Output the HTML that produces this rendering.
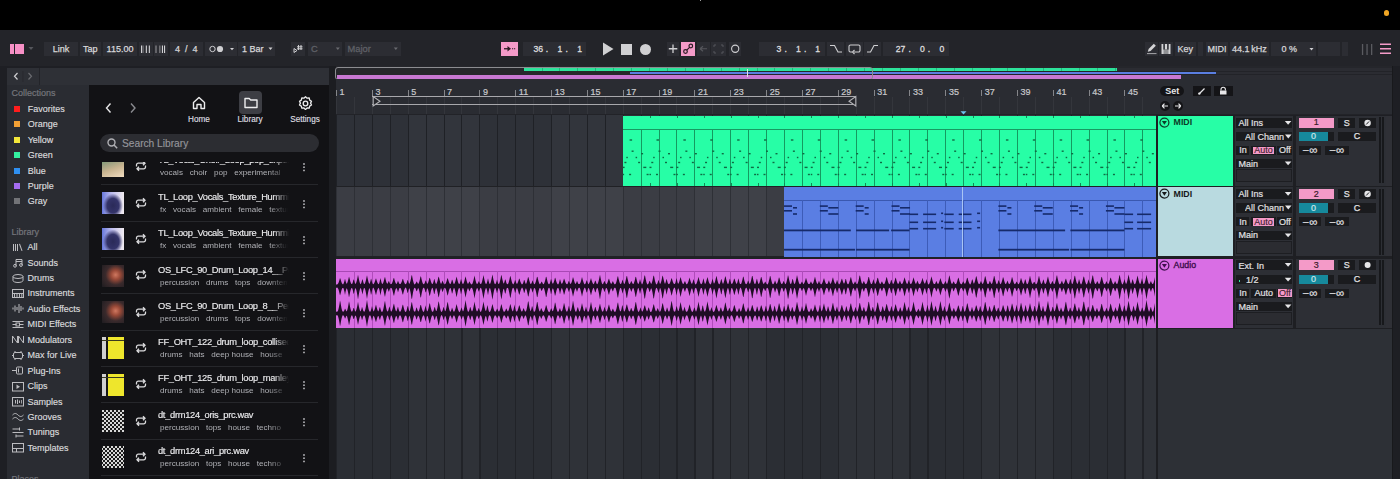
<!DOCTYPE html><html><head><meta charset="utf-8"><style>
*{margin:0;padding:0;box-sizing:border-box}
html,body{width:1400px;height:479px;overflow:hidden;background:#1e1f24;font-family:"Liberation Sans",sans-serif}
body>div,body>span,body>svg{position:absolute}
span{white-space:nowrap;line-height:1}
svg{overflow:visible}
</style></head><body>
<div style="left:0.00px;top:0.00px;width:1400.00px;height:30.00px;background:#000;"></div>
<div style="left:1384.20px;top:10.30px;width:5.30px;height:5.30px;background:#f0a624;border-radius:50%"></div>
<div style="left:700.00px;top:0.00px;width:1.00px;height:1.30px;background:#a0a0a0;"></div>
<div style="left:0.00px;top:30.00px;width:1400.00px;height:36.00px;background:#232429;"></div>
<div style="left:9.90px;top:43.70px;width:3.90px;height:10.40px;background:#f790c6;"></div>
<div style="left:15.40px;top:43.70px;width:8.50px;height:10.40px;background:#f790c6;"></div>
<svg style="left:27.00px;top:44.00px;" width="8" height="8" viewBox="0 0 8 8"><path d="M1.5 3h5L4 6z" fill="#55565c"/></svg>
<div style="left:44.00px;top:42.00px;width:34.00px;height:13.50px;background:#2c2d33;"></div>
<span style="left:44.00px;width:34.00px;top:45.25px;font-size:9px;color:#d8d8da;text-align:center;-webkit-text-stroke:0.25px #d8d8da">Link</span>
<div style="left:80.00px;top:42.00px;width:20.75px;height:13.50px;background:#2c2d33;"></div>
<span style="left:80.00px;width:20.75px;top:45.25px;font-size:9px;color:#d8d8da;text-align:center;-webkit-text-stroke:0.25px #d8d8da">Tap</span>
<div style="left:103.00px;top:42.00px;width:34.00px;height:13.50px;background:#2c2d33;"></div>
<span style="left:103.00px;width:34.00px;top:45.25px;font-size:9px;color:#d8d8da;text-align:center;-webkit-text-stroke:0.25px #d8d8da">115.00</span>
<div style="left:139.00px;top:42.00px;width:13.50px;height:13.50px;background:#2c2d33;"></div>
<svg style="left:139.00px;top:42.00px;" width="14" height="14" viewBox="0 0 14 14"><g fill="#cfcfd2"><rect x="2" y="3.5" width="1.1" height="7.5"/><rect x="3.6" y="3.5" width="0.9" height="7.5" fill="#8a8a8e"/><rect x="6.8" y="3.5" width="1.1" height="7.5"/><rect x="9.8" y="3.5" width="1.1" height="7.5"/></g></svg>
<div style="left:154.00px;top:42.00px;width:14.00px;height:13.50px;background:#2c2d33;"></div>
<svg style="left:154.00px;top:42.00px;" width="14" height="14" viewBox="0 0 14 14"><g fill="#cfcfd2"><rect x="1.5" y="3.5" width="1" height="7.5" fill="#9a9a9e"/><rect x="5.3" y="3.5" width="1.1" height="7.5" fill="#8a8a8e"/><rect x="7.9" y="3.5" width="1.1" height="7.5"/><rect x="10" y="3.5" width="1.1" height="7.5"/></g></svg>
<div style="left:169.60px;top:42.00px;width:33.40px;height:13.50px;background:#2c2d33;"></div>
<span style="left:169.60px;width:33.40px;top:45.25px;font-size:9px;color:#d8d8da;text-align:center;-webkit-text-stroke:0.25px #d8d8da">4&nbsp;&nbsp;/&nbsp;&nbsp;4</span>
<div style="left:205.00px;top:42.00px;width:31.60px;height:13.50px;background:#2c2d33;"></div>
<svg style="left:205.00px;top:42.00px;" width="32" height="14" viewBox="0 0 32 14"><circle cx="7.5" cy="7" r="2.7" fill="none" stroke="#cfcfd2" stroke-width="1"/><circle cx="15" cy="7" r="3.1" fill="#cfcfd2"/><path d="M25 6h4l-2 2.3z" fill="#cfcfd2"/></svg>
<div style="left:238.00px;top:42.00px;width:36.70px;height:13.50px;background:#2c2d33;"></div>
<span style="left:242.00px;top:44.60px;font-size:9px;color:#d8d8da;-webkit-text-stroke:0.25px #d8d8da">1 Bar</span>
<svg style="left:264.50px;top:42.00px;" width="12" height="14" viewBox="0 0 12 14"><path d="M3.5 5.5h4l-2 2.5z" fill="#cfcfd2"/></svg>
<div style="left:291.00px;top:42.00px;width:13.50px;height:13.50px;background:#2c2d33;"></div>
<svg style="left:291.00px;top:42.00px;" width="14" height="14" viewBox="0 0 14 14"><path d="M3 10.5 L3 6.5 L6 8.5 Z" fill="none" stroke="#cfcfd2" stroke-width="1"/><g fill="#cfcfd2"><rect x="7" y="3" width="1" height="5"/><rect x="9.5" y="3" width="1" height="5"/><rect x="6" y="4.3" width="5.5" height="1"/><rect x="6" y="6.3" width="5.5" height="1"/></g></svg>
<div style="left:307.60px;top:42.00px;width:34.40px;height:13.50px;background:#2c2d33;"></div>
<span style="left:311.00px;top:44.60px;font-size:9.3px;color:#5f6066;-webkit-text-stroke:0.3px #5f6066">C</span>
<svg style="left:335.00px;top:42.00px;" width="12" height="14" viewBox="0 0 12 14"><path d="M0.8 5.5h4l-2 2.5z" fill="#6a6b70"/></svg>
<div style="left:344.50px;top:42.00px;width:56.10px;height:13.50px;background:#2c2d33;"></div>
<span style="left:347.50px;top:44.60px;font-size:9.3px;color:#5f6066;-webkit-text-stroke:0.3px #5f6066">Major</span>
<svg style="left:393.00px;top:42.00px;" width="12" height="14" viewBox="0 0 12 14"><path d="M0.8 5.5h4l-2 2.5z" fill="#6a6b70"/></svg>
<div style="left:501.40px;top:42.00px;width:17.10px;height:13.50px;background:#f49ac8;"></div>
<svg style="left:501.40px;top:42.00px;" width="17" height="14" viewBox="0 0 17 14"><path d="M3 6.75h4" stroke="#2a1a22" stroke-width="1.3"/><path d="M6.5 4v5.5l3.5-2.75z" fill="#2a1a22"/><path d="M11 6.75h1.2M13 6.75h1.2" stroke="#2a1a22" stroke-width="1"/></svg>
<div style="left:523.00px;top:42.00px;width:63.00px;height:13.50px;background:#2c2d33;"></div>
<span style="left:533.60px;top:45.20px;font-size:8.6px;color:#dcdcde;-webkit-text-stroke:0.3px #dcdcde">36</span>
<span style="left:545.80px;top:45.20px;font-size:8.6px;color:#dcdcde;-webkit-text-stroke:0.3px #dcdcde">.</span>
<span style="left:557.60px;top:45.20px;font-size:8.6px;color:#dcdcde;-webkit-text-stroke:0.3px #dcdcde">1</span>
<span style="left:565.50px;top:45.20px;font-size:8.6px;color:#dcdcde;-webkit-text-stroke:0.3px #dcdcde">.</span>
<span style="left:577.20px;top:45.20px;font-size:8.6px;color:#dcdcde;-webkit-text-stroke:0.3px #dcdcde">1</span>
<svg style="left:600.00px;top:40.00px;" width="16" height="18" viewBox="0 0 16 18"><path d="M3 2.5 L13.5 9 L3 15.5 Z" fill="#d0d0d2"/></svg>
<div style="left:621.00px;top:43.50px;width:11.00px;height:11.00px;background:#d0d0d2;"></div>
<div style="left:640.00px;top:43.50px;width:11.00px;height:11.00px;background:#d0d0d2;border-radius:50%"></div>
<div style="left:667.00px;top:42.00px;width:11.50px;height:13.50px;background:#2c2d33;"></div>
<svg style="left:667.00px;top:42.00px;" width="12" height="14" viewBox="0 0 12 14"><path d="M6 2.5v8.5M1.8 6.75h8.5" stroke="#cfcfd2" stroke-width="1.3"/></svg>
<div style="left:681.00px;top:42.00px;width:14.00px;height:13.50px;background:#f49ac8;"></div>
<svg style="left:681.00px;top:42.00px;" width="14" height="14" viewBox="0 0 14 14"><circle cx="4.5" cy="9.5" r="1.8" fill="none" stroke="#2a1a22" stroke-width="1.2"/><circle cx="9.8" cy="4" r="1.8" fill="none" stroke="#2a1a22" stroke-width="1.2"/><path d="M5.7 8.2L8.6 5.3" stroke="#2a1a22" stroke-width="1.2"/></svg>
<div style="left:697.00px;top:42.00px;width:13.00px;height:13.50px;background:#2c2d33;"></div>
<svg style="left:697.00px;top:42.00px;" width="13" height="14" viewBox="0 0 13 14"><path d="M3 6.75h7M3 6.75l3-2.5M3 6.75l3 2.5" stroke="#55565c" stroke-width="1.2" fill="none"/></svg>
<div style="left:711.40px;top:42.00px;width:14.30px;height:13.50px;background:#2c2d33;"></div>
<svg style="left:711.40px;top:42.00px;" width="15" height="14" viewBox="0 0 15 14"><path d="M3 5V3h2M10 3h2v2M12 9v2h-2M5 11H3V9" stroke="#55565c" stroke-width="1" fill="none"/></svg>
<div style="left:728.60px;top:42.00px;width:12.40px;height:13.50px;background:#2c2d33;"></div>
<svg style="left:728.60px;top:42.00px;" width="13" height="14" viewBox="0 0 13 14"><circle cx="6.2" cy="6.75" r="3.6" fill="none" stroke="#cfcfd2" stroke-width="1.1"/></svg>
<div style="left:758.60px;top:42.00px;width:66.40px;height:13.50px;background:#2c2d33;"></div>
<span style="left:776.60px;top:45.20px;font-size:8.6px;color:#dcdcde;-webkit-text-stroke:0.3px #dcdcde">3</span>
<span style="left:784.60px;top:45.20px;font-size:8.6px;color:#dcdcde;-webkit-text-stroke:0.3px #dcdcde">.</span>
<span style="left:796.00px;top:45.20px;font-size:8.6px;color:#dcdcde;-webkit-text-stroke:0.3px #dcdcde">1</span>
<span style="left:804.00px;top:45.20px;font-size:8.6px;color:#dcdcde;-webkit-text-stroke:0.3px #dcdcde">.</span>
<span style="left:815.20px;top:45.20px;font-size:8.6px;color:#dcdcde;-webkit-text-stroke:0.3px #dcdcde">1</span>
<div style="left:826.60px;top:42.00px;width:17.40px;height:13.50px;background:#2c2d33;"></div>
<svg style="left:826.60px;top:42.00px;" width="18" height="14" viewBox="0 0 18 14"><path d="M3 3.5h4.5l3.5 6.5h4" stroke="#cfcfd2" stroke-width="1.1" fill="none"/></svg>
<div style="left:845.70px;top:42.00px;width:17.30px;height:13.50px;background:#2c2d33;"></div>
<svg style="left:845.70px;top:42.00px;" width="18" height="14" viewBox="0 0 18 14"><path d="M6 10H4.5a1.5 1.5 0 0 1-1.5-1.5V4.5A1.5 1.5 0 0 1 4.5 3h8A1.5 1.5 0 0 1 14 4.5v4a1.5 1.5 0 0 1-1.5 1.5H8" stroke="#cfcfd2" stroke-width="1.1" fill="none"/><path d="M8.5 8l-2 2 2 2" stroke="#cfcfd2" stroke-width="1.1" fill="none"/></svg>
<div style="left:864.00px;top:42.00px;width:17.00px;height:13.50px;background:#2c2d33;"></div>
<svg style="left:864.00px;top:42.00px;" width="17" height="14" viewBox="0 0 17 14"><path d="M3 10h3.5l3.5-6.5h4" stroke="#cfcfd2" stroke-width="1.1" fill="none"/></svg>
<div style="left:883.00px;top:42.00px;width:65.60px;height:13.50px;background:#2c2d33;"></div>
<span style="left:895.80px;top:45.20px;font-size:8.6px;color:#dcdcde;-webkit-text-stroke:0.3px #dcdcde">27</span>
<span style="left:908.40px;top:45.20px;font-size:8.6px;color:#dcdcde;-webkit-text-stroke:0.3px #dcdcde">.</span>
<span style="left:920.00px;top:45.20px;font-size:8.6px;color:#dcdcde;-webkit-text-stroke:0.3px #dcdcde">0</span>
<span style="left:927.80px;top:45.20px;font-size:8.6px;color:#dcdcde;-webkit-text-stroke:0.3px #dcdcde">.</span>
<span style="left:939.40px;top:45.20px;font-size:8.6px;color:#dcdcde;-webkit-text-stroke:0.3px #dcdcde">0</span>
<div style="left:1144.50px;top:42.00px;width:13.00px;height:13.50px;background:#2c2d33;"></div>
<svg style="left:1144.50px;top:42.00px;" width="13" height="14" viewBox="0 0 13 14"><path d="M2.8 9.8l0.8-2.8 5.2-5.2 2 2-5.2 5.2z" fill="#d4d4d6"/><rect x="2" y="11" width="9.5" height="1.1" fill="#9a9a9e"/></svg>
<div style="left:1159.00px;top:42.00px;width:13.50px;height:13.50px;background:#2c2d33;"></div>
<svg style="left:1159.00px;top:42.00px;" width="14" height="14" viewBox="0 0 14 14"><rect x="2.5" y="2" width="9" height="10" fill="#d4d4d6"/><g fill="#2c2d33"><rect x="4.3" y="2" width="1.6" height="5.5"/><rect x="8.1" y="2" width="1.6" height="5.5"/><rect x="6.6" y="7" width="0.8" height="5"/><rect x="4.8" y="7" width="0.6" height="5"/><rect x="8.6" y="7" width="0.6" height="5"/></g></svg>
<div style="left:1175.00px;top:42.00px;width:20.50px;height:13.50px;background:#2c2d33;"></div>
<span style="left:1175.00px;width:20.50px;top:45.25px;font-size:9px;color:#d8d8da;text-align:center;-webkit-text-stroke:0.25px #d8d8da">Key</span>
<div style="left:1197.50px;top:42.00px;width:5.50px;height:13.50px;background:#2c2d33;"></div>
<div style="left:1206.00px;top:42.00px;width:22.00px;height:13.50px;background:#2c2d33;"></div>
<span style="left:1206.00px;width:22.00px;top:45.25px;font-size:9px;color:#d8d8da;text-align:center;-webkit-text-stroke:0.25px #d8d8da">MIDI</span>
<div style="left:1230.00px;top:42.00px;width:38.75px;height:13.50px;background:#2c2d33;"></div>
<span style="left:1230.00px;width:38.75px;top:45.25px;font-size:9px;color:#d8d8da;text-align:center;-webkit-text-stroke:0.25px #d8d8da">44.1&thinsp;kHz</span>
<div style="left:1271.00px;top:42.00px;width:44.50px;height:13.50px;background:#2c2d33;"></div>
<span style="left:1281.50px;top:44.60px;font-size:9px;color:#d8d8da;-webkit-text-stroke:0.25px #d8d8da">0 %</span>
<svg style="left:1306.00px;top:42.00px;" width="12" height="14" viewBox="0 0 12 14"><path d="M3.5 6h4l-2 2.5z" fill="#cfcfd2"/></svg>
<div style="left:1317.50px;top:42.00px;width:22.50px;height:13.50px;background:#2c2d33;"></div>
<div style="left:1342.00px;top:42.00px;width:6.00px;height:13.50px;background:#2c2d33;"></div>
<svg style="left:1360.00px;top:42.00px;" width="14" height="14" viewBox="0 0 14 14"><g fill="#5a5b60"><rect x="1.9" y="2" width="1.3" height="11"/><rect x="6.4" y="2" width="1.3" height="11"/><rect x="11" y="2" width="1.3" height="11"/></g></svg>
<svg style="left:1379.00px;top:42.00px;" width="13" height="14" viewBox="0 0 13 14"><g fill="#f49ac8"><rect x="1" y="1.5" width="11" height="1.5"/><rect x="1" y="6" width="11" height="1.5"/><rect x="1" y="10.5" width="11" height="1.5"/></g></svg>
<div style="left:0.00px;top:66.00px;width:336.00px;height:413.00px;background:#1e1f24;"></div>
<div style="left:7.00px;top:68.00px;width:322.00px;height:16.50px;background:#2e3036;"></div>
<div style="left:38.50px;top:68.00px;width:1.20px;height:16.50px;background:#232429;"></div>
<svg style="left:7.00px;top:68.00px;" width="32" height="17" viewBox="0 0 32 17"><path d="M10.5 5L7.5 8.25l3 3.25" stroke="#cfcfd2" stroke-width="1.2" fill="none"/><path d="M21.5 5l3 3.25-3 3.25" stroke="#6a6b70" stroke-width="1.2" fill="none"/><rect x="15.5" y="3" width="0.8" height="11" fill="#26272c"/></svg>
<div style="left:7.00px;top:85.00px;width:81.50px;height:394.00px;background:#2a2c32;"></div>
<div style="left:88.50px;top:85.00px;width:240.50px;height:394.00px;background:#121215;"></div>
<span style="left:11.50px;top:89.30px;font-size:9px;color:#75767c;-webkit-text-stroke:0.2px #75767c">Collections</span>
<div style="left:14.00px;top:105.90px;width:6.00px;height:6.00px;background:#ff1d1d;"></div>
<span style="left:27.70px;top:104.80px;font-size:9px;color:#dcdcde;-webkit-text-stroke:0.15px #dcdcde">Favorites</span>
<div style="left:14.00px;top:121.33px;width:6.00px;height:6.00px;background:#f3a035;"></div>
<span style="left:27.70px;top:120.23px;font-size:9px;color:#dcdcde;-webkit-text-stroke:0.15px #dcdcde">Orange</span>
<div style="left:14.00px;top:136.76px;width:6.00px;height:6.00px;background:#f3e73a;"></div>
<span style="left:27.70px;top:135.66px;font-size:9px;color:#dcdcde;-webkit-text-stroke:0.15px #dcdcde">Yellow</span>
<div style="left:14.00px;top:152.19px;width:6.00px;height:6.00px;background:#34f0a0;"></div>
<span style="left:27.70px;top:151.09px;font-size:9px;color:#dcdcde;-webkit-text-stroke:0.15px #dcdcde">Green</span>
<div style="left:14.00px;top:167.62px;width:6.00px;height:6.00px;background:#2f8ff0;"></div>
<span style="left:27.70px;top:166.52px;font-size:9px;color:#dcdcde;-webkit-text-stroke:0.15px #dcdcde">Blue</span>
<div style="left:14.00px;top:183.05px;width:6.00px;height:6.00px;background:#a46cf0;"></div>
<span style="left:27.70px;top:181.95px;font-size:9px;color:#dcdcde;-webkit-text-stroke:0.15px #dcdcde">Purple</span>
<div style="left:14.00px;top:198.48px;width:6.00px;height:6.00px;background:#727377;"></div>
<span style="left:27.70px;top:197.38px;font-size:9px;color:#dcdcde;-webkit-text-stroke:0.15px #dcdcde">Gray</span>
<span style="left:11.50px;top:227.80px;font-size:9px;color:#75767c;-webkit-text-stroke:0.2px #75767c">Library</span>
<svg style="left:12.00px;top:240.70px;" width="13" height="13" viewBox="0 0 13 13"><g fill="#bcbcc0"><rect x="1" y="3" width="1" height="7"/><rect x="3" y="3" width="1" height="7"/><rect x="5" y="3" width="1" height="7"/><path d="M7 3l1-0.3 2.5 7-1 0.3z"/></g></svg>
<span style="left:27.50px;top:243.20px;font-size:9px;color:#dcdcde;-webkit-text-stroke:0.15px #dcdcde">All</span>
<svg style="left:12.00px;top:256.13px;" width="13" height="13" viewBox="0 0 13 13"><path d="M4 10V3.5h6v5.5" stroke="#bcbcc0" stroke-width="1" fill="none"/><circle cx="3" cy="9.8" r="1.4" fill="none" stroke="#bcbcc0" stroke-width="1"/><circle cx="9" cy="9" r="1.4" fill="none" stroke="#bcbcc0" stroke-width="1"/><path d="M4 5.5h6" stroke="#bcbcc0" stroke-width="1"/></svg>
<span style="left:27.50px;top:258.63px;font-size:9px;color:#dcdcde;-webkit-text-stroke:0.15px #dcdcde">Sounds</span>
<svg style="left:12.00px;top:271.56px;" width="13" height="13" viewBox="0 0 13 13"><ellipse cx="6" cy="4.5" rx="5" ry="2" fill="none" stroke="#bcbcc0" stroke-width="1"/><path d="M1 4.5v4c0 1.1 2.2 2 5 2s5-.9 5-2v-4" fill="none" stroke="#bcbcc0" stroke-width="1"/></svg>
<span style="left:27.50px;top:274.06px;font-size:9px;color:#dcdcde;-webkit-text-stroke:0.15px #dcdcde">Drums</span>
<svg style="left:12.00px;top:286.99px;" width="13" height="13" viewBox="0 0 13 13"><rect x="0.5" y="2.5" width="11" height="8" fill="none" stroke="#bcbcc0" stroke-width="1"/><path d="M0.5 6.5h11" stroke="#bcbcc0" stroke-width="1"/><g fill="#bcbcc0"><rect x="2" y="7" width="1" height="3"/><rect x="4.5" y="7" width="1" height="3"/><rect x="7" y="7" width="1" height="3"/><rect x="9.3" y="7" width="1" height="3"/></g></svg>
<span style="left:27.50px;top:289.49px;font-size:9px;color:#dcdcde;-webkit-text-stroke:0.15px #dcdcde">Instruments</span>
<svg style="left:12.00px;top:302.42px;" width="13" height="13" viewBox="0 0 13 13"><g fill="#bcbcc0"><rect x="0.5" y="5.5" width="1" height="2"/><rect x="2.5" y="3.5" width="1" height="6"/><rect x="4.5" y="5" width="1" height="3"/><rect x="6.5" y="2" width="1" height="9"/><rect x="8.5" y="4" width="1" height="5"/><rect x="10.5" y="5.5" width="1" height="2"/></g></svg>
<span style="left:27.50px;top:304.92px;font-size:9px;color:#dcdcde;-webkit-text-stroke:0.15px #dcdcde">Audio Effects</span>
<svg style="left:12.00px;top:317.85px;" width="13" height="13" viewBox="0 0 13 13"><path d="M0.5 3.5h11M0.5 6.5h4M7.5 6.5h4M0.5 9.5h11" stroke="#bcbcc0" stroke-width="1"/><rect x="4" y="5" width="3.5" height="3" fill="none" stroke="#bcbcc0" stroke-width="1"/></svg>
<span style="left:27.50px;top:320.35px;font-size:9px;color:#dcdcde;-webkit-text-stroke:0.15px #dcdcde">MIDI Effects</span>
<svg style="left:12.00px;top:333.28px;" width="13" height="13" viewBox="0 0 13 13"><path d="M0.5 10V3l5 7V3M6.5 10V3l5 7V3" stroke="#bcbcc0" stroke-width="1" fill="none"/></svg>
<span style="left:27.50px;top:335.78px;font-size:9px;color:#dcdcde;-webkit-text-stroke:0.15px #dcdcde">Modulators</span>
<svg style="left:12.00px;top:348.71px;" width="13" height="13" viewBox="0 0 13 13"><rect x="1.5" y="3.5" width="9" height="6" rx="1.5" fill="none" stroke="#bcbcc0" stroke-width="1"/><path d="M0 6.5h1.5M10.5 6.5H12M3 2v1.5M9 2v1.5M3 9.5v1.5M9 9.5v1.5" stroke="#bcbcc0" stroke-width="1"/></svg>
<span style="left:27.50px;top:351.21px;font-size:9px;color:#dcdcde;-webkit-text-stroke:0.15px #dcdcde">Max for Live</span>
<svg style="left:12.00px;top:364.14px;" width="13" height="13" viewBox="0 0 13 13"><rect x="4.5" y="3" width="6" height="7" rx="1" fill="none" stroke="#bcbcc0" stroke-width="1"/><path d="M0 6.5h4.5M6.5 4.5v4" stroke="#bcbcc0" stroke-width="1"/></svg>
<span style="left:27.50px;top:366.64px;font-size:9px;color:#dcdcde;-webkit-text-stroke:0.15px #dcdcde">Plug-Ins</span>
<svg style="left:12.00px;top:379.57px;" width="13" height="13" viewBox="0 0 13 13"><rect x="0.5" y="2.5" width="11" height="8.5" fill="none" stroke="#bcbcc0" stroke-width="1"/><path d="M4.5 4.5v4.5l3.5-2.25z" fill="#bcbcc0"/></svg>
<span style="left:27.50px;top:382.07px;font-size:9px;color:#dcdcde;-webkit-text-stroke:0.15px #dcdcde">Clips</span>
<svg style="left:12.00px;top:395.00px;" width="13" height="13" viewBox="0 0 13 13"><rect x="0.5" y="2.5" width="11" height="8.5" fill="none" stroke="#bcbcc0" stroke-width="1"/><g fill="#bcbcc0"><rect x="3" y="5" width="1" height="3.5"/><rect x="5" y="4.5" width="1" height="4.5"/><rect x="7" y="5.5" width="1" height="2.5"/><rect x="9" y="5" width="0.8" height="3.5"/></g></svg>
<span style="left:27.50px;top:397.50px;font-size:9px;color:#dcdcde;-webkit-text-stroke:0.15px #dcdcde">Samples</span>
<svg style="left:12.00px;top:410.43px;" width="13" height="13" viewBox="0 0 13 13"><path d="M0.5 5c2-2 3.5-2 5.5 0s3.5 2 5.5 0M0.5 9c2-2 3.5-2 5.5 0s3.5 2 5.5 0" stroke="#bcbcc0" stroke-width="1" fill="none"/></svg>
<span style="left:27.50px;top:412.93px;font-size:9px;color:#dcdcde;-webkit-text-stroke:0.15px #dcdcde">Grooves</span>
<svg style="left:12.00px;top:425.86px;" width="13" height="13" viewBox="0 0 13 13"><path d="M0.5 3h7M0.5 6.5h11M4 10h7.5M7.5 1.5v3M4 8.5v3" stroke="#bcbcc0" stroke-width="1" fill="none"/></svg>
<span style="left:27.50px;top:428.36px;font-size:9px;color:#dcdcde;-webkit-text-stroke:0.15px #dcdcde">Tunings</span>
<svg style="left:12.00px;top:441.29px;" width="13" height="13" viewBox="0 0 13 13"><rect x="0.5" y="2.5" width="11" height="8.5" fill="none" stroke="#bcbcc0" stroke-width="1"/><path d="M0.5 7.5h11M4.5 7.5v3.5" stroke="#bcbcc0" stroke-width="1"/></svg>
<span style="left:27.50px;top:443.79px;font-size:9px;color:#dcdcde;-webkit-text-stroke:0.15px #dcdcde">Templates</span>
<span style="left:11.50px;top:474.80px;font-size:9px;color:#75767c;-webkit-text-stroke:0.2px #75767c">Places</span>
<svg style="left:100.00px;top:100.00px;" width="40" height="16" viewBox="0 0 40 16"><path d="M10.5 3.5L6.5 8l4 4.5" stroke="#e6e6e8" stroke-width="1.4" fill="none"/><path d="M31 3.5l4 4.5-4 4.5" stroke="#8a8b90" stroke-width="1.4" fill="none"/></svg>
<svg style="left:191.00px;top:95.00px;" width="16" height="16" viewBox="0 0 16 16"><path d="M2.5 7.5L8 2.5l5.5 5V13.5H10V9.5H6v4H2.5z" fill="none" stroke="#ededee" stroke-width="1.4" stroke-linejoin="round"/></svg>
<span style="left:179.00px;width:40.00px;top:116.10px;font-size:8.2px;color:#dedee0;text-align:center;-webkit-text-stroke:0.15px #dedee0">Home</span>
<div style="left:239.00px;top:91.00px;width:23.00px;height:23.00px;background:#3d3e44;border-radius:4px"></div>
<svg style="left:242.50px;top:95.00px;" width="16" height="16" viewBox="0 0 16 16"><path d="M2 3.5h4.2l1.5 1.5H14v7.5H2z" fill="none" stroke="#ededee" stroke-width="1.4" stroke-linejoin="round"/></svg>
<span style="left:230.00px;width:40.00px;top:116.10px;font-size:8.2px;color:#dedee0;text-align:center;-webkit-text-stroke:0.15px #dedee0">Library</span>
<svg style="left:296.50px;top:94.50px;" width="17" height="17" viewBox="0 0 17 17"><path d="M8.5 1.8l1.6 1.4 2.1-.2.5 2.1 1.8 1.1-.9 1.9.9 1.9-1.8 1.1-.5 2.1-2.1-.2-1.6 1.4-1.6-1.4-2.1.2-.5-2.1-1.8-1.1.9-1.9-.9-1.9 1.8-1.1.5-2.1 2.1.2z" fill="none" stroke="#ededee" stroke-width="1.3" stroke-linejoin="round"/><circle cx="8.5" cy="8.5" r="2.3" fill="none" stroke="#ededee" stroke-width="1.3"/></svg>
<span style="left:280.00px;width:50.00px;top:116.10px;font-size:8.2px;color:#dedee0;text-align:center;-webkit-text-stroke:0.15px #dedee0">Settings</span>
<div style="left:100.00px;top:134.00px;width:219.00px;height:18.00px;background:#2c2d32;border-radius:9px"></div>
<svg style="left:106.00px;top:137.00px;" width="13" height="13" viewBox="0 0 13 13"><circle cx="5.5" cy="5.5" r="3.5" fill="none" stroke="#b0b0b4" stroke-width="1.4"/><path d="M8 8l3.2 3.2" stroke="#b0b0b4" stroke-width="1.5"/></svg>
<span style="left:122.00px;top:139.00px;font-size:10.2px;color:#95969b;-webkit-text-stroke:0.15px #95969b">Search Library</span>
<div style="left:88.5px;top:156px;width:240.5px;height:323px;overflow:hidden">
<div style="position:absolute;left:0;top:0;width:240.5px;height:5.7px;background:#121215;z-index:5"></div>
<div style="position:absolute;left:13.50px;top:-1.00px;width:22px;height:22px;background:linear-gradient(160deg,#4f9a6a 0%,#9aa080 35%,#c8b490 60%,#f0dcc0 100%)"></div>
<svg style="position:absolute;left:45.50px;top:3.70px" width="14" height="12" viewBox="0 0 14 12"><path d="M2.5 6.5V5a1.8 1.8 0 0 1 1.8-1.8H11M9 1.2l2 2-2 2M11.5 5.5V7a1.8 1.8 0 0 1-1.8 1.8H3M5 10.8l-2-2 2-2" stroke="#dcdcde" stroke-width="1.3" fill="none"/></svg>
<span style="position:absolute;left:69.50px;top:-2.10px;font-size:9.3px;color:#ececee;line-height:1.3;letter-spacing:-0.3px;-webkit-text-stroke:0.15px #ececee;width:131px;overflow:hidden;-webkit-mask-image:linear-gradient(90deg,#000 88%,transparent 100%)">TL_Vocal_Choir_Loop_pop_experim</span>
<span style="position:absolute;left:71.50px;top:12.90px;font-size:8.1px;color:#b0b1b6;width:128px;overflow:hidden;-webkit-mask-image:linear-gradient(90deg,#000 85%,transparent 100%)">vocals&nbsp;&nbsp; choir&nbsp;&nbsp; pop&nbsp;&nbsp; experimental</span>
<svg style="position:absolute;left:212.50px;top:4.70px" width="6" height="12" viewBox="0 0 6 12"><g fill="#b8b8bc"><circle cx="3" cy="3" r="0.9"/><circle cx="3" cy="6.2" r="0.9"/><circle cx="3" cy="9.4" r="0.9"/></g></svg>
<div style="position:absolute;left:12.50px;top:27.70px;width:216.50px;height:1.00px;background:#26272b;"></div>
<div style="position:absolute;left:13.50px;top:35.80px;width:22px;height:22px;background:radial-gradient(ellipse 45% 55% at 50% 62%,#2a2a58 0%,#34346a 60%,transparent 100%),linear-gradient(90deg,#6878dc 0%,#b8b8ec 40%,#f2ecf0 100%)"></div>
<svg style="position:absolute;left:45.50px;top:40.50px" width="14" height="12" viewBox="0 0 14 12"><path d="M2.5 6.5V5a1.8 1.8 0 0 1 1.8-1.8H11M9 1.2l2 2-2 2M11.5 5.5V7a1.8 1.8 0 0 1-1.8 1.8H3M5 10.8l-2-2 2-2" stroke="#dcdcde" stroke-width="1.3" fill="none"/></svg>
<span style="position:absolute;left:69.50px;top:34.70px;font-size:9.3px;color:#ececee;line-height:1.3;letter-spacing:-0.3px;-webkit-text-stroke:0.15px #ececee;width:131px;overflow:hidden;-webkit-mask-image:linear-gradient(90deg,#000 88%,transparent 100%)">TL_Loop_Vocals_Texture_Humming</span>
<span style="position:absolute;left:71.50px;top:49.70px;font-size:8.1px;color:#b0b1b6;width:128px;overflow:hidden;-webkit-mask-image:linear-gradient(90deg,#000 85%,transparent 100%)">fx&nbsp;&nbsp; vocals&nbsp;&nbsp; ambient&nbsp;&nbsp; female&nbsp;&nbsp; texture</span>
<svg style="position:absolute;left:212.50px;top:41.50px" width="6" height="12" viewBox="0 0 6 12"><g fill="#b8b8bc"><circle cx="3" cy="3" r="0.9"/><circle cx="3" cy="6.2" r="0.9"/><circle cx="3" cy="9.4" r="0.9"/></g></svg>
<div style="position:absolute;left:12.50px;top:64.50px;width:216.50px;height:1.00px;background:#26272b;"></div>
<div style="position:absolute;left:13.50px;top:72.30px;width:22px;height:22px;background:radial-gradient(ellipse 45% 55% at 50% 62%,#2a2a58 0%,#34346a 60%,transparent 100%),linear-gradient(90deg,#6878dc 0%,#b8b8ec 40%,#f2ecf0 100%)"></div>
<svg style="position:absolute;left:45.50px;top:77.00px" width="14" height="12" viewBox="0 0 14 12"><path d="M2.5 6.5V5a1.8 1.8 0 0 1 1.8-1.8H11M9 1.2l2 2-2 2M11.5 5.5V7a1.8 1.8 0 0 1-1.8 1.8H3M5 10.8l-2-2 2-2" stroke="#dcdcde" stroke-width="1.3" fill="none"/></svg>
<span style="position:absolute;left:69.50px;top:71.20px;font-size:9.3px;color:#ececee;line-height:1.3;letter-spacing:-0.3px;-webkit-text-stroke:0.15px #ececee;width:131px;overflow:hidden;-webkit-mask-image:linear-gradient(90deg,#000 88%,transparent 100%)">TL_Loop_Vocals_Texture_Humming</span>
<span style="position:absolute;left:71.50px;top:86.20px;font-size:8.1px;color:#b0b1b6;width:128px;overflow:hidden;-webkit-mask-image:linear-gradient(90deg,#000 85%,transparent 100%)">fx&nbsp;&nbsp; vocals&nbsp;&nbsp; ambient&nbsp;&nbsp; female&nbsp;&nbsp; texture</span>
<svg style="position:absolute;left:212.50px;top:78.00px" width="6" height="12" viewBox="0 0 6 12"><g fill="#b8b8bc"><circle cx="3" cy="3" r="0.9"/><circle cx="3" cy="6.2" r="0.9"/><circle cx="3" cy="9.4" r="0.9"/></g></svg>
<div style="position:absolute;left:12.50px;top:101.00px;width:216.50px;height:1.00px;background:#26272b;"></div>
<div style="position:absolute;left:13.50px;top:108.60px;width:22px;height:22px;background:radial-gradient(circle at 62% 45%,#d07860 0%,#9a4a38 25%,#3a2a2c 55%,#1e1c20 100%)"></div>
<svg style="position:absolute;left:45.50px;top:113.30px" width="14" height="12" viewBox="0 0 14 12"><path d="M2.5 6.5V5a1.8 1.8 0 0 1 1.8-1.8H11M9 1.2l2 2-2 2M11.5 5.5V7a1.8 1.8 0 0 1-1.8 1.8H3M5 10.8l-2-2 2-2" stroke="#dcdcde" stroke-width="1.3" fill="none"/></svg>
<span style="position:absolute;left:69.50px;top:107.50px;font-size:9.3px;color:#ececee;line-height:1.3;letter-spacing:-0.3px;-webkit-text-stroke:0.15px #ececee;width:131px;overflow:hidden;-webkit-mask-image:linear-gradient(90deg,#000 88%,transparent 100%)">OS_LFC_90_Drum_Loop_14__Perc</span>
<span style="position:absolute;left:71.50px;top:122.50px;font-size:8.1px;color:#b0b1b6;width:128px;overflow:hidden;-webkit-mask-image:linear-gradient(90deg,#000 85%,transparent 100%)">percussion&nbsp;&nbsp; drums&nbsp;&nbsp; tops&nbsp;&nbsp; downtempo</span>
<svg style="position:absolute;left:212.50px;top:114.30px" width="6" height="12" viewBox="0 0 6 12"><g fill="#b8b8bc"><circle cx="3" cy="3" r="0.9"/><circle cx="3" cy="6.2" r="0.9"/><circle cx="3" cy="9.4" r="0.9"/></g></svg>
<div style="position:absolute;left:12.50px;top:137.30px;width:216.50px;height:1.00px;background:#26272b;"></div>
<div style="position:absolute;left:13.50px;top:144.90px;width:22px;height:22px;background:radial-gradient(circle at 62% 45%,#d07860 0%,#9a4a38 25%,#3a2a2c 55%,#1e1c20 100%)"></div>
<svg style="position:absolute;left:45.50px;top:149.60px" width="14" height="12" viewBox="0 0 14 12"><path d="M2.5 6.5V5a1.8 1.8 0 0 1 1.8-1.8H11M9 1.2l2 2-2 2M11.5 5.5V7a1.8 1.8 0 0 1-1.8 1.8H3M5 10.8l-2-2 2-2" stroke="#dcdcde" stroke-width="1.3" fill="none"/></svg>
<span style="position:absolute;left:69.50px;top:143.80px;font-size:9.3px;color:#ececee;line-height:1.3;letter-spacing:-0.3px;-webkit-text-stroke:0.15px #ececee;width:131px;overflow:hidden;-webkit-mask-image:linear-gradient(90deg,#000 88%,transparent 100%)">OS_LFC_90_Drum_Loop_8__Perc_</span>
<span style="position:absolute;left:71.50px;top:158.80px;font-size:8.1px;color:#b0b1b6;width:128px;overflow:hidden;-webkit-mask-image:linear-gradient(90deg,#000 85%,transparent 100%)">percussion&nbsp;&nbsp; drums&nbsp;&nbsp; tops&nbsp;&nbsp; downtempo</span>
<svg style="position:absolute;left:212.50px;top:150.60px" width="6" height="12" viewBox="0 0 6 12"><g fill="#b8b8bc"><circle cx="3" cy="3" r="0.9"/><circle cx="3" cy="6.2" r="0.9"/><circle cx="3" cy="9.4" r="0.9"/></g></svg>
<div style="position:absolute;left:12.50px;top:173.60px;width:216.50px;height:1.00px;background:#26272b;"></div>
<div style="position:absolute;left:13.50px;top:181.20px;width:22px;height:22px;background:linear-gradient(180deg,transparent 0 12%,#3a3a20 12% 17%,transparent 17%),linear-gradient(90deg,#cfcfd0 0 16%,#151515 16% 27%,#eee62c 27%)"></div>
<svg style="position:absolute;left:45.50px;top:185.90px" width="14" height="12" viewBox="0 0 14 12"><path d="M2.5 6.5V5a1.8 1.8 0 0 1 1.8-1.8H11M9 1.2l2 2-2 2M11.5 5.5V7a1.8 1.8 0 0 1-1.8 1.8H3M5 10.8l-2-2 2-2" stroke="#dcdcde" stroke-width="1.3" fill="none"/></svg>
<span style="position:absolute;left:69.50px;top:180.10px;font-size:9.3px;color:#ececee;line-height:1.3;letter-spacing:-0.3px;-webkit-text-stroke:0.15px #ececee;width:131px;overflow:hidden;-webkit-mask-image:linear-gradient(90deg,#000 88%,transparent 100%)">FF_OHT_122_drum_loop_collised_</span>
<span style="position:absolute;left:71.50px;top:195.10px;font-size:8.1px;color:#b0b1b6;width:128px;overflow:hidden;-webkit-mask-image:linear-gradient(90deg,#000 85%,transparent 100%)">drums&nbsp;&nbsp; hats&nbsp;&nbsp; deep house&nbsp;&nbsp; house</span>
<svg style="position:absolute;left:212.50px;top:186.90px" width="6" height="12" viewBox="0 0 6 12"><g fill="#b8b8bc"><circle cx="3" cy="3" r="0.9"/><circle cx="3" cy="6.2" r="0.9"/><circle cx="3" cy="9.4" r="0.9"/></g></svg>
<div style="position:absolute;left:12.50px;top:209.90px;width:216.50px;height:1.00px;background:#26272b;"></div>
<div style="position:absolute;left:13.50px;top:217.50px;width:22px;height:22px;background:linear-gradient(180deg,transparent 0 12%,#3a3a20 12% 17%,transparent 17%),linear-gradient(90deg,#cfcfd0 0 16%,#151515 16% 27%,#eee62c 27%)"></div>
<svg style="position:absolute;left:45.50px;top:222.20px" width="14" height="12" viewBox="0 0 14 12"><path d="M2.5 6.5V5a1.8 1.8 0 0 1 1.8-1.8H11M9 1.2l2 2-2 2M11.5 5.5V7a1.8 1.8 0 0 1-1.8 1.8H3M5 10.8l-2-2 2-2" stroke="#dcdcde" stroke-width="1.3" fill="none"/></svg>
<span style="position:absolute;left:69.50px;top:216.40px;font-size:9.3px;color:#ececee;line-height:1.3;letter-spacing:-0.3px;-webkit-text-stroke:0.15px #ececee;width:131px;overflow:hidden;-webkit-mask-image:linear-gradient(90deg,#000 88%,transparent 100%)">FF_OHT_125_drum_loop_manley_</span>
<span style="position:absolute;left:71.50px;top:231.40px;font-size:8.1px;color:#b0b1b6;width:128px;overflow:hidden;-webkit-mask-image:linear-gradient(90deg,#000 85%,transparent 100%)">drums&nbsp;&nbsp; hats&nbsp;&nbsp; deep house&nbsp;&nbsp; house</span>
<svg style="position:absolute;left:212.50px;top:223.20px" width="6" height="12" viewBox="0 0 6 12"><g fill="#b8b8bc"><circle cx="3" cy="3" r="0.9"/><circle cx="3" cy="6.2" r="0.9"/><circle cx="3" cy="9.4" r="0.9"/></g></svg>
<div style="position:absolute;left:12.50px;top:246.20px;width:216.50px;height:1.00px;background:#26272b;"></div>
<div style="position:absolute;left:13.50px;top:253.80px;width:22px;height:22px;background:repeating-conic-gradient(#1c1c1c 0 25%,#d8d8d8 0 50%) 0 0/4px 4px"></div>
<svg style="position:absolute;left:45.50px;top:258.50px" width="14" height="12" viewBox="0 0 14 12"><path d="M2.5 6.5V5a1.8 1.8 0 0 1 1.8-1.8H11M9 1.2l2 2-2 2M11.5 5.5V7a1.8 1.8 0 0 1-1.8 1.8H3M5 10.8l-2-2 2-2" stroke="#dcdcde" stroke-width="1.3" fill="none"/></svg>
<span style="position:absolute;left:69.50px;top:252.70px;font-size:9.3px;color:#ececee;line-height:1.3;letter-spacing:-0.3px;-webkit-text-stroke:0.15px #ececee;width:131px;overflow:hidden;-webkit-mask-image:linear-gradient(90deg,#000 88%,transparent 100%)">dt_drm124_oris_prc.wav</span>
<span style="position:absolute;left:71.50px;top:267.70px;font-size:8.1px;color:#b0b1b6;width:128px;overflow:hidden;-webkit-mask-image:linear-gradient(90deg,#000 85%,transparent 100%)">percussion&nbsp;&nbsp; tops&nbsp;&nbsp; house&nbsp;&nbsp; techno</span>
<svg style="position:absolute;left:212.50px;top:259.50px" width="6" height="12" viewBox="0 0 6 12"><g fill="#b8b8bc"><circle cx="3" cy="3" r="0.9"/><circle cx="3" cy="6.2" r="0.9"/><circle cx="3" cy="9.4" r="0.9"/></g></svg>
<div style="position:absolute;left:12.50px;top:282.50px;width:216.50px;height:1.00px;background:#26272b;"></div>
<div style="position:absolute;left:13.50px;top:290.10px;width:22px;height:22px;background:repeating-conic-gradient(#1c1c1c 0 25%,#d8d8d8 0 50%) 1px 0/4px 4px"></div>
<svg style="position:absolute;left:45.50px;top:294.80px" width="14" height="12" viewBox="0 0 14 12"><path d="M2.5 6.5V5a1.8 1.8 0 0 1 1.8-1.8H11M9 1.2l2 2-2 2M11.5 5.5V7a1.8 1.8 0 0 1-1.8 1.8H3M5 10.8l-2-2 2-2" stroke="#dcdcde" stroke-width="1.3" fill="none"/></svg>
<span style="position:absolute;left:69.50px;top:289.00px;font-size:9.3px;color:#ececee;line-height:1.3;letter-spacing:-0.3px;-webkit-text-stroke:0.15px #ececee;width:131px;overflow:hidden;-webkit-mask-image:linear-gradient(90deg,#000 88%,transparent 100%)">dt_drm124_ari_prc.wav</span>
<span style="position:absolute;left:71.50px;top:304.00px;font-size:8.1px;color:#b0b1b6;width:128px;overflow:hidden;-webkit-mask-image:linear-gradient(90deg,#000 85%,transparent 100%)">percussion&nbsp;&nbsp; tops&nbsp;&nbsp; house&nbsp;&nbsp; techno</span>
<svg style="position:absolute;left:212.50px;top:295.80px" width="6" height="12" viewBox="0 0 6 12"><g fill="#b8b8bc"><circle cx="3" cy="3" r="0.9"/><circle cx="3" cy="6.2" r="0.9"/><circle cx="3" cy="9.4" r="0.9"/></g></svg>
<div style="position:absolute;left:12.50px;top:318.80px;width:216.50px;height:1.00px;background:#26272b;"></div>
</div>
<div style="left:329.00px;top:66.00px;width:7.00px;height:413.00px;background:#1c1d21;"></div>
<div style="left:336.00px;top:66.00px;width:1064.00px;height:13.00px;background:#25262b;"></div>
<div style="left:336.00px;top:67.60px;width:1056.00px;height:11.80px;background:#2b2c32;"></div>
<div style="left:336.00px;top:70.90px;width:1056.00px;height:1.10px;background:#222328;"></div>
<div style="left:336.00px;top:74.10px;width:1056.00px;height:0.90px;background:#222328;"></div>
<div style="left:336.00px;top:66.80px;width:537.00px;height:12.60px;background:#26272b;"></div>
<div style="left:523.60px;top:68.00px;width:593.40px;height:2.90px;background:#2de39b;"></div>
<div style="left:541.52px;top:68.00px;width:0.80px;height:2.90px;background:#22b57a;"></div>
<div style="left:559.44px;top:68.00px;width:0.80px;height:2.90px;background:#22b57a;"></div>
<div style="left:577.36px;top:68.00px;width:0.80px;height:2.90px;background:#22b57a;"></div>
<div style="left:595.28px;top:68.00px;width:0.80px;height:2.90px;background:#22b57a;"></div>
<div style="left:613.20px;top:68.00px;width:0.80px;height:2.90px;background:#22b57a;"></div>
<div style="left:631.12px;top:68.00px;width:0.80px;height:2.90px;background:#22b57a;"></div>
<div style="left:649.04px;top:68.00px;width:0.80px;height:2.90px;background:#22b57a;"></div>
<div style="left:666.96px;top:68.00px;width:0.80px;height:2.90px;background:#22b57a;"></div>
<div style="left:684.88px;top:68.00px;width:0.80px;height:2.90px;background:#22b57a;"></div>
<div style="left:702.80px;top:68.00px;width:0.80px;height:2.90px;background:#22b57a;"></div>
<div style="left:720.72px;top:68.00px;width:0.80px;height:2.90px;background:#22b57a;"></div>
<div style="left:738.64px;top:68.00px;width:0.80px;height:2.90px;background:#22b57a;"></div>
<div style="left:756.56px;top:68.00px;width:0.80px;height:2.90px;background:#22b57a;"></div>
<div style="left:774.48px;top:68.00px;width:0.80px;height:2.90px;background:#22b57a;"></div>
<div style="left:792.40px;top:68.00px;width:0.80px;height:2.90px;background:#22b57a;"></div>
<div style="left:810.32px;top:68.00px;width:0.80px;height:2.90px;background:#22b57a;"></div>
<div style="left:828.24px;top:68.00px;width:0.80px;height:2.90px;background:#22b57a;"></div>
<div style="left:846.16px;top:68.00px;width:0.80px;height:2.90px;background:#22b57a;"></div>
<div style="left:864.08px;top:68.00px;width:0.80px;height:2.90px;background:#22b57a;"></div>
<div style="left:882.00px;top:68.00px;width:0.80px;height:2.90px;background:#22b57a;"></div>
<div style="left:899.92px;top:68.00px;width:0.80px;height:2.90px;background:#22b57a;"></div>
<div style="left:917.84px;top:68.00px;width:0.80px;height:2.90px;background:#22b57a;"></div>
<div style="left:935.76px;top:68.00px;width:0.80px;height:2.90px;background:#22b57a;"></div>
<div style="left:953.68px;top:68.00px;width:0.80px;height:2.90px;background:#22b57a;"></div>
<div style="left:971.60px;top:68.00px;width:0.80px;height:2.90px;background:#22b57a;"></div>
<div style="left:989.52px;top:68.00px;width:0.80px;height:2.90px;background:#22b57a;"></div>
<div style="left:1007.44px;top:68.00px;width:0.80px;height:2.90px;background:#22b57a;"></div>
<div style="left:1025.36px;top:68.00px;width:0.80px;height:2.90px;background:#22b57a;"></div>
<div style="left:1043.28px;top:68.00px;width:0.80px;height:2.90px;background:#22b57a;"></div>
<div style="left:1061.20px;top:68.00px;width:0.80px;height:2.90px;background:#22b57a;"></div>
<div style="left:1079.12px;top:68.00px;width:0.80px;height:2.90px;background:#22b57a;"></div>
<div style="left:1097.04px;top:68.00px;width:0.80px;height:2.90px;background:#22b57a;"></div>
<div style="left:1114.96px;top:68.00px;width:0.80px;height:2.90px;background:#22b57a;"></div>
<div style="left:630.00px;top:72.00px;width:586.00px;height:2.10px;background:#5a7ee0;"></div>
<div style="left:336.80px;top:75.00px;width:844.20px;height:3.90px;background:#c878d2;"></div>
<div style="left:335.30px;top:66.80px;width:538.00px;height:13.00px;background:transparent;border:1.3px solid #8c8c90;border-radius:3px"></div>
<div style="left:746.50px;top:69.00px;width:1.00px;height:8.00px;background:#e0e0e0;"></div>
<div style="left:336.00px;top:79.00px;width:1056.00px;height:36.00px;background:#2a2c32;"></div>
<div style="left:336.00px;top:113.80px;width:1056.00px;height:1.40px;background:#222328;"></div>
<div style="left:336.00px;top:97.00px;width:0.80px;height:17.00px;background:#34363c;"></div>
<div style="left:353.92px;top:97.00px;width:0.80px;height:17.00px;background:#34363c;"></div>
<div style="left:371.84px;top:97.00px;width:0.80px;height:17.00px;background:#34363c;"></div>
<div style="left:389.76px;top:97.00px;width:0.80px;height:17.00px;background:#34363c;"></div>
<div style="left:407.68px;top:97.00px;width:0.80px;height:17.00px;background:#34363c;"></div>
<div style="left:425.60px;top:97.00px;width:0.80px;height:17.00px;background:#34363c;"></div>
<div style="left:443.52px;top:97.00px;width:0.80px;height:17.00px;background:#34363c;"></div>
<div style="left:461.44px;top:97.00px;width:0.80px;height:17.00px;background:#34363c;"></div>
<div style="left:479.36px;top:97.00px;width:0.80px;height:17.00px;background:#34363c;"></div>
<div style="left:497.28px;top:97.00px;width:0.80px;height:17.00px;background:#34363c;"></div>
<div style="left:515.20px;top:97.00px;width:0.80px;height:17.00px;background:#34363c;"></div>
<div style="left:533.12px;top:97.00px;width:0.80px;height:17.00px;background:#34363c;"></div>
<div style="left:551.04px;top:97.00px;width:0.80px;height:17.00px;background:#34363c;"></div>
<div style="left:568.96px;top:97.00px;width:0.80px;height:17.00px;background:#34363c;"></div>
<div style="left:586.88px;top:97.00px;width:0.80px;height:17.00px;background:#34363c;"></div>
<div style="left:604.80px;top:97.00px;width:0.80px;height:17.00px;background:#34363c;"></div>
<div style="left:622.72px;top:97.00px;width:0.80px;height:17.00px;background:#34363c;"></div>
<div style="left:640.64px;top:97.00px;width:0.80px;height:17.00px;background:#34363c;"></div>
<div style="left:658.56px;top:97.00px;width:0.80px;height:17.00px;background:#34363c;"></div>
<div style="left:676.48px;top:97.00px;width:0.80px;height:17.00px;background:#34363c;"></div>
<div style="left:694.40px;top:97.00px;width:0.80px;height:17.00px;background:#34363c;"></div>
<div style="left:712.32px;top:97.00px;width:0.80px;height:17.00px;background:#34363c;"></div>
<div style="left:730.24px;top:97.00px;width:0.80px;height:17.00px;background:#34363c;"></div>
<div style="left:748.16px;top:97.00px;width:0.80px;height:17.00px;background:#34363c;"></div>
<div style="left:766.08px;top:97.00px;width:0.80px;height:17.00px;background:#34363c;"></div>
<div style="left:784.00px;top:97.00px;width:0.80px;height:17.00px;background:#34363c;"></div>
<div style="left:801.92px;top:97.00px;width:0.80px;height:17.00px;background:#34363c;"></div>
<div style="left:819.84px;top:97.00px;width:0.80px;height:17.00px;background:#34363c;"></div>
<div style="left:837.76px;top:97.00px;width:0.80px;height:17.00px;background:#34363c;"></div>
<div style="left:855.68px;top:97.00px;width:0.80px;height:17.00px;background:#34363c;"></div>
<div style="left:873.60px;top:97.00px;width:0.80px;height:17.00px;background:#34363c;"></div>
<div style="left:891.52px;top:97.00px;width:0.80px;height:17.00px;background:#34363c;"></div>
<div style="left:909.44px;top:97.00px;width:0.80px;height:17.00px;background:#34363c;"></div>
<div style="left:927.36px;top:97.00px;width:0.80px;height:17.00px;background:#34363c;"></div>
<div style="left:945.28px;top:97.00px;width:0.80px;height:17.00px;background:#34363c;"></div>
<div style="left:963.20px;top:97.00px;width:0.80px;height:17.00px;background:#34363c;"></div>
<div style="left:981.12px;top:97.00px;width:0.80px;height:17.00px;background:#34363c;"></div>
<div style="left:999.04px;top:97.00px;width:0.80px;height:17.00px;background:#34363c;"></div>
<div style="left:1016.96px;top:97.00px;width:0.80px;height:17.00px;background:#34363c;"></div>
<div style="left:1034.88px;top:97.00px;width:0.80px;height:17.00px;background:#34363c;"></div>
<div style="left:1052.80px;top:97.00px;width:0.80px;height:17.00px;background:#34363c;"></div>
<div style="left:1070.72px;top:97.00px;width:0.80px;height:17.00px;background:#34363c;"></div>
<div style="left:1088.64px;top:97.00px;width:0.80px;height:17.00px;background:#34363c;"></div>
<div style="left:1106.56px;top:97.00px;width:0.80px;height:17.00px;background:#34363c;"></div>
<div style="left:1124.48px;top:97.00px;width:0.80px;height:17.00px;background:#34363c;"></div>
<div style="left:1142.40px;top:97.00px;width:0.80px;height:17.00px;background:#34363c;"></div>
<div style="left:336.00px;top:90.00px;width:0.90px;height:6.00px;background:#85868a;"></div>
<span style="left:339.60px;top:88.00px;font-size:9px;color:#c9c9cc;-webkit-text-stroke:0.2px #c9c9cc">1</span>
<div style="left:371.84px;top:90.00px;width:0.90px;height:6.00px;background:#85868a;"></div>
<span style="left:375.44px;top:88.00px;font-size:9px;color:#c9c9cc;-webkit-text-stroke:0.2px #c9c9cc">3</span>
<div style="left:407.68px;top:90.00px;width:0.90px;height:6.00px;background:#85868a;"></div>
<span style="left:411.28px;top:88.00px;font-size:9px;color:#c9c9cc;-webkit-text-stroke:0.2px #c9c9cc">5</span>
<div style="left:443.52px;top:90.00px;width:0.90px;height:6.00px;background:#85868a;"></div>
<span style="left:447.12px;top:88.00px;font-size:9px;color:#c9c9cc;-webkit-text-stroke:0.2px #c9c9cc">7</span>
<div style="left:479.36px;top:90.00px;width:0.90px;height:6.00px;background:#85868a;"></div>
<span style="left:482.96px;top:88.00px;font-size:9px;color:#c9c9cc;-webkit-text-stroke:0.2px #c9c9cc">9</span>
<div style="left:515.20px;top:90.00px;width:0.90px;height:6.00px;background:#85868a;"></div>
<span style="left:518.80px;top:88.00px;font-size:9px;color:#c9c9cc;-webkit-text-stroke:0.2px #c9c9cc">11</span>
<div style="left:551.04px;top:90.00px;width:0.90px;height:6.00px;background:#85868a;"></div>
<span style="left:554.64px;top:88.00px;font-size:9px;color:#c9c9cc;-webkit-text-stroke:0.2px #c9c9cc">13</span>
<div style="left:586.88px;top:90.00px;width:0.90px;height:6.00px;background:#85868a;"></div>
<span style="left:590.48px;top:88.00px;font-size:9px;color:#c9c9cc;-webkit-text-stroke:0.2px #c9c9cc">15</span>
<div style="left:622.72px;top:90.00px;width:0.90px;height:6.00px;background:#85868a;"></div>
<span style="left:626.32px;top:88.00px;font-size:9px;color:#c9c9cc;-webkit-text-stroke:0.2px #c9c9cc">17</span>
<div style="left:658.56px;top:90.00px;width:0.90px;height:6.00px;background:#85868a;"></div>
<span style="left:662.16px;top:88.00px;font-size:9px;color:#c9c9cc;-webkit-text-stroke:0.2px #c9c9cc">19</span>
<div style="left:694.40px;top:90.00px;width:0.90px;height:6.00px;background:#85868a;"></div>
<span style="left:698.00px;top:88.00px;font-size:9px;color:#c9c9cc;-webkit-text-stroke:0.2px #c9c9cc">21</span>
<div style="left:730.24px;top:90.00px;width:0.90px;height:6.00px;background:#85868a;"></div>
<span style="left:733.84px;top:88.00px;font-size:9px;color:#c9c9cc;-webkit-text-stroke:0.2px #c9c9cc">23</span>
<div style="left:766.08px;top:90.00px;width:0.90px;height:6.00px;background:#85868a;"></div>
<span style="left:769.68px;top:88.00px;font-size:9px;color:#c9c9cc;-webkit-text-stroke:0.2px #c9c9cc">25</span>
<div style="left:801.92px;top:90.00px;width:0.90px;height:6.00px;background:#85868a;"></div>
<span style="left:805.52px;top:88.00px;font-size:9px;color:#c9c9cc;-webkit-text-stroke:0.2px #c9c9cc">27</span>
<div style="left:837.76px;top:90.00px;width:0.90px;height:6.00px;background:#85868a;"></div>
<span style="left:841.36px;top:88.00px;font-size:9px;color:#c9c9cc;-webkit-text-stroke:0.2px #c9c9cc">29</span>
<div style="left:873.60px;top:90.00px;width:0.90px;height:6.00px;background:#85868a;"></div>
<span style="left:877.20px;top:88.00px;font-size:9px;color:#c9c9cc;-webkit-text-stroke:0.2px #c9c9cc">31</span>
<div style="left:909.44px;top:90.00px;width:0.90px;height:6.00px;background:#85868a;"></div>
<span style="left:913.04px;top:88.00px;font-size:9px;color:#c9c9cc;-webkit-text-stroke:0.2px #c9c9cc">33</span>
<div style="left:945.28px;top:90.00px;width:0.90px;height:6.00px;background:#85868a;"></div>
<span style="left:948.88px;top:88.00px;font-size:9px;color:#c9c9cc;-webkit-text-stroke:0.2px #c9c9cc">35</span>
<div style="left:981.12px;top:90.00px;width:0.90px;height:6.00px;background:#85868a;"></div>
<span style="left:984.72px;top:88.00px;font-size:9px;color:#c9c9cc;-webkit-text-stroke:0.2px #c9c9cc">37</span>
<div style="left:1016.96px;top:90.00px;width:0.90px;height:6.00px;background:#85868a;"></div>
<span style="left:1020.56px;top:88.00px;font-size:9px;color:#c9c9cc;-webkit-text-stroke:0.2px #c9c9cc">39</span>
<div style="left:1052.80px;top:90.00px;width:0.90px;height:6.00px;background:#85868a;"></div>
<span style="left:1056.40px;top:88.00px;font-size:9px;color:#c9c9cc;-webkit-text-stroke:0.2px #c9c9cc">41</span>
<div style="left:1088.64px;top:90.00px;width:0.90px;height:6.00px;background:#85868a;"></div>
<span style="left:1092.24px;top:88.00px;font-size:9px;color:#c9c9cc;-webkit-text-stroke:0.2px #c9c9cc">43</span>
<div style="left:1124.48px;top:90.00px;width:0.90px;height:6.00px;background:#85868a;"></div>
<span style="left:1128.08px;top:88.00px;font-size:9px;color:#c9c9cc;-webkit-text-stroke:0.2px #c9c9cc">45</span>
<div style="left:372.30px;top:96.00px;width:483.50px;height:8.60px;background:transparent;border-top:1.2px solid #a8a8ac;border-bottom:1.2px solid #a8a8ac"></div>
<svg style="left:370.00px;top:94.00px;" width="14" height="13" viewBox="0 0 14 13"><path d="M3.2 2.5v9.5L10 7.25z" fill="#26272c" stroke="#b4b4b8" stroke-width="1.1"/></svg>
<svg style="left:845.00px;top:94.00px;" width="14" height="13" viewBox="0 0 14 13"><path d="M10.8 2.5v9.5L4 7.25z" fill="#26272c" stroke="#b4b4b8" stroke-width="1.1"/></svg>
<svg style="left:959.50px;top:110.60px;" width="7" height="4" viewBox="0 0 7 4"><path d="M0.5 0.3h6L3.5 3.6z" fill="#6cc4ee"/></svg>
<div style="left:336.00px;top:115.00px;width:820.00px;height:71.00px;background:#2e3138;"></div>
<div style="left:336.00px;top:185.80px;width:820.00px;height:1.60px;background:#202125;"></div>
<div style="left:336.00px;top:187.40px;width:820.00px;height:69.00px;background:#3b3d44;"></div>
<div style="left:336.00px;top:256.40px;width:820.00px;height:2.40px;background:#202125;"></div>
<div style="left:336.00px;top:328.00px;width:820.00px;height:151.00px;background:#2b2e34;"></div>
<div style="left:407.68px;top:115.00px;width:71.68px;height:70.80px;background:rgba(255,255,255,0.022);"></div>
<div style="left:407.68px;top:187.40px;width:71.68px;height:69.00px;background:rgba(255,255,255,0.022);"></div>
<div style="left:407.68px;top:328.00px;width:71.68px;height:151.00px;background:rgba(255,255,255,0.022);"></div>
<div style="left:551.04px;top:115.00px;width:71.68px;height:70.80px;background:rgba(255,255,255,0.022);"></div>
<div style="left:551.04px;top:187.40px;width:71.68px;height:69.00px;background:rgba(255,255,255,0.022);"></div>
<div style="left:551.04px;top:328.00px;width:71.68px;height:151.00px;background:rgba(255,255,255,0.022);"></div>
<div style="left:694.40px;top:115.00px;width:71.68px;height:70.80px;background:rgba(255,255,255,0.022);"></div>
<div style="left:694.40px;top:187.40px;width:71.68px;height:69.00px;background:rgba(255,255,255,0.022);"></div>
<div style="left:694.40px;top:328.00px;width:71.68px;height:151.00px;background:rgba(255,255,255,0.022);"></div>
<div style="left:837.76px;top:115.00px;width:71.68px;height:70.80px;background:rgba(255,255,255,0.022);"></div>
<div style="left:837.76px;top:187.40px;width:71.68px;height:69.00px;background:rgba(255,255,255,0.022);"></div>
<div style="left:837.76px;top:328.00px;width:71.68px;height:151.00px;background:rgba(255,255,255,0.022);"></div>
<div style="left:981.12px;top:115.00px;width:71.68px;height:70.80px;background:rgba(255,255,255,0.022);"></div>
<div style="left:981.12px;top:187.40px;width:71.68px;height:69.00px;background:rgba(255,255,255,0.022);"></div>
<div style="left:981.12px;top:328.00px;width:71.68px;height:151.00px;background:rgba(255,255,255,0.022);"></div>
<div style="left:1124.48px;top:115.00px;width:31.52px;height:70.80px;background:rgba(255,255,255,0.022);"></div>
<div style="left:1124.48px;top:187.40px;width:31.52px;height:69.00px;background:rgba(255,255,255,0.022);"></div>
<div style="left:1124.48px;top:328.00px;width:31.52px;height:151.00px;background:rgba(255,255,255,0.022);"></div>
<div style="left:336.00px;top:115.00px;width:0.90px;height:71.00px;background:#1f2126;"></div>
<div style="left:336.00px;top:187.40px;width:0.90px;height:69.00px;background:#2e3036;"></div>
<div style="left:336.00px;top:328.00px;width:1.20px;height:151.00px;background:#212328;"></div>
<div style="left:353.92px;top:115.00px;width:0.90px;height:71.00px;background:#1f2126;"></div>
<div style="left:353.92px;top:187.40px;width:0.90px;height:69.00px;background:#2e3036;"></div>
<div style="left:353.92px;top:328.00px;width:1.20px;height:151.00px;background:#212328;"></div>
<div style="left:371.84px;top:115.00px;width:0.90px;height:71.00px;background:#1f2126;"></div>
<div style="left:371.84px;top:187.40px;width:0.90px;height:69.00px;background:#2e3036;"></div>
<div style="left:371.84px;top:328.00px;width:1.20px;height:151.00px;background:#212328;"></div>
<div style="left:389.76px;top:115.00px;width:0.90px;height:71.00px;background:#1f2126;"></div>
<div style="left:389.76px;top:187.40px;width:0.90px;height:69.00px;background:#2e3036;"></div>
<div style="left:389.76px;top:328.00px;width:1.20px;height:151.00px;background:#212328;"></div>
<div style="left:407.68px;top:115.00px;width:0.90px;height:71.00px;background:#1f2126;"></div>
<div style="left:407.68px;top:187.40px;width:0.90px;height:69.00px;background:#2e3036;"></div>
<div style="left:407.68px;top:328.00px;width:1.20px;height:151.00px;background:#212328;"></div>
<div style="left:425.60px;top:115.00px;width:0.90px;height:71.00px;background:#1f2126;"></div>
<div style="left:425.60px;top:187.40px;width:0.90px;height:69.00px;background:#2e3036;"></div>
<div style="left:425.60px;top:328.00px;width:1.20px;height:151.00px;background:#212328;"></div>
<div style="left:443.52px;top:115.00px;width:0.90px;height:71.00px;background:#1f2126;"></div>
<div style="left:443.52px;top:187.40px;width:0.90px;height:69.00px;background:#2e3036;"></div>
<div style="left:443.52px;top:328.00px;width:1.20px;height:151.00px;background:#212328;"></div>
<div style="left:461.44px;top:115.00px;width:0.90px;height:71.00px;background:#1f2126;"></div>
<div style="left:461.44px;top:187.40px;width:0.90px;height:69.00px;background:#2e3036;"></div>
<div style="left:461.44px;top:328.00px;width:1.20px;height:151.00px;background:#212328;"></div>
<div style="left:479.36px;top:115.00px;width:0.90px;height:71.00px;background:#1f2126;"></div>
<div style="left:479.36px;top:187.40px;width:0.90px;height:69.00px;background:#2e3036;"></div>
<div style="left:479.36px;top:328.00px;width:1.20px;height:151.00px;background:#212328;"></div>
<div style="left:497.28px;top:115.00px;width:0.90px;height:71.00px;background:#1f2126;"></div>
<div style="left:497.28px;top:187.40px;width:0.90px;height:69.00px;background:#2e3036;"></div>
<div style="left:497.28px;top:328.00px;width:1.20px;height:151.00px;background:#212328;"></div>
<div style="left:515.20px;top:115.00px;width:0.90px;height:71.00px;background:#1f2126;"></div>
<div style="left:515.20px;top:187.40px;width:0.90px;height:69.00px;background:#2e3036;"></div>
<div style="left:515.20px;top:328.00px;width:1.20px;height:151.00px;background:#212328;"></div>
<div style="left:533.12px;top:115.00px;width:0.90px;height:71.00px;background:#1f2126;"></div>
<div style="left:533.12px;top:187.40px;width:0.90px;height:69.00px;background:#2e3036;"></div>
<div style="left:533.12px;top:328.00px;width:1.20px;height:151.00px;background:#212328;"></div>
<div style="left:551.04px;top:115.00px;width:0.90px;height:71.00px;background:#1f2126;"></div>
<div style="left:551.04px;top:187.40px;width:0.90px;height:69.00px;background:#2e3036;"></div>
<div style="left:551.04px;top:328.00px;width:1.20px;height:151.00px;background:#212328;"></div>
<div style="left:568.96px;top:115.00px;width:0.90px;height:71.00px;background:#1f2126;"></div>
<div style="left:568.96px;top:187.40px;width:0.90px;height:69.00px;background:#2e3036;"></div>
<div style="left:568.96px;top:328.00px;width:1.20px;height:151.00px;background:#212328;"></div>
<div style="left:586.88px;top:115.00px;width:0.90px;height:71.00px;background:#1f2126;"></div>
<div style="left:586.88px;top:187.40px;width:0.90px;height:69.00px;background:#2e3036;"></div>
<div style="left:586.88px;top:328.00px;width:1.20px;height:151.00px;background:#212328;"></div>
<div style="left:604.80px;top:115.00px;width:0.90px;height:71.00px;background:#1f2126;"></div>
<div style="left:604.80px;top:187.40px;width:0.90px;height:69.00px;background:#2e3036;"></div>
<div style="left:604.80px;top:328.00px;width:1.20px;height:151.00px;background:#212328;"></div>
<div style="left:622.72px;top:115.00px;width:0.90px;height:71.00px;background:#1f2126;"></div>
<div style="left:622.72px;top:187.40px;width:0.90px;height:69.00px;background:#2e3036;"></div>
<div style="left:622.72px;top:328.00px;width:1.20px;height:151.00px;background:#212328;"></div>
<div style="left:640.64px;top:115.00px;width:0.90px;height:71.00px;background:#1f2126;"></div>
<div style="left:640.64px;top:187.40px;width:0.90px;height:69.00px;background:#2e3036;"></div>
<div style="left:640.64px;top:328.00px;width:1.20px;height:151.00px;background:#212328;"></div>
<div style="left:658.56px;top:115.00px;width:0.90px;height:71.00px;background:#1f2126;"></div>
<div style="left:658.56px;top:187.40px;width:0.90px;height:69.00px;background:#2e3036;"></div>
<div style="left:658.56px;top:328.00px;width:1.20px;height:151.00px;background:#212328;"></div>
<div style="left:676.48px;top:115.00px;width:0.90px;height:71.00px;background:#1f2126;"></div>
<div style="left:676.48px;top:187.40px;width:0.90px;height:69.00px;background:#2e3036;"></div>
<div style="left:676.48px;top:328.00px;width:1.20px;height:151.00px;background:#212328;"></div>
<div style="left:694.40px;top:115.00px;width:0.90px;height:71.00px;background:#1f2126;"></div>
<div style="left:694.40px;top:187.40px;width:0.90px;height:69.00px;background:#2e3036;"></div>
<div style="left:694.40px;top:328.00px;width:1.20px;height:151.00px;background:#212328;"></div>
<div style="left:712.32px;top:115.00px;width:0.90px;height:71.00px;background:#1f2126;"></div>
<div style="left:712.32px;top:187.40px;width:0.90px;height:69.00px;background:#2e3036;"></div>
<div style="left:712.32px;top:328.00px;width:1.20px;height:151.00px;background:#212328;"></div>
<div style="left:730.24px;top:115.00px;width:0.90px;height:71.00px;background:#1f2126;"></div>
<div style="left:730.24px;top:187.40px;width:0.90px;height:69.00px;background:#2e3036;"></div>
<div style="left:730.24px;top:328.00px;width:1.20px;height:151.00px;background:#212328;"></div>
<div style="left:748.16px;top:115.00px;width:0.90px;height:71.00px;background:#1f2126;"></div>
<div style="left:748.16px;top:187.40px;width:0.90px;height:69.00px;background:#2e3036;"></div>
<div style="left:748.16px;top:328.00px;width:1.20px;height:151.00px;background:#212328;"></div>
<div style="left:766.08px;top:115.00px;width:0.90px;height:71.00px;background:#1f2126;"></div>
<div style="left:766.08px;top:187.40px;width:0.90px;height:69.00px;background:#2e3036;"></div>
<div style="left:766.08px;top:328.00px;width:1.20px;height:151.00px;background:#212328;"></div>
<div style="left:784.00px;top:115.00px;width:0.90px;height:71.00px;background:#1f2126;"></div>
<div style="left:784.00px;top:187.40px;width:0.90px;height:69.00px;background:#2e3036;"></div>
<div style="left:784.00px;top:328.00px;width:1.20px;height:151.00px;background:#212328;"></div>
<div style="left:801.92px;top:115.00px;width:0.90px;height:71.00px;background:#1f2126;"></div>
<div style="left:801.92px;top:187.40px;width:0.90px;height:69.00px;background:#2e3036;"></div>
<div style="left:801.92px;top:328.00px;width:1.20px;height:151.00px;background:#212328;"></div>
<div style="left:819.84px;top:115.00px;width:0.90px;height:71.00px;background:#1f2126;"></div>
<div style="left:819.84px;top:187.40px;width:0.90px;height:69.00px;background:#2e3036;"></div>
<div style="left:819.84px;top:328.00px;width:1.20px;height:151.00px;background:#212328;"></div>
<div style="left:837.76px;top:115.00px;width:0.90px;height:71.00px;background:#1f2126;"></div>
<div style="left:837.76px;top:187.40px;width:0.90px;height:69.00px;background:#2e3036;"></div>
<div style="left:837.76px;top:328.00px;width:1.20px;height:151.00px;background:#212328;"></div>
<div style="left:855.68px;top:115.00px;width:0.90px;height:71.00px;background:#1f2126;"></div>
<div style="left:855.68px;top:187.40px;width:0.90px;height:69.00px;background:#2e3036;"></div>
<div style="left:855.68px;top:328.00px;width:1.20px;height:151.00px;background:#212328;"></div>
<div style="left:873.60px;top:115.00px;width:0.90px;height:71.00px;background:#1f2126;"></div>
<div style="left:873.60px;top:187.40px;width:0.90px;height:69.00px;background:#2e3036;"></div>
<div style="left:873.60px;top:328.00px;width:1.20px;height:151.00px;background:#212328;"></div>
<div style="left:891.52px;top:115.00px;width:0.90px;height:71.00px;background:#1f2126;"></div>
<div style="left:891.52px;top:187.40px;width:0.90px;height:69.00px;background:#2e3036;"></div>
<div style="left:891.52px;top:328.00px;width:1.20px;height:151.00px;background:#212328;"></div>
<div style="left:909.44px;top:115.00px;width:0.90px;height:71.00px;background:#1f2126;"></div>
<div style="left:909.44px;top:187.40px;width:0.90px;height:69.00px;background:#2e3036;"></div>
<div style="left:909.44px;top:328.00px;width:1.20px;height:151.00px;background:#212328;"></div>
<div style="left:927.36px;top:115.00px;width:0.90px;height:71.00px;background:#1f2126;"></div>
<div style="left:927.36px;top:187.40px;width:0.90px;height:69.00px;background:#2e3036;"></div>
<div style="left:927.36px;top:328.00px;width:1.20px;height:151.00px;background:#212328;"></div>
<div style="left:945.28px;top:115.00px;width:0.90px;height:71.00px;background:#1f2126;"></div>
<div style="left:945.28px;top:187.40px;width:0.90px;height:69.00px;background:#2e3036;"></div>
<div style="left:945.28px;top:328.00px;width:1.20px;height:151.00px;background:#212328;"></div>
<div style="left:963.20px;top:115.00px;width:0.90px;height:71.00px;background:#1f2126;"></div>
<div style="left:963.20px;top:187.40px;width:0.90px;height:69.00px;background:#2e3036;"></div>
<div style="left:963.20px;top:328.00px;width:1.20px;height:151.00px;background:#212328;"></div>
<div style="left:981.12px;top:115.00px;width:0.90px;height:71.00px;background:#1f2126;"></div>
<div style="left:981.12px;top:187.40px;width:0.90px;height:69.00px;background:#2e3036;"></div>
<div style="left:981.12px;top:328.00px;width:1.20px;height:151.00px;background:#212328;"></div>
<div style="left:999.04px;top:115.00px;width:0.90px;height:71.00px;background:#1f2126;"></div>
<div style="left:999.04px;top:187.40px;width:0.90px;height:69.00px;background:#2e3036;"></div>
<div style="left:999.04px;top:328.00px;width:1.20px;height:151.00px;background:#212328;"></div>
<div style="left:1016.96px;top:115.00px;width:0.90px;height:71.00px;background:#1f2126;"></div>
<div style="left:1016.96px;top:187.40px;width:0.90px;height:69.00px;background:#2e3036;"></div>
<div style="left:1016.96px;top:328.00px;width:1.20px;height:151.00px;background:#212328;"></div>
<div style="left:1034.88px;top:115.00px;width:0.90px;height:71.00px;background:#1f2126;"></div>
<div style="left:1034.88px;top:187.40px;width:0.90px;height:69.00px;background:#2e3036;"></div>
<div style="left:1034.88px;top:328.00px;width:1.20px;height:151.00px;background:#212328;"></div>
<div style="left:1052.80px;top:115.00px;width:0.90px;height:71.00px;background:#1f2126;"></div>
<div style="left:1052.80px;top:187.40px;width:0.90px;height:69.00px;background:#2e3036;"></div>
<div style="left:1052.80px;top:328.00px;width:1.20px;height:151.00px;background:#212328;"></div>
<div style="left:1070.72px;top:115.00px;width:0.90px;height:71.00px;background:#1f2126;"></div>
<div style="left:1070.72px;top:187.40px;width:0.90px;height:69.00px;background:#2e3036;"></div>
<div style="left:1070.72px;top:328.00px;width:1.20px;height:151.00px;background:#212328;"></div>
<div style="left:1088.64px;top:115.00px;width:0.90px;height:71.00px;background:#1f2126;"></div>
<div style="left:1088.64px;top:187.40px;width:0.90px;height:69.00px;background:#2e3036;"></div>
<div style="left:1088.64px;top:328.00px;width:1.20px;height:151.00px;background:#212328;"></div>
<div style="left:1106.56px;top:115.00px;width:0.90px;height:71.00px;background:#1f2126;"></div>
<div style="left:1106.56px;top:187.40px;width:0.90px;height:69.00px;background:#2e3036;"></div>
<div style="left:1106.56px;top:328.00px;width:1.20px;height:151.00px;background:#212328;"></div>
<div style="left:1124.48px;top:115.00px;width:0.90px;height:71.00px;background:#1f2126;"></div>
<div style="left:1124.48px;top:187.40px;width:0.90px;height:69.00px;background:#2e3036;"></div>
<div style="left:1124.48px;top:328.00px;width:1.20px;height:151.00px;background:#212328;"></div>
<div style="left:1142.40px;top:115.00px;width:0.90px;height:71.00px;background:#1f2126;"></div>
<div style="left:1142.40px;top:187.40px;width:0.90px;height:69.00px;background:#2e3036;"></div>
<div style="left:1142.40px;top:328.00px;width:1.20px;height:151.00px;background:#212328;"></div>
<div style="left:622.70px;top:115.80px;width:533.00px;height:70.00px;background:#27fea6;"></div>
<div style="left:622.70px;top:129.00px;width:533.00px;height:0.90px;background:#179a62;"></div>
<div style="left:640.64px;top:129.50px;width:0.90px;height:56.30px;background:#159a60;"></div>
<div style="left:658.56px;top:129.50px;width:0.90px;height:56.30px;background:#159a60;"></div>
<div style="left:676.48px;top:129.50px;width:0.90px;height:56.30px;background:#159a60;"></div>
<div style="left:694.40px;top:129.50px;width:0.90px;height:56.30px;background:#159a60;"></div>
<div style="left:712.32px;top:129.50px;width:0.90px;height:56.30px;background:#159a60;"></div>
<div style="left:730.24px;top:129.50px;width:0.90px;height:56.30px;background:#159a60;"></div>
<div style="left:748.16px;top:129.50px;width:0.90px;height:56.30px;background:#159a60;"></div>
<div style="left:766.08px;top:129.50px;width:0.90px;height:56.30px;background:#159a60;"></div>
<div style="left:784.00px;top:129.50px;width:0.90px;height:56.30px;background:#159a60;"></div>
<div style="left:801.92px;top:129.50px;width:0.90px;height:56.30px;background:#159a60;"></div>
<div style="left:819.84px;top:129.50px;width:0.90px;height:56.30px;background:#159a60;"></div>
<div style="left:837.76px;top:129.50px;width:0.90px;height:56.30px;background:#159a60;"></div>
<div style="left:855.68px;top:129.50px;width:0.90px;height:56.30px;background:#159a60;"></div>
<div style="left:873.60px;top:129.50px;width:0.90px;height:56.30px;background:#159a60;"></div>
<div style="left:891.52px;top:129.50px;width:0.90px;height:56.30px;background:#159a60;"></div>
<div style="left:909.44px;top:129.50px;width:0.90px;height:56.30px;background:#159a60;"></div>
<div style="left:927.36px;top:129.50px;width:0.90px;height:56.30px;background:#159a60;"></div>
<div style="left:945.28px;top:129.50px;width:0.90px;height:56.30px;background:#159a60;"></div>
<div style="left:963.20px;top:129.50px;width:0.90px;height:56.30px;background:#159a60;"></div>
<div style="left:981.12px;top:129.50px;width:0.90px;height:56.30px;background:#159a60;"></div>
<div style="left:999.04px;top:129.50px;width:0.90px;height:56.30px;background:#159a60;"></div>
<div style="left:1016.96px;top:129.50px;width:0.90px;height:56.30px;background:#159a60;"></div>
<div style="left:1034.88px;top:129.50px;width:0.90px;height:56.30px;background:#159a60;"></div>
<div style="left:1052.80px;top:129.50px;width:0.90px;height:56.30px;background:#159a60;"></div>
<div style="left:1070.72px;top:129.50px;width:0.90px;height:56.30px;background:#159a60;"></div>
<div style="left:1088.64px;top:129.50px;width:0.90px;height:56.30px;background:#159a60;"></div>
<div style="left:1106.56px;top:129.50px;width:0.90px;height:56.30px;background:#159a60;"></div>
<div style="left:1124.48px;top:129.50px;width:0.90px;height:56.30px;background:#159a60;"></div>
<div style="left:1142.40px;top:129.50px;width:0.90px;height:56.30px;background:#159a60;"></div>
<div style="left:650.00px;top:115.80px;width:0.90px;height:2.20px;background:#128a55;"></div>
<div style="left:650.00px;top:183.40px;width:0.90px;height:2.40px;background:#128a55;"></div>
<div style="left:676.88px;top:115.80px;width:0.90px;height:2.20px;background:#128a55;"></div>
<div style="left:676.88px;top:183.40px;width:0.90px;height:2.40px;background:#128a55;"></div>
<div style="left:703.76px;top:115.80px;width:0.90px;height:2.20px;background:#128a55;"></div>
<div style="left:703.76px;top:183.40px;width:0.90px;height:2.40px;background:#128a55;"></div>
<div style="left:730.64px;top:115.80px;width:0.90px;height:2.20px;background:#128a55;"></div>
<div style="left:730.64px;top:183.40px;width:0.90px;height:2.40px;background:#128a55;"></div>
<div style="left:757.52px;top:115.80px;width:0.90px;height:2.20px;background:#128a55;"></div>
<div style="left:757.52px;top:183.40px;width:0.90px;height:2.40px;background:#128a55;"></div>
<div style="left:784.40px;top:115.80px;width:0.90px;height:2.20px;background:#128a55;"></div>
<div style="left:784.40px;top:183.40px;width:0.90px;height:2.40px;background:#128a55;"></div>
<div style="left:811.28px;top:115.80px;width:0.90px;height:2.20px;background:#128a55;"></div>
<div style="left:811.28px;top:183.40px;width:0.90px;height:2.40px;background:#128a55;"></div>
<div style="left:838.16px;top:115.80px;width:0.90px;height:2.20px;background:#128a55;"></div>
<div style="left:838.16px;top:183.40px;width:0.90px;height:2.40px;background:#128a55;"></div>
<div style="left:865.04px;top:115.80px;width:0.90px;height:2.20px;background:#128a55;"></div>
<div style="left:865.04px;top:183.40px;width:0.90px;height:2.40px;background:#128a55;"></div>
<div style="left:891.92px;top:115.80px;width:0.90px;height:2.20px;background:#128a55;"></div>
<div style="left:891.92px;top:183.40px;width:0.90px;height:2.40px;background:#128a55;"></div>
<div style="left:918.80px;top:115.80px;width:0.90px;height:2.20px;background:#128a55;"></div>
<div style="left:918.80px;top:183.40px;width:0.90px;height:2.40px;background:#128a55;"></div>
<div style="left:945.68px;top:115.80px;width:0.90px;height:2.20px;background:#128a55;"></div>
<div style="left:945.68px;top:183.40px;width:0.90px;height:2.40px;background:#128a55;"></div>
<div style="left:972.56px;top:115.80px;width:0.90px;height:2.20px;background:#128a55;"></div>
<div style="left:972.56px;top:183.40px;width:0.90px;height:2.40px;background:#128a55;"></div>
<div style="left:999.44px;top:115.80px;width:0.90px;height:2.20px;background:#128a55;"></div>
<div style="left:999.44px;top:183.40px;width:0.90px;height:2.40px;background:#128a55;"></div>
<div style="left:1026.32px;top:115.80px;width:0.90px;height:2.20px;background:#128a55;"></div>
<div style="left:1026.32px;top:183.40px;width:0.90px;height:2.40px;background:#128a55;"></div>
<div style="left:1053.20px;top:115.80px;width:0.90px;height:2.20px;background:#128a55;"></div>
<div style="left:1053.20px;top:183.40px;width:0.90px;height:2.40px;background:#128a55;"></div>
<div style="left:1080.08px;top:115.80px;width:0.90px;height:2.20px;background:#128a55;"></div>
<div style="left:1080.08px;top:183.40px;width:0.90px;height:2.40px;background:#128a55;"></div>
<div style="left:1106.96px;top:115.80px;width:0.90px;height:2.20px;background:#128a55;"></div>
<div style="left:1106.96px;top:183.40px;width:0.90px;height:2.40px;background:#128a55;"></div>
<div style="left:1133.84px;top:115.80px;width:0.90px;height:2.20px;background:#128a55;"></div>
<div style="left:1133.84px;top:183.40px;width:0.90px;height:2.40px;background:#128a55;"></div>
<svg style="left:622.70px;top:115.80px;" width="534" height="71" viewBox="0 0 534 71"><g fill="#0f6b43"><rect x="6.60" y="23.30" width="2.5" height="1.4"/><rect x="8.60" y="34.50" width="2" height="1.4"/><rect x="18.10" y="37.00" width="2" height="1.4"/><rect x="3.30" y="40.80" width="1.5" height="1.4"/><rect x="12.60" y="40.80" width="1.5" height="1.4"/><rect x="1.40" y="45.80" width="2" height="1.4"/><rect x="15.10" y="45.80" width="2" height="1.4"/><rect x="-0.40" y="50.70" width="2" height="1.4"/><rect x="20.30" y="50.70" width="3" height="1.4"/><rect x="-0.40" y="57.80" width="1.5" height="1.4"/><rect x="6.10" y="57.80" width="2" height="1.4"/><rect x="23.60" y="57.80" width="2" height="1.4"/><rect x="33.48" y="23.30" width="2.5" height="1.4"/><rect x="35.48" y="34.50" width="2" height="1.4"/><rect x="44.98" y="37.00" width="2" height="1.4"/><rect x="30.18" y="40.80" width="1.5" height="1.4"/><rect x="39.48" y="40.80" width="1.5" height="1.4"/><rect x="28.28" y="45.80" width="2" height="1.4"/><rect x="41.98" y="45.80" width="2" height="1.4"/><rect x="26.48" y="50.70" width="2" height="1.4"/><rect x="47.18" y="50.70" width="3" height="1.4"/><rect x="26.48" y="57.80" width="1.5" height="1.4"/><rect x="32.98" y="57.80" width="2" height="1.4"/><rect x="50.48" y="57.80" width="2" height="1.4"/><rect x="60.36" y="23.30" width="2.5" height="1.4"/><rect x="62.36" y="34.50" width="2" height="1.4"/><rect x="71.86" y="37.00" width="2" height="1.4"/><rect x="57.06" y="40.80" width="1.5" height="1.4"/><rect x="66.36" y="40.80" width="1.5" height="1.4"/><rect x="55.16" y="45.80" width="2" height="1.4"/><rect x="68.86" y="45.80" width="2" height="1.4"/><rect x="53.36" y="50.70" width="2" height="1.4"/><rect x="74.06" y="50.70" width="3" height="1.4"/><rect x="53.36" y="57.80" width="1.5" height="1.4"/><rect x="59.86" y="57.80" width="2" height="1.4"/><rect x="77.36" y="57.80" width="2" height="1.4"/><rect x="87.24" y="23.30" width="2.5" height="1.4"/><rect x="89.24" y="34.50" width="2" height="1.4"/><rect x="98.74" y="37.00" width="2" height="1.4"/><rect x="83.94" y="40.80" width="1.5" height="1.4"/><rect x="93.24" y="40.80" width="1.5" height="1.4"/><rect x="82.04" y="45.80" width="2" height="1.4"/><rect x="95.74" y="45.80" width="2" height="1.4"/><rect x="80.24" y="50.70" width="2" height="1.4"/><rect x="100.94" y="50.70" width="3" height="1.4"/><rect x="80.24" y="57.80" width="1.5" height="1.4"/><rect x="86.74" y="57.80" width="2" height="1.4"/><rect x="104.24" y="57.80" width="2" height="1.4"/><rect x="114.12" y="23.30" width="2.5" height="1.4"/><rect x="116.12" y="34.50" width="2" height="1.4"/><rect x="125.62" y="37.00" width="2" height="1.4"/><rect x="110.82" y="40.80" width="1.5" height="1.4"/><rect x="120.12" y="40.80" width="1.5" height="1.4"/><rect x="108.92" y="45.80" width="2" height="1.4"/><rect x="122.62" y="45.80" width="2" height="1.4"/><rect x="107.12" y="50.70" width="2" height="1.4"/><rect x="127.82" y="50.70" width="3" height="1.4"/><rect x="107.12" y="57.80" width="1.5" height="1.4"/><rect x="113.62" y="57.80" width="2" height="1.4"/><rect x="131.12" y="57.80" width="2" height="1.4"/><rect x="141.00" y="23.30" width="2.5" height="1.4"/><rect x="143.00" y="34.50" width="2" height="1.4"/><rect x="152.50" y="37.00" width="2" height="1.4"/><rect x="137.70" y="40.80" width="1.5" height="1.4"/><rect x="147.00" y="40.80" width="1.5" height="1.4"/><rect x="135.80" y="45.80" width="2" height="1.4"/><rect x="149.50" y="45.80" width="2" height="1.4"/><rect x="134.00" y="50.70" width="2" height="1.4"/><rect x="154.70" y="50.70" width="3" height="1.4"/><rect x="134.00" y="57.80" width="1.5" height="1.4"/><rect x="140.50" y="57.80" width="2" height="1.4"/><rect x="158.00" y="57.80" width="2" height="1.4"/><rect x="167.88" y="23.30" width="2.5" height="1.4"/><rect x="169.88" y="34.50" width="2" height="1.4"/><rect x="179.38" y="37.00" width="2" height="1.4"/><rect x="164.58" y="40.80" width="1.5" height="1.4"/><rect x="173.88" y="40.80" width="1.5" height="1.4"/><rect x="162.68" y="45.80" width="2" height="1.4"/><rect x="176.38" y="45.80" width="2" height="1.4"/><rect x="160.88" y="50.70" width="2" height="1.4"/><rect x="181.58" y="50.70" width="3" height="1.4"/><rect x="160.88" y="57.80" width="1.5" height="1.4"/><rect x="167.38" y="57.80" width="2" height="1.4"/><rect x="184.88" y="57.80" width="2" height="1.4"/><rect x="194.76" y="23.30" width="2.5" height="1.4"/><rect x="196.76" y="34.50" width="2" height="1.4"/><rect x="206.26" y="37.00" width="2" height="1.4"/><rect x="191.46" y="40.80" width="1.5" height="1.4"/><rect x="200.76" y="40.80" width="1.5" height="1.4"/><rect x="189.56" y="45.80" width="2" height="1.4"/><rect x="203.26" y="45.80" width="2" height="1.4"/><rect x="187.76" y="50.70" width="2" height="1.4"/><rect x="208.46" y="50.70" width="3" height="1.4"/><rect x="187.76" y="57.80" width="1.5" height="1.4"/><rect x="194.26" y="57.80" width="2" height="1.4"/><rect x="211.76" y="57.80" width="2" height="1.4"/><rect x="221.64" y="23.30" width="2.5" height="1.4"/><rect x="223.64" y="34.50" width="2" height="1.4"/><rect x="233.14" y="37.00" width="2" height="1.4"/><rect x="218.34" y="40.80" width="1.5" height="1.4"/><rect x="227.64" y="40.80" width="1.5" height="1.4"/><rect x="216.44" y="45.80" width="2" height="1.4"/><rect x="230.14" y="45.80" width="2" height="1.4"/><rect x="214.64" y="50.70" width="2" height="1.4"/><rect x="235.34" y="50.70" width="3" height="1.4"/><rect x="214.64" y="57.80" width="1.5" height="1.4"/><rect x="221.14" y="57.80" width="2" height="1.4"/><rect x="238.64" y="57.80" width="2" height="1.4"/><rect x="248.52" y="23.30" width="2.5" height="1.4"/><rect x="250.52" y="34.50" width="2" height="1.4"/><rect x="260.02" y="37.00" width="2" height="1.4"/><rect x="245.22" y="40.80" width="1.5" height="1.4"/><rect x="254.52" y="40.80" width="1.5" height="1.4"/><rect x="243.32" y="45.80" width="2" height="1.4"/><rect x="257.02" y="45.80" width="2" height="1.4"/><rect x="241.52" y="50.70" width="2" height="1.4"/><rect x="262.22" y="50.70" width="3" height="1.4"/><rect x="241.52" y="57.80" width="1.5" height="1.4"/><rect x="248.02" y="57.80" width="2" height="1.4"/><rect x="265.52" y="57.80" width="2" height="1.4"/><rect x="275.40" y="23.30" width="2.5" height="1.4"/><rect x="277.40" y="34.50" width="2" height="1.4"/><rect x="286.90" y="37.00" width="2" height="1.4"/><rect x="272.10" y="40.80" width="1.5" height="1.4"/><rect x="281.40" y="40.80" width="1.5" height="1.4"/><rect x="270.20" y="45.80" width="2" height="1.4"/><rect x="283.90" y="45.80" width="2" height="1.4"/><rect x="268.40" y="50.70" width="2" height="1.4"/><rect x="289.10" y="50.70" width="3" height="1.4"/><rect x="268.40" y="57.80" width="1.5" height="1.4"/><rect x="274.90" y="57.80" width="2" height="1.4"/><rect x="292.40" y="57.80" width="2" height="1.4"/><rect x="302.28" y="23.30" width="2.5" height="1.4"/><rect x="304.28" y="34.50" width="2" height="1.4"/><rect x="313.78" y="37.00" width="2" height="1.4"/><rect x="298.98" y="40.80" width="1.5" height="1.4"/><rect x="308.28" y="40.80" width="1.5" height="1.4"/><rect x="297.08" y="45.80" width="2" height="1.4"/><rect x="310.78" y="45.80" width="2" height="1.4"/><rect x="295.28" y="50.70" width="2" height="1.4"/><rect x="315.98" y="50.70" width="3" height="1.4"/><rect x="295.28" y="57.80" width="1.5" height="1.4"/><rect x="301.78" y="57.80" width="2" height="1.4"/><rect x="319.28" y="57.80" width="2" height="1.4"/><rect x="329.16" y="23.30" width="2.5" height="1.4"/><rect x="331.16" y="34.50" width="2" height="1.4"/><rect x="340.66" y="37.00" width="2" height="1.4"/><rect x="325.86" y="40.80" width="1.5" height="1.4"/><rect x="335.16" y="40.80" width="1.5" height="1.4"/><rect x="323.96" y="45.80" width="2" height="1.4"/><rect x="337.66" y="45.80" width="2" height="1.4"/><rect x="322.16" y="50.70" width="2" height="1.4"/><rect x="342.86" y="50.70" width="3" height="1.4"/><rect x="322.16" y="57.80" width="1.5" height="1.4"/><rect x="328.66" y="57.80" width="2" height="1.4"/><rect x="346.16" y="57.80" width="2" height="1.4"/><rect x="356.04" y="23.30" width="2.5" height="1.4"/><rect x="358.04" y="34.50" width="2" height="1.4"/><rect x="367.54" y="37.00" width="2" height="1.4"/><rect x="352.74" y="40.80" width="1.5" height="1.4"/><rect x="362.04" y="40.80" width="1.5" height="1.4"/><rect x="350.84" y="45.80" width="2" height="1.4"/><rect x="364.54" y="45.80" width="2" height="1.4"/><rect x="349.04" y="50.70" width="2" height="1.4"/><rect x="369.74" y="50.70" width="3" height="1.4"/><rect x="349.04" y="57.80" width="1.5" height="1.4"/><rect x="355.54" y="57.80" width="2" height="1.4"/><rect x="373.04" y="57.80" width="2" height="1.4"/><rect x="382.92" y="23.30" width="2.5" height="1.4"/><rect x="384.92" y="34.50" width="2" height="1.4"/><rect x="394.42" y="37.00" width="2" height="1.4"/><rect x="379.62" y="40.80" width="1.5" height="1.4"/><rect x="388.92" y="40.80" width="1.5" height="1.4"/><rect x="377.72" y="45.80" width="2" height="1.4"/><rect x="391.42" y="45.80" width="2" height="1.4"/><rect x="375.92" y="50.70" width="2" height="1.4"/><rect x="396.62" y="50.70" width="3" height="1.4"/><rect x="375.92" y="57.80" width="1.5" height="1.4"/><rect x="382.42" y="57.80" width="2" height="1.4"/><rect x="399.92" y="57.80" width="2" height="1.4"/><rect x="409.80" y="23.30" width="2.5" height="1.4"/><rect x="411.80" y="34.50" width="2" height="1.4"/><rect x="421.30" y="37.00" width="2" height="1.4"/><rect x="406.50" y="40.80" width="1.5" height="1.4"/><rect x="415.80" y="40.80" width="1.5" height="1.4"/><rect x="404.60" y="45.80" width="2" height="1.4"/><rect x="418.30" y="45.80" width="2" height="1.4"/><rect x="402.80" y="50.70" width="2" height="1.4"/><rect x="423.50" y="50.70" width="3" height="1.4"/><rect x="402.80" y="57.80" width="1.5" height="1.4"/><rect x="409.30" y="57.80" width="2" height="1.4"/><rect x="426.80" y="57.80" width="2" height="1.4"/><rect x="436.68" y="23.30" width="2.5" height="1.4"/><rect x="438.68" y="34.50" width="2" height="1.4"/><rect x="448.18" y="37.00" width="2" height="1.4"/><rect x="433.38" y="40.80" width="1.5" height="1.4"/><rect x="442.68" y="40.80" width="1.5" height="1.4"/><rect x="431.48" y="45.80" width="2" height="1.4"/><rect x="445.18" y="45.80" width="2" height="1.4"/><rect x="429.68" y="50.70" width="2" height="1.4"/><rect x="450.38" y="50.70" width="3" height="1.4"/><rect x="429.68" y="57.80" width="1.5" height="1.4"/><rect x="436.18" y="57.80" width="2" height="1.4"/><rect x="453.68" y="57.80" width="2" height="1.4"/><rect x="463.56" y="23.30" width="2.5" height="1.4"/><rect x="465.56" y="34.50" width="2" height="1.4"/><rect x="475.06" y="37.00" width="2" height="1.4"/><rect x="460.26" y="40.80" width="1.5" height="1.4"/><rect x="469.56" y="40.80" width="1.5" height="1.4"/><rect x="458.36" y="45.80" width="2" height="1.4"/><rect x="472.06" y="45.80" width="2" height="1.4"/><rect x="456.56" y="50.70" width="2" height="1.4"/><rect x="477.26" y="50.70" width="3" height="1.4"/><rect x="456.56" y="57.80" width="1.5" height="1.4"/><rect x="463.06" y="57.80" width="2" height="1.4"/><rect x="480.56" y="57.80" width="2" height="1.4"/><rect x="490.44" y="23.30" width="2.5" height="1.4"/><rect x="492.44" y="34.50" width="2" height="1.4"/><rect x="501.94" y="37.00" width="2" height="1.4"/><rect x="487.14" y="40.80" width="1.5" height="1.4"/><rect x="496.44" y="40.80" width="1.5" height="1.4"/><rect x="485.24" y="45.80" width="2" height="1.4"/><rect x="498.94" y="45.80" width="2" height="1.4"/><rect x="483.44" y="50.70" width="2" height="1.4"/><rect x="504.14" y="50.70" width="3" height="1.4"/><rect x="483.44" y="57.80" width="1.5" height="1.4"/><rect x="489.94" y="57.80" width="2" height="1.4"/><rect x="507.44" y="57.80" width="2" height="1.4"/><rect x="517.32" y="23.30" width="2.5" height="1.4"/><rect x="519.32" y="34.50" width="2" height="1.4"/><rect x="528.82" y="37.00" width="2" height="1.4"/><rect x="514.02" y="40.80" width="1.5" height="1.4"/><rect x="523.32" y="40.80" width="1.5" height="1.4"/><rect x="512.12" y="45.80" width="2" height="1.4"/><rect x="525.82" y="45.80" width="2" height="1.4"/><rect x="510.32" y="50.70" width="2" height="1.4"/><rect x="510.32" y="57.80" width="1.5" height="1.4"/><rect x="516.82" y="57.80" width="2" height="1.4"/></g></svg>
<div style="left:783.90px;top:187.30px;width:371.80px;height:69.50px;background:#5a7ee3;"></div>
<div style="left:783.90px;top:199.80px;width:371.80px;height:0.90px;background:#3a58b0;"></div>
<div style="left:801.92px;top:200.30px;width:0.90px;height:56.50px;background:#3d5cb8;"></div>
<div style="left:819.84px;top:200.30px;width:0.90px;height:56.50px;background:#3d5cb8;"></div>
<div style="left:837.76px;top:200.30px;width:0.90px;height:56.50px;background:#3d5cb8;"></div>
<div style="left:855.68px;top:200.30px;width:0.90px;height:56.50px;background:#3d5cb8;"></div>
<div style="left:873.60px;top:200.30px;width:0.90px;height:56.50px;background:#3d5cb8;"></div>
<div style="left:891.52px;top:200.30px;width:0.90px;height:56.50px;background:#3d5cb8;"></div>
<div style="left:909.44px;top:200.30px;width:0.90px;height:56.50px;background:#3d5cb8;"></div>
<div style="left:927.36px;top:200.30px;width:0.90px;height:56.50px;background:#3d5cb8;"></div>
<div style="left:945.28px;top:200.30px;width:0.90px;height:56.50px;background:#3d5cb8;"></div>
<div style="left:963.20px;top:200.30px;width:0.90px;height:56.50px;background:#3d5cb8;"></div>
<div style="left:981.12px;top:200.30px;width:0.90px;height:56.50px;background:#3d5cb8;"></div>
<div style="left:999.04px;top:200.30px;width:0.90px;height:56.50px;background:#3d5cb8;"></div>
<div style="left:1016.96px;top:200.30px;width:0.90px;height:56.50px;background:#3d5cb8;"></div>
<div style="left:1034.88px;top:200.30px;width:0.90px;height:56.50px;background:#3d5cb8;"></div>
<div style="left:1052.80px;top:200.30px;width:0.90px;height:56.50px;background:#3d5cb8;"></div>
<div style="left:1070.72px;top:200.30px;width:0.90px;height:56.50px;background:#3d5cb8;"></div>
<div style="left:1088.64px;top:200.30px;width:0.90px;height:56.50px;background:#3d5cb8;"></div>
<div style="left:1106.56px;top:200.30px;width:0.90px;height:56.50px;background:#3d5cb8;"></div>
<div style="left:1124.48px;top:200.30px;width:0.90px;height:56.50px;background:#3d5cb8;"></div>
<div style="left:1142.40px;top:200.30px;width:0.90px;height:56.50px;background:#3d5cb8;"></div>
<svg style="left:783.90px;top:187.30px;" width="372" height="70" viewBox="0 0 372 70"><g fill="#162a6a"><rect x="0.00" y="18.30" width="8.00" height="1.6"/><rect x="9.00" y="20.00" width="4.00" height="1.6"/><rect x="0.00" y="23.00" width="8.00" height="1.6"/><rect x="9.00" y="26.20" width="4.00" height="1.6"/><rect x="35.84" y="18.30" width="8.00" height="1.6"/><rect x="44.34" y="20.00" width="10.00" height="1.6"/><rect x="35.84" y="23.00" width="8.00" height="1.6"/><rect x="44.34" y="26.20" width="10.00" height="1.6"/><rect x="71.68" y="18.30" width="8.00" height="1.6"/><rect x="80.68" y="20.00" width="4.00" height="1.6"/><rect x="71.68" y="23.00" width="8.00" height="1.6"/><rect x="80.68" y="26.20" width="4.00" height="1.6"/><rect x="107.52" y="18.30" width="8.00" height="1.6"/><rect x="116.02" y="20.00" width="10.00" height="1.6"/><rect x="107.52" y="23.00" width="8.00" height="1.6"/><rect x="116.02" y="26.20" width="10.00" height="1.6"/><rect x="214.40" y="18.30" width="8.00" height="1.6"/><rect x="223.40" y="20.00" width="4.00" height="1.6"/><rect x="214.40" y="23.00" width="8.00" height="1.6"/><rect x="223.40" y="26.20" width="4.00" height="1.6"/><rect x="250.24" y="18.30" width="8.00" height="1.6"/><rect x="258.74" y="20.00" width="10.00" height="1.6"/><rect x="250.24" y="23.00" width="8.00" height="1.6"/><rect x="258.74" y="26.20" width="10.00" height="1.6"/><rect x="286.08" y="18.30" width="8.00" height="1.6"/><rect x="295.08" y="20.00" width="4.00" height="1.6"/><rect x="286.08" y="23.00" width="8.00" height="1.6"/><rect x="295.08" y="26.20" width="4.00" height="1.6"/><rect x="321.92" y="18.30" width="8.00" height="1.6"/><rect x="330.42" y="20.00" width="10.00" height="1.6"/><rect x="321.92" y="23.00" width="8.00" height="1.6"/><rect x="330.42" y="26.20" width="10.00" height="1.6"/><rect x="0.00" y="42.50" width="66.80" height="1.8"/><rect x="72.10" y="42.50" width="33.00" height="1.8"/><rect x="107.10" y="42.50" width="18.40" height="1.8"/><rect x="0.00" y="61.80" width="71.10" height="1.8"/><rect x="72.10" y="61.80" width="53.40" height="1.8"/><rect x="214.40" y="42.50" width="66.70" height="1.8"/><rect x="286.40" y="42.50" width="54.00" height="1.8"/><rect x="214.40" y="61.80" width="70.70" height="1.8"/><rect x="286.40" y="61.80" width="54.00" height="1.8"/><rect x="125.50" y="26.50" width="8.60" height="1.6"/><rect x="139.10" y="26.50" width="13.00" height="1.6"/><rect x="160.40" y="26.50" width="9.30" height="1.6"/><rect x="174.70" y="26.50" width="12.80" height="1.6"/><rect x="340.40" y="26.50" width="8.70" height="1.6"/><rect x="353.10" y="26.50" width="14.00" height="1.6"/><rect x="157.10" y="25.50" width="2.00" height="1.6"/><rect x="193.10" y="25.50" width="3.00" height="1.6"/><rect x="125.50" y="34.50" width="8.60" height="1.6"/><rect x="139.10" y="34.50" width="13.00" height="1.6"/><rect x="160.40" y="34.50" width="9.30" height="1.6"/><rect x="174.70" y="34.50" width="12.80" height="1.6"/><rect x="340.40" y="34.50" width="8.70" height="1.6"/><rect x="353.10" y="34.50" width="14.00" height="1.6"/><rect x="157.10" y="33.50" width="2.00" height="1.6"/><rect x="193.10" y="33.50" width="3.00" height="1.6"/><rect x="125.50" y="40.90" width="8.60" height="1.6"/><rect x="139.10" y="40.90" width="13.00" height="1.6"/><rect x="160.40" y="40.90" width="9.30" height="1.6"/><rect x="174.70" y="40.90" width="12.80" height="1.6"/><rect x="340.40" y="40.90" width="8.70" height="1.6"/><rect x="353.10" y="40.90" width="14.00" height="1.6"/><rect x="157.10" y="39.90" width="2.00" height="1.6"/><rect x="193.10" y="39.90" width="3.00" height="1.6"/></g></svg>
<div style="left:962.30px;top:187.30px;width:1.00px;height:69.50px;background:#a8c4f4;"></div>
<div style="left:336.40px;top:258.60px;width:819.30px;height:69.40px;background:#d96ee4;"></div>
<div style="left:336.40px;top:270.70px;width:819.30px;height:0.90px;background:#a848b4;"></div>
<div style="left:353.92px;top:271.20px;width:0.90px;height:56.60px;background:#b04cbb;"></div>
<div style="left:371.84px;top:271.20px;width:0.90px;height:56.60px;background:#b04cbb;"></div>
<div style="left:389.76px;top:271.20px;width:0.90px;height:56.60px;background:#b04cbb;"></div>
<div style="left:407.68px;top:271.20px;width:0.90px;height:56.60px;background:#b04cbb;"></div>
<div style="left:425.60px;top:271.20px;width:0.90px;height:56.60px;background:#b04cbb;"></div>
<div style="left:443.52px;top:271.20px;width:0.90px;height:56.60px;background:#b04cbb;"></div>
<div style="left:461.44px;top:271.20px;width:0.90px;height:56.60px;background:#b04cbb;"></div>
<div style="left:479.36px;top:271.20px;width:0.90px;height:56.60px;background:#b04cbb;"></div>
<div style="left:497.28px;top:271.20px;width:0.90px;height:56.60px;background:#b04cbb;"></div>
<div style="left:515.20px;top:271.20px;width:0.90px;height:56.60px;background:#b04cbb;"></div>
<div style="left:533.12px;top:271.20px;width:0.90px;height:56.60px;background:#b04cbb;"></div>
<div style="left:551.04px;top:271.20px;width:0.90px;height:56.60px;background:#b04cbb;"></div>
<div style="left:568.96px;top:271.20px;width:0.90px;height:56.60px;background:#b04cbb;"></div>
<div style="left:586.88px;top:271.20px;width:0.90px;height:56.60px;background:#b04cbb;"></div>
<div style="left:604.80px;top:271.20px;width:0.90px;height:56.60px;background:#b04cbb;"></div>
<div style="left:622.72px;top:271.20px;width:0.90px;height:56.60px;background:#b04cbb;"></div>
<div style="left:640.64px;top:271.20px;width:0.90px;height:56.60px;background:#b04cbb;"></div>
<div style="left:658.56px;top:271.20px;width:0.90px;height:56.60px;background:#b04cbb;"></div>
<div style="left:676.48px;top:271.20px;width:0.90px;height:56.60px;background:#b04cbb;"></div>
<div style="left:694.40px;top:271.20px;width:0.90px;height:56.60px;background:#b04cbb;"></div>
<div style="left:712.32px;top:271.20px;width:0.90px;height:56.60px;background:#b04cbb;"></div>
<div style="left:730.24px;top:271.20px;width:0.90px;height:56.60px;background:#b04cbb;"></div>
<div style="left:748.16px;top:271.20px;width:0.90px;height:56.60px;background:#b04cbb;"></div>
<div style="left:766.08px;top:271.20px;width:0.90px;height:56.60px;background:#b04cbb;"></div>
<div style="left:784.00px;top:271.20px;width:0.90px;height:56.60px;background:#b04cbb;"></div>
<div style="left:801.92px;top:271.20px;width:0.90px;height:56.60px;background:#b04cbb;"></div>
<div style="left:819.84px;top:271.20px;width:0.90px;height:56.60px;background:#b04cbb;"></div>
<div style="left:837.76px;top:271.20px;width:0.90px;height:56.60px;background:#b04cbb;"></div>
<div style="left:855.68px;top:271.20px;width:0.90px;height:56.60px;background:#b04cbb;"></div>
<div style="left:873.60px;top:271.20px;width:0.90px;height:56.60px;background:#b04cbb;"></div>
<div style="left:891.52px;top:271.20px;width:0.90px;height:56.60px;background:#b04cbb;"></div>
<div style="left:909.44px;top:271.20px;width:0.90px;height:56.60px;background:#b04cbb;"></div>
<div style="left:927.36px;top:271.20px;width:0.90px;height:56.60px;background:#b04cbb;"></div>
<div style="left:945.28px;top:271.20px;width:0.90px;height:56.60px;background:#b04cbb;"></div>
<div style="left:963.20px;top:271.20px;width:0.90px;height:56.60px;background:#b04cbb;"></div>
<div style="left:981.12px;top:271.20px;width:0.90px;height:56.60px;background:#b04cbb;"></div>
<div style="left:999.04px;top:271.20px;width:0.90px;height:56.60px;background:#b04cbb;"></div>
<div style="left:1016.96px;top:271.20px;width:0.90px;height:56.60px;background:#b04cbb;"></div>
<div style="left:1034.88px;top:271.20px;width:0.90px;height:56.60px;background:#b04cbb;"></div>
<div style="left:1052.80px;top:271.20px;width:0.90px;height:56.60px;background:#b04cbb;"></div>
<div style="left:1070.72px;top:271.20px;width:0.90px;height:56.60px;background:#b04cbb;"></div>
<div style="left:1088.64px;top:271.20px;width:0.90px;height:56.60px;background:#b04cbb;"></div>
<div style="left:1106.56px;top:271.20px;width:0.90px;height:56.60px;background:#b04cbb;"></div>
<div style="left:1124.48px;top:271.20px;width:0.90px;height:56.60px;background:#b04cbb;"></div>
<div style="left:1142.40px;top:271.20px;width:0.90px;height:56.60px;background:#b04cbb;"></div>
<svg style="left:336.40px;top:258.60px;" width="820" height="70" viewBox="0 0 820 70"><path d="M0.0 25.5 L0.5 25.4 L1.0 25.6 L1.5 25.3 L2.0 24.7 L2.5 23.8 L3.0 22.5 L3.5 20.8 L4.0 18.9 L4.5 20.1 L5.0 21.8 L5.5 23.3 L6.0 24.4 L6.5 25.1 L7.0 25.4 L7.5 24.8 L8.0 23.6 L8.5 21.7 L9.0 19.5 L9.5 21.8 L10.0 23.6 L10.5 24.8 L11.0 24.5 L11.5 23.3 L12.0 21.8 L12.5 19.8 L13.0 17.5 L13.5 19.3 L14.0 21.3 L14.5 23.0 L15.0 24.3 L15.5 25.0 L16.0 25.1 L16.5 24.2 L17.0 22.6 L17.5 20.4 L18.0 20.7 L18.5 22.8 L19.0 24.3 L19.5 25.0 L20.0 24.3 L20.5 22.8 L21.0 20.9 L21.5 18.5 L22.0 15.7 L22.5 18.3 L23.0 20.7 L23.5 22.7 L24.0 24.2 L24.5 25.2 L25.0 24.7 L25.5 23.3 L26.0 21.4 L26.5 19.9 L27.0 22.1 L27.5 23.8 L28.0 25.0 L28.5 25.1 L29.0 24.2 L29.5 22.8 L30.0 20.9 L30.5 18.6 L31.0 16.2 L31.5 18.8 L32.0 21.1 L32.5 22.9 L33.0 24.3 L33.5 25.0 L34.0 23.8 L34.5 21.9 L35.0 19.5 L35.5 20.7 L36.0 22.9 L36.5 24.5 L37.0 25.1 L37.5 25.2 L38.0 24.5 L38.5 23.5 L39.0 22.2 L39.5 20.6 L40.0 19.2 L40.5 21.0 L41.0 22.5 L41.5 23.8 L42.0 24.7 L42.5 25.3 L43.0 24.7 L43.5 23.3 L44.0 21.2 L44.5 19.0 L45.0 21.5 L45.5 23.5 L46.0 24.8 L46.5 25.1 L47.0 24.2 L47.5 22.9 L48.0 21.2 L48.5 19.2 L49.0 17.8 L49.5 20.0 L50.0 21.9 L50.5 23.5 L51.0 24.6 L51.5 24.8 L52.0 23.8 L52.5 22.4 L53.0 22.0 L53.5 23.5 L54.0 24.5 L54.5 25.2 L55.0 25.0 L55.5 25.1 L56.0 24.3 L56.5 23.0 L57.0 21.5 L57.5 19.6 L58.0 18.7 L58.5 20.7 L59.0 22.4 L59.5 23.8 L60.0 24.8 L60.5 25.0 L61.0 24.2 L61.5 23.0 L62.0 21.5 L62.5 22.9 L63.0 24.1 L63.5 25.0 L64.0 25.1 L64.5 25.1 L65.0 24.3 L65.5 23.2 L66.0 21.9 L66.5 20.2 L67.0 19.7 L67.5 21.4 L68.0 22.9 L68.5 24.1 L69.0 24.9 L69.5 25.2 L70.0 25.0 L70.5 24.3 L71.0 22.9 L71.5 21.1 L72.0 21.4 L72.5 23.2 L73.0 24.5 L73.5 24.8 L74.0 23.5 L74.5 21.7 L75.0 19.4 L75.5 16.6 L76.0 16.3 L76.5 19.1 L77.0 21.4 L77.5 23.3 L78.0 24.7 L78.5 25.4 L79.0 25.3 L79.5 24.6 L80.0 23.7 L80.5 22.4 L81.0 22.7 L81.5 23.9 L82.0 24.8 L82.5 24.8 L83.0 23.6 L83.5 22.0 L84.0 19.9 L84.5 17.4 L85.0 17.5 L85.5 20.0 L86.0 22.0 L86.5 23.7 L87.0 24.8 L87.5 25.3 L88.0 24.9 L88.5 24.5 L89.0 23.3 L89.5 21.6 L90.0 21.7 L90.5 23.3 L91.0 24.5 L91.5 24.8 L92.0 23.9 L92.5 22.5 L93.0 20.8 L93.5 18.7 L94.0 19.2 L94.5 21.1 L95.0 22.8 L95.5 24.1 L96.0 25.0 L96.5 25.1 L97.0 24.3 L97.5 22.7 L98.0 20.5 L98.5 20.1 L99.0 22.4 L99.5 24.1 L100.0 25.0 L100.5 24.7 L101.0 23.5 L101.5 21.9 L102.0 19.8 L102.5 17.5 L103.0 18.4 L103.5 20.6 L104.0 22.5 L104.5 24.0 L105.0 25.0 L105.5 24.3 L106.0 23.1 L106.5 21.6 L107.0 22.7 L107.5 24.0 L108.0 24.9 L108.5 25.2 L109.0 25.3 L109.5 24.8 L110.0 23.8 L110.5 22.5 L111.0 20.8 L111.5 18.9 L112.0 19.9 L112.5 21.7 L113.0 23.2 L113.5 24.3 L114.0 25.1 L114.5 25.1 L115.0 24.1 L115.5 22.5 L116.0 20.4 L116.5 21.2 L117.0 23.1 L117.5 24.5 L118.0 25.3 L118.5 24.6 L119.0 23.4 L119.5 21.8 L120.0 19.9 L120.5 17.6 L121.0 19.2 L121.5 21.3 L122.0 23.0 L122.5 24.3 L123.0 25.1 L123.5 25.0 L124.0 23.8 L124.5 22.0 L125.0 19.7 L125.5 21.4 L126.0 23.3 L126.5 24.7 L127.0 25.0 L127.5 24.5 L128.0 23.2 L128.5 21.6 L129.0 19.6 L129.5 17.2 L130.0 19.2 L130.5 21.3 L131.0 23.0 L131.5 24.3 L132.0 24.9 L132.5 24.3 L133.0 23.3 L133.5 22.2 L134.0 23.5 L134.5 24.5 L135.0 25.1 L135.5 25.5 L136.0 25.2 L136.5 24.4 L137.0 23.0 L137.5 21.3 L138.0 19.1 L138.5 16.6 L139.0 19.1 L139.5 21.3 L140.0 23.0 L140.5 24.4 L141.0 25.1 L141.5 24.8 L142.0 23.9 L142.5 22.7 L143.0 22.1 L143.5 23.5 L144.0 24.5 L144.5 25.1 L145.0 25.1 L145.5 24.2 L146.0 22.7 L146.5 20.7 L147.0 18.4 L147.5 16.1 L148.0 18.8 L148.5 21.1 L149.0 22.9 L149.5 24.4 L150.0 25.1 L150.5 24.8 L151.0 23.4 L151.5 21.5 L152.0 19.2 L152.5 21.6 L153.0 23.5 L153.5 24.8 L154.0 25.1 L154.5 24.0 L155.0 22.3 L155.5 20.2 L156.0 17.6 L156.5 15.6 L157.0 18.5 L157.5 20.9 L158.0 22.9 L158.5 24.4 L159.0 25.2 L159.5 24.9 L160.0 23.9 L160.5 22.4 L161.0 20.6 L161.5 22.5 L162.0 23.9 L162.5 25.0 L163.0 25.0 L163.5 23.8 L164.0 22.1 L164.5 20.0 L165.0 17.3 L165.5 15.8 L166.0 18.7 L166.5 21.1 L167.0 23.0 L167.5 24.5 L168.0 24.3 L168.5 22.7 L169.0 20.7 L169.5 20.5 L170.0 22.6 L170.5 24.2 L171.0 25.1 L171.5 25.3 L172.0 25.0 L172.5 23.9 L173.0 22.3 L173.5 20.3 L174.0 17.8 L174.5 16.9 L175.0 19.4 L175.5 21.6 L176.0 23.4 L176.5 24.6 L177.0 25.3 L177.5 25.2 L178.0 24.3 L178.5 22.9 L179.0 21.1 L179.5 21.6 L180.0 23.3 L180.5 24.6 L181.0 25.0 L181.5 24.3 L182.0 23.1 L182.5 21.7 L183.0 20.0 L183.5 19.6 L184.0 21.4 L184.5 22.9 L185.0 24.1 L185.5 24.9 L186.0 25.4 L186.5 24.9 L187.0 24.4 L187.5 23.0 L188.0 21.1 L188.5 21.3 L189.0 23.1 L189.5 24.5 L190.0 24.9 L190.5 23.9 L191.0 22.4 L191.5 20.5 L192.0 18.3 L192.5 18.2 L193.0 20.5 L193.5 22.3 L194.0 23.8 L194.5 24.9 L195.0 25.1 L195.5 24.2 L196.0 22.9 L196.5 21.2 L197.0 22.5 L197.5 23.9 L198.0 24.9 L198.5 25.3 L199.0 24.8 L199.5 23.6 L200.0 22.0 L200.5 20.0 L201.0 17.7 L201.5 18.0 L202.0 20.3 L202.5 22.3 L203.0 23.8 L203.5 24.9 L204.0 25.2 L204.5 24.6 L205.0 23.7 L205.5 22.6 L206.0 23.1 L206.5 24.1 L207.0 24.9 L207.5 25.3 L208.0 24.7 L208.5 23.6 L209.0 21.9 L209.5 19.9 L210.0 17.6 L210.5 18.3 L211.0 20.5 L211.5 22.4 L212.0 23.9 L212.5 25.0 L213.0 25.2 L213.5 25.0 L214.0 23.8 L214.5 22.1 L215.0 19.8 L215.5 21.3 L216.0 23.2 L216.5 24.6 L217.0 24.8 L217.5 23.8 L218.0 22.4 L218.5 20.7 L219.0 18.6 L219.5 19.6 L220.0 21.4 L220.5 23.0 L221.0 24.2 L221.5 25.1 L222.0 25.6 L222.5 24.9 L223.0 23.8 L223.5 22.1 L224.0 19.9 L224.5 21.8 L225.0 23.6 L225.5 24.8 L226.0 24.8 L226.5 23.9 L227.0 22.7 L227.5 21.2 L228.0 19.4 L228.5 20.5 L229.0 22.1 L229.5 23.4 L230.0 24.5 L230.5 24.9 L231.0 25.3 L231.5 24.9 L232.0 23.9 L232.5 22.6 L233.0 21.7 L233.5 23.2 L234.0 24.4 L234.5 25.1 L235.0 24.6 L235.5 23.5 L236.0 21.9 L236.5 20.1 L237.0 17.9 L237.5 19.6 L238.0 21.5 L238.5 23.1 L239.0 24.4 L239.5 25.0 L240.0 24.3 L240.5 23.2 L241.0 21.7 L241.5 23.0 L242.0 24.2 L242.5 25.0 L243.0 24.9 L243.5 25.0 L244.0 24.6 L244.5 23.4 L245.0 22.0 L245.5 20.1 L246.0 18.0 L246.5 20.0 L247.0 21.8 L247.5 23.3 L248.0 24.5 L248.5 25.2 L249.0 25.2 L249.5 24.5 L250.0 23.2 L250.5 21.6 L251.0 21.5 L251.5 23.2 L252.0 24.5 L252.5 25.2 L253.0 24.6 L253.5 23.6 L254.0 22.3 L254.5 20.8 L255.0 19.1 L255.5 20.9 L256.0 22.4 L256.5 23.7 L257.0 24.7 L257.5 25.3 L258.0 24.7 L258.5 23.5 L259.0 21.9 L259.5 21.4 L260.0 23.1 L260.5 24.4 L261.0 25.2 L261.5 25.0 L262.0 24.0 L262.5 22.4 L263.0 20.4 L263.5 17.9 L264.0 15.7 L264.5 18.5 L265.0 20.9 L265.5 22.9 L266.0 24.4 L266.5 25.2 L267.0 24.9 L267.5 24.1 L268.0 22.8 L268.5 21.7 L269.0 23.2 L269.5 24.3 L270.0 25.1 L270.5 25.2 L271.0 24.5 L271.5 23.4 L272.0 22.1 L272.5 20.5 L273.0 19.4 L273.5 21.2 L274.0 22.7 L274.5 23.9 L275.0 24.8 L275.5 24.8 L276.0 23.9 L276.5 22.6 L277.0 22.3 L277.5 23.6 L278.0 24.6 L278.5 25.2 L279.0 25.2 L279.5 25.0 L280.0 24.0 L280.5 22.4 L281.0 20.4 L281.5 18.1 L282.0 16.9 L282.5 19.4 L283.0 21.6 L283.5 23.3 L284.0 24.6 L284.5 25.0 L285.0 25.0 L285.5 24.0 L286.0 22.4 L286.5 20.5 L287.0 22.0 L287.5 23.7 L288.0 24.8 L288.5 24.9 L289.0 23.8 L289.5 22.1 L290.0 20.0 L290.5 17.5 L291.0 16.8 L291.5 19.4 L292.0 21.6 L292.5 23.4 L293.0 24.7 L293.5 25.2 L294.0 24.8 L294.5 23.8 L295.0 22.4 L295.5 22.0 L296.0 23.4 L296.5 24.5 L297.0 25.1 L297.5 24.9 L298.0 23.8 L298.5 22.3 L299.0 20.4 L299.5 18.1 L300.0 17.8 L300.5 20.1 L301.0 22.1 L301.5 23.7 L302.0 24.8 L302.5 25.0 L303.0 23.8 L303.5 22.2 L304.0 20.1 L304.5 21.9 L305.0 23.6 L305.5 24.8 L306.0 25.4 L306.5 24.7 L307.0 23.4 L307.5 21.6 L308.0 19.2 L308.5 16.5 L309.0 16.6 L309.5 19.3 L310.0 21.6 L310.5 23.5 L311.0 24.8 L311.5 25.4 L312.0 25.2 L312.5 24.4 L313.0 23.3 L313.5 21.7 L314.0 22.3 L314.5 23.7 L315.0 24.7 L315.5 24.7 L316.0 23.3 L316.5 21.4 L317.0 19.1 L317.5 16.4 L318.0 17.0 L318.5 19.6 L319.0 21.9 L319.5 23.6 L320.0 24.9 L320.5 25.4 L321.0 24.9 L321.5 23.9 L322.0 22.4 L322.5 20.8 L323.0 22.6 L323.5 24.0 L324.0 25.0 L324.5 24.6 L325.0 23.2 L325.5 21.4 L326.0 19.1 L326.5 16.4 L327.0 17.4 L327.5 20.0 L328.0 22.1 L328.5 23.8 L329.0 24.9 L329.5 23.8 L330.0 22.0 L330.5 19.7 L331.0 21.2 L331.5 23.2 L332.0 24.6 L332.5 25.1 L333.0 25.3 L333.5 24.8 L334.0 23.8 L334.5 22.5 L335.0 20.8 L335.5 18.9 L336.0 19.9 L336.5 21.7 L337.0 23.2 L337.5 24.3 L338.0 25.1 L338.5 25.0 L339.0 24.8 L339.5 23.5 L340.0 21.5 L340.5 18.9 L341.0 21.1 L341.5 23.2 L342.0 24.7 L342.5 24.6 L343.0 23.5 L343.5 22.0 L344.0 20.1 L344.5 17.9 L345.0 19.4 L345.5 21.4 L346.0 23.0 L346.5 24.3 L347.0 25.1 L347.5 24.9 L348.0 23.9 L348.5 22.7 L349.0 21.9 L349.5 23.3 L350.0 24.4 L350.5 25.2 L351.0 25.3 L351.5 24.6 L352.0 23.6 L352.5 22.2 L353.0 20.5 L353.5 18.5 L354.0 20.2 L354.5 21.9 L355.0 23.4 L355.5 24.5 L356.0 24.9 L356.5 23.8 L357.0 22.1 L357.5 20.0 L358.0 21.8 L358.5 23.5 L359.0 24.8 L359.5 25.4 L360.0 25.2 L360.5 24.5 L361.0 23.3 L361.5 21.8 L362.0 19.9 L362.5 17.7 L363.0 19.9 L363.5 21.8 L364.0 23.3 L364.5 24.5 L365.0 25.2 L365.5 25.0 L366.0 24.6 L366.5 23.2 L367.0 21.1 L367.5 19.3 L368.0 21.8 L368.5 23.7 L369.0 24.9 L369.5 24.4 L370.0 23.2 L370.5 21.6 L371.0 19.7 L371.5 17.9 L372.0 20.1 L372.5 21.9 L373.0 23.4 L373.5 24.6 L374.0 24.9 L374.5 25.5 L375.0 24.9 L375.5 23.6 L376.0 21.8 L376.5 19.5 L377.0 21.6 L377.5 23.5 L378.0 24.8 L378.5 24.1 L379.0 22.7 L379.5 20.8 L380.0 18.5 L380.5 16.7 L381.0 19.2 L381.5 21.4 L382.0 23.2 L382.5 24.5 L383.0 25.3 L383.5 25.3 L384.0 24.3 L384.5 22.7 L385.0 20.4 L385.5 19.9 L386.0 22.2 L386.5 24.0 L387.0 25.0 L387.5 24.0 L388.0 22.5 L388.5 20.6 L389.0 18.2 L389.5 16.9 L390.0 19.4 L390.5 21.5 L391.0 23.3 L391.5 24.6 L392.0 25.3 L392.5 24.4 L393.0 22.7 L393.5 20.5 L394.0 19.5 L394.5 22.0 L395.0 23.8 L395.5 25.1 L396.0 25.1 L396.5 24.3 L397.0 23.2 L397.5 21.8 L398.0 20.1 L398.5 19.4 L399.0 21.2 L399.5 22.7 L400.0 24.0 L400.5 24.9 L401.0 24.6 L401.5 23.1 L402.0 21.1 L402.5 19.3 L403.0 21.8 L403.5 23.7 L404.0 24.9 L404.5 24.9 L405.0 24.9 L405.5 23.9 L406.0 22.3 L406.5 20.4 L407.0 18.1 L407.5 17.6 L408.0 20.0 L408.5 22.0 L409.0 23.6 L409.5 24.8 L410.0 25.2 L410.5 25.1 L411.0 24.4 L411.5 23.2 L412.0 21.6 L412.5 22.0 L413.0 23.5 L413.5 24.7 L414.0 24.8 L414.5 23.6 L415.0 21.8 L415.5 19.6 L416.0 17.0 L416.5 16.9 L417.0 19.5 L417.5 21.7 L418.0 23.5 L418.5 24.8 L419.0 25.3 L419.5 24.5 L420.0 22.9 L420.5 20.7 L421.0 19.5 L421.5 21.9 L422.0 23.8 L422.5 25.0 L423.0 24.8 L423.5 23.7 L424.0 22.1 L424.5 20.2 L425.0 17.9 L425.5 18.2 L426.0 20.5 L426.5 22.4 L427.0 23.9 L427.5 24.9 L428.0 24.7 L428.5 23.9 L429.0 22.7 L429.5 22.8 L430.0 24.0 L430.5 24.8 L431.0 25.2 L431.5 25.4 L432.0 24.7 L432.5 23.4 L433.0 21.6 L433.5 19.4 L434.0 16.8 L434.5 17.6 L435.0 20.1 L435.5 22.1 L436.0 23.8 L436.5 24.9 L437.0 25.3 L437.5 25.1 L438.0 24.2 L438.5 22.9 L439.0 21.2 L439.5 22.5 L440.0 23.9 L440.5 24.9 L441.0 24.7 L441.5 23.6 L442.0 22.2 L442.5 20.3 L443.0 18.2 L443.5 19.2 L444.0 21.2 L444.5 22.9 L445.0 24.2 L445.5 25.1 L446.0 25.0 L446.5 24.6 L447.0 23.5 L447.5 22.1 L448.0 22.4 L448.5 23.7 L449.0 24.7 L449.5 25.3 L450.0 24.4 L450.5 23.0 L451.0 21.1 L451.5 18.7 L452.0 16.0 L452.5 17.7 L453.0 20.2 L453.5 22.3 L454.0 23.9 L454.5 25.0 L455.0 24.9 L455.5 23.9 L456.0 22.1 L456.5 19.7 L457.0 20.6 L457.5 22.8 L458.0 24.4 L458.5 25.0 L459.0 24.4 L459.5 23.0 L460.0 21.1 L460.5 18.8 L461.0 16.1 L461.5 18.2 L462.0 20.6 L462.5 22.6 L463.0 24.1 L463.5 25.1 L464.0 25.2 L464.5 25.0 L465.0 24.3 L465.5 23.3 L466.0 22.4 L466.5 23.6 L467.0 24.5 L467.5 25.2 L468.0 24.6 L468.5 23.6 L469.0 22.3 L469.5 20.6 L470.0 18.7 L470.5 20.5 L471.0 22.1 L471.5 23.5 L472.0 24.6 L472.5 25.0 L473.0 25.0 L473.5 25.0 L474.0 24.3 L474.5 23.3 L475.0 22.2 L475.5 23.5 L476.0 24.4 L476.5 24.9 L477.0 24.4 L477.5 23.2 L478.0 21.5 L478.5 19.5 L479.0 17.4 L479.5 19.7 L480.0 21.7 L480.5 23.3 L481.0 24.5 L481.5 25.0 L482.0 24.2 L482.5 23.1 L483.0 21.6 L483.5 23.1 L484.0 24.2 L484.5 25.0 L485.0 25.3 L485.5 25.2 L486.0 24.5 L486.5 23.4 L487.0 22.0 L487.5 20.4 L488.0 18.9 L488.5 20.8 L489.0 22.4 L489.5 23.7 L490.0 24.7 L490.5 25.0 L491.0 25.1 L491.5 24.8 L492.0 23.8 L492.5 22.3 L493.0 21.2 L493.5 22.9 L494.0 24.2 L494.5 25.1 L495.0 24.3 L495.5 23.1 L496.0 21.5 L496.5 19.6 L497.0 18.3 L497.5 20.4 L498.0 22.2 L498.5 23.6 L499.0 24.7 L499.5 25.0 L500.0 24.1 L500.5 22.7 L501.0 20.8 L501.5 22.1 L502.0 23.7 L502.5 24.8 L503.0 25.4 L503.5 25.0 L504.0 24.4 L504.5 23.3 L505.0 21.9 L505.5 20.3 L506.0 19.5 L506.5 21.2 L507.0 22.7 L507.5 24.0 L508.0 24.8 L508.5 24.1 L509.0 22.4 L509.5 20.0 L510.0 20.0 L510.5 22.3 L511.0 24.1 L511.5 24.9 L512.0 25.2 L512.5 25.0 L513.0 24.0 L513.5 22.6 L514.0 20.9 L514.5 18.7 L515.0 18.1 L515.5 20.3 L516.0 22.2 L516.5 23.7 L517.0 24.8 L517.5 25.2 L518.0 24.5 L518.5 23.5 L519.0 22.2 L519.5 23.1 L520.0 24.2 L520.5 25.0 L521.0 25.0 L521.5 24.8 L522.0 23.5 L522.5 21.7 L523.0 19.4 L523.5 16.7 L524.0 16.4 L524.5 19.1 L525.0 21.5 L525.5 23.3 L526.0 24.7 L526.5 24.7 L527.0 23.7 L527.5 22.4 L528.0 22.1 L528.5 23.5 L529.0 24.6 L529.5 25.2 L530.0 24.9 L530.5 24.8 L531.0 23.8 L531.5 22.2 L532.0 20.3 L532.5 18.0 L533.0 18.1 L533.5 20.4 L534.0 22.3 L534.5 23.8 L535.0 24.9 L535.5 25.0 L536.0 24.8 L536.5 23.5 L537.0 21.8 L537.5 20.1 L538.0 22.2 L538.5 23.8 L539.0 24.9 L539.5 24.8 L540.0 23.8 L540.5 22.5 L541.0 20.7 L541.5 18.7 L542.0 19.1 L542.5 21.1 L543.0 22.8 L543.5 24.1 L544.0 25.0 L544.5 24.9 L545.0 24.1 L545.5 23.0 L546.0 22.3 L546.5 23.6 L547.0 24.6 L547.5 24.9 L548.0 25.3 L548.5 24.7 L549.0 23.6 L549.5 22.1 L550.0 20.2 L550.5 18.0 L551.0 18.8 L551.5 20.9 L552.0 22.7 L552.5 24.1 L553.0 25.0 L553.5 25.3 L554.0 24.5 L554.5 23.2 L555.0 21.3 L555.5 20.7 L556.0 22.7 L556.5 24.2 L557.0 24.9 L557.5 24.7 L558.0 23.7 L558.5 22.2 L559.0 20.4 L559.5 18.4 L560.0 19.5 L560.5 21.4 L561.0 23.0 L561.5 24.3 L562.0 25.1 L562.5 24.8 L563.0 23.8 L563.5 22.4 L564.0 21.5 L564.5 23.1 L565.0 24.3 L565.5 25.1 L566.0 25.1 L566.5 24.6 L567.0 23.6 L567.5 22.1 L568.0 20.3 L568.5 18.2 L569.0 19.7 L569.5 21.6 L570.0 23.1 L570.5 24.3 L571.0 25.1 L571.5 24.7 L572.0 23.4 L572.5 21.7 L573.0 20.8 L573.5 22.7 L574.0 24.2 L574.5 25.0 L575.0 24.9 L575.5 24.6 L576.0 23.5 L576.5 22.1 L577.0 20.3 L577.5 18.2 L578.0 20.0 L578.5 21.8 L579.0 23.3 L579.5 24.5 L580.0 24.9 L580.5 24.0 L581.0 22.8 L581.5 21.5 L582.0 23.1 L582.5 24.3 L583.0 25.0 L583.5 25.3 L584.0 25.1 L584.5 24.6 L585.0 23.6 L585.5 22.3 L586.0 20.7 L586.5 18.8 L587.0 20.7 L587.5 22.3 L588.0 23.6 L588.5 24.6 L589.0 24.8 L589.5 23.6 L590.0 21.9 L590.5 20.1 L591.0 22.1 L591.5 23.8 L592.0 24.9 L592.5 25.4 L593.0 25.2 L593.5 24.3 L594.0 23.0 L594.5 21.3 L595.0 19.2 L595.5 17.2 L596.0 19.6 L596.5 21.6 L597.0 23.2 L597.5 24.5 L598.0 25.1 L598.5 25.1 L599.0 24.9 L599.5 24.0 L600.0 22.8 L600.5 22.1 L601.0 23.4 L601.5 24.5 L602.0 25.2 L602.5 24.5 L603.0 23.4 L603.5 22.0 L604.0 20.4 L604.5 19.1 L605.0 20.9 L605.5 22.5 L606.0 23.8 L606.5 24.7 L607.0 25.2 L607.5 25.2 L608.0 25.0 L608.5 24.1 L609.0 22.9 L609.5 21.8 L610.0 23.2 L610.5 24.4 L611.0 25.0 L611.5 23.9 L612.0 22.3 L612.5 20.3 L613.0 17.8 L613.5 16.3 L614.0 19.0 L614.5 21.3 L615.0 23.2 L615.5 24.5 L616.0 25.0 L616.5 24.6 L617.0 23.6 L617.5 22.3 L618.0 22.9 L618.5 24.0 L619.0 24.9 L619.5 25.0 L620.0 25.1 L620.5 24.2 L621.0 22.9 L621.5 21.3 L622.0 19.4 L622.5 18.6 L623.0 20.6 L623.5 22.4 L624.0 23.8 L624.5 24.8 L625.0 25.3 L625.5 25.3 L626.0 24.8 L626.5 23.8 L627.0 22.6 L627.5 22.4 L628.0 23.7 L628.5 24.6 L629.0 25.0 L629.5 24.1 L630.0 22.8 L630.5 21.1 L631.0 19.1 L631.5 18.7 L632.0 20.7 L632.5 22.5 L633.0 23.8 L633.5 24.8 L634.0 25.4 L634.5 25.2 L635.0 24.3 L635.5 22.7 L636.0 20.6 L636.5 20.5 L637.0 22.6 L637.5 24.2 L638.0 24.8 L638.5 23.6 L639.0 22.0 L639.5 19.9 L640.0 17.4 L640.5 17.3 L641.0 19.8 L641.5 21.9 L642.0 23.6 L642.5 24.8 L643.0 25.0 L643.5 25.0 L644.0 24.2 L644.5 23.0 L645.0 21.7 L645.5 23.2 L646.0 24.3 L646.5 25.1 L647.0 24.8 L647.5 23.6 L648.0 21.9 L648.5 19.8 L649.0 17.3 L649.5 17.6 L650.0 20.1 L650.5 22.1 L651.0 23.7 L651.5 24.9 L652.0 25.1 L652.5 24.9 L653.0 23.9 L653.5 22.6 L654.0 21.7 L654.5 23.2 L655.0 24.3 L655.5 25.1 L656.0 24.7 L656.5 23.4 L657.0 21.6 L657.5 19.4 L658.0 16.7 L658.5 17.5 L659.0 20.0 L659.5 22.1 L660.0 23.8 L660.5 24.9 L661.0 25.2 L661.5 24.4 L662.0 23.0 L662.5 21.2 L663.0 21.4 L663.5 23.2 L664.0 24.5 L664.5 25.3 L665.0 24.7 L665.5 23.6 L666.0 22.1 L666.5 20.3 L667.0 18.1 L667.5 19.1 L668.0 21.1 L668.5 22.8 L669.0 24.2 L669.5 25.1 L670.0 24.9 L670.5 24.0 L671.0 22.7 L671.5 21.6 L672.0 23.1 L672.5 24.3 L673.0 25.1 L673.5 25.1 L674.0 24.6 L674.5 23.5 L675.0 22.0 L675.5 20.1 L676.0 17.8 L676.5 19.2 L677.0 21.2 L677.5 22.9 L678.0 24.2 L678.5 25.1 L679.0 25.2 L679.5 24.6 L680.0 23.7 L680.5 22.5 L681.0 22.9 L681.5 24.1 L682.0 24.9 L682.5 25.3 L683.0 24.7 L683.5 23.7 L684.0 22.4 L684.5 20.7 L685.0 18.8 L685.5 20.3 L686.0 22.0 L686.5 23.4 L687.0 24.5 L687.5 25.1 L688.0 24.2 L688.5 22.6 L689.0 20.5 L689.5 20.5 L690.0 22.6 L690.5 24.2 L691.0 25.2 L691.5 25.1 L692.0 24.4 L692.5 23.1 L693.0 21.3 L693.5 19.1 L694.0 16.6 L694.5 19.0 L695.0 21.1 L695.5 22.9 L696.0 24.3 L696.5 25.0 L697.0 24.7 L697.5 23.8 L698.0 22.7 L698.5 23.0 L699.0 24.1 L699.5 24.9 L700.0 25.3 L700.5 25.0 L701.0 24.3 L701.5 22.9 L702.0 21.1 L702.5 18.8 L703.0 16.5 L703.5 19.0 L704.0 21.2 L704.5 23.0 L705.0 24.4 L705.5 25.0 L706.0 24.6 L706.5 23.3 L707.0 21.5 L707.5 20.3 L708.0 22.4 L708.5 24.0 L709.0 25.0 L709.5 25.1 L710.0 24.3 L710.5 22.9 L711.0 21.2 L711.5 19.1 L712.0 17.3 L712.5 19.7 L713.0 21.7 L713.5 23.3 L714.0 24.5 L714.5 25.3 L715.0 24.9 L715.5 23.9 L716.0 22.7 L716.5 21.8 L717.0 23.2 L717.5 24.4 L718.0 25.1 L718.5 25.0 L719.0 23.9 L719.5 22.3 L720.0 20.2 L720.5 17.6 L721.0 15.9 L721.5 18.7 L722.0 21.1 L722.5 23.0 L723.0 24.4 L723.5 25.3 L724.0 25.3 L724.5 24.8 L725.0 23.8 L725.5 22.5 L726.0 21.6 L726.5 23.2 L727.0 24.4 L727.5 25.1 L728.0 24.4 L728.5 23.3 L729.0 21.9 L729.5 20.2 L730.0 19.4 L730.5 21.2 L731.0 22.7 L731.5 23.9 L732.0 24.8 L732.5 25.3 L733.0 24.5 L733.5 22.9 L734.0 20.8 L734.5 19.8 L735.0 22.1 L735.5 23.9 L736.0 25.1 L736.5 24.9 L737.0 23.7 L737.5 22.0 L738.0 19.8 L738.5 17.3 L739.0 16.5 L739.5 19.2 L740.0 21.5 L740.5 23.3 L741.0 24.6 L741.5 25.0 L742.0 23.9 L742.5 22.2 L743.0 20.1 L743.5 21.6 L744.0 23.4 L744.5 24.7 L745.0 25.4 L745.5 24.9 L746.0 23.7 L746.5 22.1 L747.0 20.1 L747.5 17.7 L748.0 17.4 L748.5 19.8 L749.0 21.9 L749.5 23.6 L750.0 24.8 L750.5 25.4 L751.0 25.0 L751.5 23.9 L752.0 22.3 L752.5 20.3 L753.0 22.0 L753.5 23.6 L754.0 24.8 L754.5 24.7 L755.0 23.4 L755.5 21.6 L756.0 19.3 L756.5 16.5 L757.0 16.6 L757.5 19.4 L758.0 21.7 L758.5 23.5 L759.0 24.8 L759.5 25.1 L760.0 24.8 L760.5 23.8 L761.0 22.5 L761.5 22.2 L762.0 23.6 L762.5 24.6 L763.0 25.2 L763.5 24.8 L764.0 23.6 L764.5 22.0 L765.0 20.1 L765.5 17.7 L766.0 18.2 L766.5 20.5 L767.0 22.4 L767.5 23.9 L768.0 24.9 L768.5 25.3 L769.0 25.1 L769.5 24.4 L770.0 23.3 L770.5 22.1 L771.0 23.4 L771.5 24.4 L772.0 25.1 L772.5 24.8 L773.0 23.7 L773.5 22.3 L774.0 20.5 L774.5 18.4 L775.0 19.2 L775.5 21.2 L776.0 22.8 L776.5 24.1 L777.0 25.0 L777.5 25.2 L778.0 24.5 L778.5 23.5 L779.0 22.1 L779.5 22.7 L780.0 23.9 L780.5 24.8 L781.0 25.3 L781.5 24.5 L782.0 23.0 L782.5 21.0 L783.0 18.6 L783.5 15.7 L784.0 17.3 L784.5 19.9 L785.0 22.1 L785.5 23.8 L786.0 25.0 L786.5 25.4 L787.0 24.8 L787.5 23.6 L788.0 21.9 L788.5 20.1 L789.0 22.2 L789.5 23.8 L790.0 24.9 L790.5 24.4 L791.0 22.9 L791.5 20.9 L792.0 18.4 L792.5 15.6 L793.0 17.6 L793.5 20.2 L794.0 22.3 L794.5 24.0 L795.0 25.1 L795.5 23.9 L796.0 22.2 L796.5 20.0 L797.0 21.2 L797.5 23.1 L798.0 24.6 L798.5 25.3 L799.0 25.1 L799.5 24.4 L800.0 23.0 L800.5 21.2 L801.0 19.0 L801.5 16.4 L802.0 18.6 L802.5 20.9 L803.0 22.8 L803.5 24.2 L804.0 24.9 L804.5 24.7 L805.0 23.2 L805.5 21.2 L806.0 19.1 L806.5 21.6 L807.0 23.5 L807.5 24.9 L808.0 25.0 L808.5 24.3 L809.0 22.8 L809.5 20.8 L810.0 18.5 L810.5 15.7 L811.0 18.5 L811.5 20.8 L812.0 22.8 L812.5 24.3 L813.0 25.2 L813.5 24.9 L814.0 24.0 L814.5 22.8 L815.0 22.0 L815.5 23.4 L816.0 24.4 L816.5 25.0 L817.0 25.0 L817.5 24.1 L818.0 22.5 L818.5 20.4 L819.0 17.9 L819.0 37.8 L818.5 34.7 L818.0 32.2 L817.5 30.2 L817.0 28.9 L816.5 28.9 L816.0 29.8 L815.5 31.1 L815.0 32.9 L814.5 31.8 L814.0 30.3 L813.5 29.2 L813.0 29.1 L812.5 30.0 L812.0 31.8 L811.5 34.2 L811.0 37.2 L810.5 40.6 L810.0 37.2 L809.5 34.2 L809.0 31.8 L808.5 30.0 L808.0 29.1 L807.5 29.3 L807.0 30.9 L806.5 33.3 L806.0 36.4 L805.5 33.8 L805.0 31.3 L804.5 29.5 L804.0 28.9 L803.5 30.1 L803.0 31.9 L802.5 34.2 L802.0 37.0 L801.5 39.8 L801.0 36.5 L800.5 33.8 L800.0 31.5 L799.5 29.8 L799.0 28.8 L798.5 28.7 L798.0 29.6 L797.5 31.4 L797.0 33.8 L796.5 35.2 L796.0 32.5 L795.5 30.4 L795.0 29.1 L794.5 30.4 L794.0 32.4 L793.5 35.1 L793.0 38.3 L792.5 40.8 L792.0 37.2 L791.5 34.2 L791.0 31.7 L790.5 29.9 L790.0 29.2 L789.5 30.6 L789.0 32.6 L788.5 35.2 L788.0 32.9 L787.5 30.8 L787.0 29.3 L786.5 28.8 L786.0 29.1 L785.5 30.5 L785.0 32.7 L784.5 35.4 L784.0 38.7 L783.5 40.6 L783.0 37.0 L782.5 34.0 L782.0 31.6 L781.5 29.8 L781.0 28.7 L780.5 29.3 L780.0 30.4 L779.5 32.0 L779.0 32.6 L778.5 31.0 L778.0 29.7 L777.5 29.0 L777.0 29.0 L776.5 30.2 L776.0 31.8 L775.5 33.8 L775.0 36.3 L774.5 37.3 L774.0 34.7 L773.5 32.5 L773.0 30.7 L772.5 29.4 L772.0 29.0 L771.5 29.9 L771.0 31.1 L770.5 32.7 L770.0 31.2 L769.5 29.9 L769.0 29.1 L768.5 28.6 L768.0 29.2 L767.5 30.5 L767.0 32.3 L766.5 34.7 L766.0 37.5 L765.5 38.1 L765.0 35.2 L764.5 32.8 L764.0 30.8 L763.5 29.4 L763.0 28.9 L762.5 29.6 L762.0 30.9 L761.5 32.6 L761.0 32.1 L760.5 30.6 L760.0 29.4 L759.5 28.9 L759.0 29.4 L758.5 31.0 L758.0 33.2 L757.5 36.1 L757.0 39.4 L756.5 39.6 L756.0 36.2 L755.5 33.3 L755.0 31.1 L754.5 29.4 L754.0 29.3 L753.5 30.8 L753.0 32.9 L752.5 35.0 L752.0 32.5 L751.5 30.5 L751.0 29.1 L750.5 28.6 L750.0 29.4 L749.5 30.9 L749.0 32.9 L748.5 35.5 L748.0 38.6 L747.5 38.2 L747.0 35.2 L746.5 32.7 L746.0 30.7 L745.5 29.3 L745.0 28.8 L744.5 29.4 L744.0 31.1 L743.5 33.3 L743.0 35.2 L742.5 32.6 L742.0 30.5 L741.5 29.1 L741.0 29.6 L740.5 31.2 L740.0 33.5 L739.5 36.3 L739.0 39.7 L738.5 38.7 L738.0 35.5 L737.5 32.8 L737.0 30.7 L736.5 29.2 L736.0 29.0 L735.5 30.5 L735.0 32.7 L734.5 35.5 L734.0 34.3 L733.5 31.7 L733.0 29.8 L732.5 29.1 L732.0 29.3 L731.5 30.4 L731.0 32.0 L730.5 33.9 L730.0 36.1 L729.5 35.1 L729.0 33.0 L728.5 31.2 L728.0 29.9 L727.5 29.0 L727.0 29.9 L726.5 31.3 L726.0 33.2 L725.5 32.2 L725.0 30.5 L724.5 29.3 L724.0 28.6 L723.5 28.7 L723.0 29.8 L722.5 31.6 L722.0 34.0 L721.5 36.9 L721.0 40.4 L720.5 38.2 L720.0 35.1 L719.5 32.5 L719.0 30.4 L718.5 29.1 L718.0 28.9 L717.5 29.9 L717.0 31.3 L716.5 33.1 L716.0 32.0 L715.5 30.4 L715.0 29.2 L714.5 28.8 L714.0 29.7 L713.5 31.2 L713.0 33.2 L712.5 35.7 L712.0 38.6 L711.5 36.4 L711.0 33.8 L710.5 31.6 L710.0 30.0 L709.5 28.9 L709.0 29.0 L708.5 30.4 L708.0 32.4 L707.5 35.0 L707.0 33.5 L706.5 31.2 L706.0 29.5 L705.5 29.0 L705.0 29.9 L704.5 31.6 L704.0 33.8 L703.5 36.5 L703.0 39.6 L702.5 36.7 L702.0 34.0 L701.5 31.7 L701.0 30.0 L700.5 28.9 L700.0 28.7 L699.5 29.2 L699.0 30.2 L698.5 31.5 L698.0 32.0 L697.5 30.5 L697.0 29.5 L696.5 28.9 L696.0 30.0 L695.5 31.7 L695.0 33.9 L694.5 36.6 L694.0 39.5 L693.5 36.3 L693.0 33.7 L692.5 31.5 L692.0 29.9 L691.5 29.0 L691.0 28.8 L690.5 30.1 L690.0 32.1 L689.5 34.7 L689.0 34.7 L688.5 32.0 L688.0 30.0 L687.5 28.9 L687.0 29.7 L686.5 31.1 L686.0 32.8 L685.5 34.9 L685.0 36.7 L684.5 34.4 L684.0 32.4 L683.5 30.7 L683.0 29.5 L682.5 29.0 L682.0 29.2 L681.5 30.3 L681.0 31.7 L680.5 32.2 L680.0 30.7 L679.5 29.5 L679.0 28.9 L678.5 29.0 L678.0 30.0 L677.5 31.7 L677.0 33.8 L676.5 36.3 L676.0 38.0 L675.5 35.2 L675.0 32.9 L674.5 31.0 L674.0 29.5 L673.5 28.7 L673.0 29.0 L672.5 30.0 L672.0 31.5 L671.5 33.4 L671.0 32.0 L670.5 30.4 L670.0 29.2 L669.5 29.0 L669.0 30.1 L668.5 31.8 L668.0 33.9 L667.5 36.4 L667.0 37.6 L666.5 34.9 L666.0 32.7 L665.5 30.8 L665.0 29.4 L664.5 29.0 L664.0 29.7 L663.5 31.3 L663.0 33.5 L662.5 33.8 L662.0 31.6 L661.5 29.9 L661.0 28.8 L660.5 29.2 L660.0 30.6 L659.5 32.7 L659.0 35.3 L658.5 38.4 L658.0 39.3 L657.5 36.1 L657.0 33.3 L656.5 31.1 L656.0 29.5 L655.5 29.0 L655.0 29.9 L654.5 31.4 L654.0 33.2 L653.5 32.1 L653.0 30.4 L652.5 29.2 L652.0 28.6 L651.5 29.3 L651.0 30.7 L650.5 32.7 L650.0 35.2 L649.5 38.2 L649.0 38.6 L648.5 35.5 L648.0 33.0 L647.5 30.9 L647.0 29.4 L646.5 29.0 L646.0 30.0 L645.5 31.4 L645.0 33.2 L644.5 31.6 L644.0 30.1 L643.5 29.1 L643.0 28.6 L642.5 29.4 L642.0 30.8 L641.5 32.9 L641.0 35.5 L640.5 38.6 L640.0 38.5 L639.5 35.4 L639.0 32.8 L638.5 30.8 L638.0 29.3 L637.5 30.1 L637.0 32.1 L636.5 34.7 L636.0 34.5 L635.5 31.9 L635.0 30.0 L634.5 28.8 L634.0 28.6 L633.5 29.3 L633.0 30.5 L632.5 32.2 L632.0 34.4 L631.5 36.9 L631.0 36.4 L630.5 33.9 L630.0 31.9 L629.5 30.2 L629.0 29.1 L628.5 29.5 L628.0 30.8 L627.5 32.4 L627.0 32.1 L626.5 30.5 L626.0 29.4 L625.5 28.7 L625.0 28.9 L624.5 29.4 L624.0 30.6 L623.5 32.4 L623.0 34.5 L622.5 37.0 L622.0 36.1 L621.5 33.7 L621.0 31.7 L620.5 30.1 L620.0 29.0 L619.5 28.6 L619.0 29.2 L618.5 30.3 L618.0 31.7 L617.5 32.5 L617.0 30.9 L616.5 29.6 L616.0 28.8 L615.5 29.7 L615.0 31.4 L614.5 33.7 L614.0 36.5 L613.5 39.8 L613.0 38.0 L612.5 35.0 L612.0 32.4 L611.5 30.4 L611.0 29.1 L610.5 29.9 L610.0 31.3 L609.5 33.0 L609.0 31.7 L608.5 30.2 L608.0 29.1 L607.5 29.1 L607.0 28.8 L606.5 29.4 L606.0 30.6 L605.5 32.2 L605.0 34.1 L604.5 36.4 L604.0 34.8 L603.5 32.8 L603.0 31.1 L602.5 29.7 L602.0 29.0 L601.5 29.7 L601.0 31.0 L600.5 32.7 L600.0 31.8 L599.5 30.3 L599.0 29.2 L598.5 29.0 L598.0 28.8 L597.5 29.7 L597.0 31.3 L596.5 33.3 L596.0 35.8 L595.5 38.7 L595.0 36.2 L594.5 33.7 L594.0 31.6 L593.5 29.9 L593.0 28.9 L592.5 28.9 L592.0 29.2 L591.5 30.6 L591.0 32.6 L590.5 35.2 L590.0 32.9 L589.5 30.8 L589.0 29.3 L588.5 29.6 L588.0 30.8 L587.5 32.5 L587.0 34.4 L586.5 36.8 L586.0 34.4 L585.5 32.5 L585.0 30.8 L584.5 29.6 L584.0 28.8 L583.5 28.7 L583.0 29.0 L582.5 30.0 L582.0 31.5 L581.5 33.4 L581.0 31.9 L580.5 30.3 L580.0 29.2 L579.5 29.8 L579.0 31.2 L578.5 33.0 L578.0 35.3 L577.5 37.5 L577.0 34.9 L576.5 32.7 L576.0 30.9 L575.5 29.6 L575.0 28.8 L574.5 29.0 L574.0 30.1 L573.5 31.9 L573.0 34.2 L572.5 33.1 L572.0 31.0 L571.5 29.5 L571.0 28.9 L570.5 29.9 L570.0 31.4 L569.5 33.4 L569.0 35.7 L568.5 37.5 L568.0 34.9 L567.5 32.7 L567.0 30.9 L566.5 29.5 L566.0 29.0 L565.5 28.9 L565.0 30.0 L564.5 31.5 L564.0 33.5 L563.5 32.3 L563.0 30.6 L562.5 29.3 L562.0 29.0 L561.5 30.0 L561.0 31.6 L560.5 33.5 L560.0 35.9 L559.5 37.3 L559.0 34.7 L558.5 32.5 L558.0 30.8 L557.5 29.4 L557.0 28.9 L556.5 30.1 L556.0 32.0 L555.5 34.4 L555.0 33.7 L554.5 31.4 L554.0 29.7 L553.5 28.8 L553.0 29.1 L552.5 30.2 L552.0 31.9 L551.5 34.1 L551.0 36.7 L550.5 37.8 L550.0 35.0 L549.5 32.7 L549.0 30.8 L548.5 29.4 L548.0 28.7 L547.5 28.8 L547.0 29.6 L546.5 30.9 L546.0 32.4 L545.5 31.6 L545.0 30.2 L544.5 29.2 L544.0 29.1 L543.5 30.2 L543.0 31.9 L542.5 33.9 L542.0 36.4 L541.5 36.9 L541.0 34.4 L540.5 32.2 L540.0 30.5 L539.5 29.3 L539.0 29.1 L538.5 30.5 L538.0 32.6 L537.5 35.2 L537.0 33.1 L536.5 30.9 L536.0 29.4 L535.5 29.1 L535.0 29.2 L534.5 30.6 L534.0 32.4 L533.5 34.8 L533.0 37.6 L532.5 37.7 L532.0 34.9 L531.5 32.5 L531.0 30.6 L530.5 29.3 L530.0 29.0 L529.5 28.9 L529.0 29.6 L528.5 30.9 L528.0 32.7 L527.5 32.3 L527.0 30.7 L526.5 29.4 L526.0 29.5 L525.5 31.1 L525.0 33.5 L524.5 36.3 L524.0 39.8 L523.5 39.3 L523.0 36.0 L522.5 33.1 L522.0 30.9 L521.5 29.3 L521.0 28.6 L520.5 29.1 L520.0 30.1 L519.5 31.4 L519.0 32.5 L518.5 31.0 L518.0 29.7 L517.5 28.9 L517.0 29.4 L516.5 30.7 L516.0 32.6 L515.5 34.9 L515.0 37.7 L514.5 36.8 L514.0 34.2 L513.5 32.0 L513.0 30.3 L512.5 29.1 L512.0 28.5 L511.5 28.8 L511.0 30.2 L510.5 32.4 L510.0 35.3 L509.5 35.3 L509.0 32.4 L508.5 30.2 L508.0 29.3 L507.5 30.4 L507.0 31.9 L506.5 33.8 L506.0 35.9 L505.5 34.9 L505.0 32.9 L504.5 31.2 L504.0 29.9 L503.5 28.9 L503.0 28.7 L502.5 29.3 L502.0 30.7 L501.5 32.7 L501.0 34.2 L500.5 32.0 L500.0 30.2 L499.5 29.0 L499.0 29.5 L498.5 30.8 L498.0 32.6 L497.5 34.8 L497.0 37.4 L496.5 35.8 L496.0 33.4 L495.5 31.5 L495.0 30.0 L494.5 29.0 L494.0 30.1 L493.5 31.7 L493.0 33.8 L492.5 32.4 L492.0 30.6 L491.5 29.3 L491.0 29.0 L490.5 28.7 L490.0 29.5 L489.5 30.7 L489.0 32.3 L488.5 34.3 L488.0 36.6 L487.5 34.8 L487.0 32.8 L486.5 31.0 L486.0 29.7 L485.5 28.9 L485.0 28.8 L484.5 29.0 L484.0 30.0 L483.5 31.5 L483.0 33.3 L482.5 31.5 L482.0 30.0 L481.5 29.0 L481.0 29.7 L480.5 31.2 L480.0 33.2 L479.5 35.6 L479.0 38.5 L478.5 35.9 L478.0 33.4 L477.5 31.4 L477.0 29.8 L476.5 28.9 L476.0 29.8 L475.5 31.0 L475.0 32.6 L474.5 31.2 L474.0 29.9 L473.5 29.0 L473.0 28.6 L472.5 28.8 L472.0 29.6 L471.5 30.9 L471.0 32.6 L470.5 34.7 L470.0 36.9 L469.5 34.5 L469.0 32.5 L468.5 30.8 L468.0 29.6 L467.5 28.9 L467.0 29.7 L466.5 30.8 L466.0 32.3 L465.5 31.2 L465.0 30.0 L464.5 29.1 L464.0 28.8 L463.5 29.0 L463.0 30.2 L462.5 32.1 L462.0 34.5 L461.5 37.5 L461.0 40.1 L460.5 36.7 L460.0 33.9 L459.5 31.6 L459.0 29.8 L458.5 28.8 L458.0 29.8 L457.5 31.8 L457.0 34.5 L456.5 35.7 L456.0 32.7 L455.5 30.5 L455.0 29.0 L454.5 29.1 L454.0 30.4 L453.5 32.4 L453.0 35.0 L452.5 38.2 L452.0 40.3 L451.5 36.9 L451.0 33.9 L450.5 31.5 L450.0 29.8 L449.5 29.1 L449.0 29.4 L448.5 30.7 L448.0 32.3 L447.5 32.7 L447.0 30.9 L446.5 29.6 L446.0 28.8 L445.5 29.0 L445.0 30.1 L444.5 31.8 L444.0 33.8 L443.5 36.3 L443.0 37.6 L442.5 34.9 L442.0 32.6 L441.5 30.8 L441.0 29.4 L440.5 29.2 L440.0 30.4 L439.5 32.2 L439.0 33.8 L438.5 31.7 L438.0 30.1 L437.5 29.0 L437.0 28.5 L436.5 29.2 L436.0 30.6 L435.5 32.6 L435.0 35.2 L434.5 38.3 L434.0 39.2 L433.5 36.0 L433.0 33.3 L432.5 31.1 L432.0 29.5 L431.5 29.0 L431.0 28.8 L430.5 29.3 L430.0 30.4 L429.5 31.8 L429.0 31.9 L428.5 30.5 L428.0 29.4 L427.5 29.2 L427.0 30.5 L426.5 32.4 L426.0 34.7 L425.5 37.5 L425.0 37.9 L424.5 35.0 L424.0 32.6 L423.5 30.7 L423.0 29.3 L422.5 29.1 L422.0 30.6 L421.5 32.9 L421.0 35.9 L420.5 34.5 L420.0 31.7 L419.5 29.8 L419.0 28.7 L418.5 29.4 L418.0 31.0 L417.5 33.2 L417.0 35.9 L416.5 39.2 L416.0 39.0 L415.5 35.8 L415.0 33.1 L414.5 30.9 L414.0 29.4 L413.5 29.5 L413.0 30.9 L412.5 32.8 L412.0 33.3 L411.5 31.3 L411.0 29.8 L410.5 28.8 L410.0 28.7 L409.5 29.4 L409.0 30.8 L408.5 32.8 L408.0 35.3 L407.5 38.2 L407.0 37.6 L406.5 34.8 L406.0 32.4 L405.5 30.5 L405.0 29.2 L404.5 28.6 L404.0 29.2 L403.5 30.8 L403.0 33.1 L402.5 36.1 L402.0 34.0 L401.5 31.4 L401.0 29.6 L400.5 29.3 L400.0 30.4 L399.5 31.9 L399.0 33.8 L398.5 36.1 L398.0 35.2 L397.5 33.1 L397.0 31.3 L396.5 29.9 L396.0 29.0 L395.5 29.0 L395.0 30.5 L394.5 32.9 L394.0 35.9 L393.5 34.7 L393.0 31.9 L392.5 29.9 L392.0 29.1 L391.5 29.6 L391.0 31.2 L390.5 33.4 L390.0 36.0 L389.5 39.2 L389.0 37.5 L388.5 34.6 L388.0 32.2 L387.5 30.3 L387.0 29.1 L386.5 30.3 L386.0 32.5 L385.5 35.4 L385.0 34.7 L384.5 32.0 L384.0 29.9 L383.5 29.0 L383.0 28.7 L382.5 29.7 L382.0 31.4 L381.5 33.5 L381.0 36.2 L380.5 39.4 L380.0 37.2 L379.5 34.3 L379.0 32.0 L378.5 30.2 L378.0 29.4 L377.5 31.0 L377.0 33.3 L376.5 35.9 L376.0 33.0 L375.5 30.8 L375.0 29.2 L374.5 28.6 L374.0 29.1 L373.5 29.6 L373.0 31.0 L372.5 32.9 L372.0 35.2 L371.5 37.9 L371.0 35.6 L370.5 33.3 L370.0 31.3 L369.5 29.8 L369.0 29.2 L368.5 30.8 L368.0 33.1 L367.5 36.1 L367.0 33.9 L366.5 31.4 L366.0 29.6 L365.5 29.0 L365.0 28.9 L364.5 29.7 L364.0 31.2 L363.5 33.1 L363.0 35.4 L362.5 38.1 L362.0 35.4 L361.5 33.1 L361.0 31.2 L360.5 29.7 L360.0 28.8 L359.5 28.9 L359.0 29.4 L358.5 30.9 L358.0 33.1 L357.5 35.3 L357.0 32.6 L356.5 30.6 L356.0 29.2 L355.5 29.7 L355.0 31.1 L354.5 32.9 L354.0 35.1 L353.5 37.2 L353.0 34.7 L352.5 32.6 L352.0 30.9 L351.5 29.6 L351.0 28.8 L350.5 28.9 L350.0 29.8 L349.5 31.2 L349.0 32.9 L348.5 32.0 L348.0 30.4 L347.5 29.3 L347.0 28.9 L346.5 30.0 L346.0 31.5 L345.5 33.6 L345.0 36.0 L344.5 37.9 L344.0 35.2 L343.5 32.9 L343.0 31.0 L342.5 29.6 L342.0 29.5 L341.5 31.3 L341.0 34.0 L340.5 36.6 L340.0 33.5 L339.5 31.0 L339.0 29.3 L338.5 28.6 L338.0 28.9 L337.5 29.9 L337.0 31.3 L336.5 33.2 L336.0 35.4 L335.5 36.7 L335.0 34.3 L334.5 32.2 L334.0 30.6 L333.5 29.4 L333.0 28.8 L332.5 28.6 L332.0 29.5 L331.5 31.3 L331.0 33.7 L330.5 35.7 L330.0 32.8 L329.5 30.6 L329.0 29.2 L328.5 30.6 L328.0 32.7 L327.5 35.3 L327.0 38.5 L326.5 39.8 L326.0 36.4 L325.5 33.6 L325.0 31.3 L324.5 29.6 L324.0 29.1 L323.5 30.3 L323.0 32.0 L322.5 34.3 L322.0 32.3 L321.5 30.5 L321.0 29.2 L320.5 28.7 L320.0 29.3 L319.5 30.8 L319.0 33.0 L318.5 35.8 L318.0 39.1 L317.5 39.8 L317.0 36.4 L316.5 33.5 L316.0 31.2 L315.5 29.5 L315.0 29.4 L314.5 30.7 L314.0 32.5 L313.5 33.1 L313.0 31.2 L312.5 29.8 L312.0 28.8 L311.5 28.7 L311.0 29.4 L310.5 31.0 L310.0 33.2 L309.5 36.1 L309.0 39.5 L308.5 39.6 L308.0 36.2 L307.5 33.3 L307.0 31.1 L306.5 29.4 L306.0 28.6 L305.5 29.3 L305.0 30.8 L304.5 33.0 L304.0 35.1 L303.5 32.5 L303.0 30.5 L302.5 29.1 L302.0 29.3 L301.5 30.7 L301.0 32.7 L300.5 35.1 L300.0 38.0 L299.5 37.6 L299.0 34.8 L298.5 32.4 L298.0 30.5 L297.5 29.2 L297.0 29.0 L296.5 29.7 L296.0 31.0 L295.5 32.8 L295.0 32.3 L294.5 30.6 L294.0 29.4 L293.5 28.7 L293.0 29.5 L292.5 31.1 L292.0 33.3 L291.5 36.0 L291.0 39.3 L290.5 38.3 L290.0 35.2 L289.5 32.6 L289.0 30.6 L288.5 29.2 L288.0 29.3 L287.5 30.7 L287.0 32.8 L286.5 34.7 L286.0 32.3 L285.5 30.4 L285.0 29.1 L284.5 28.9 L284.0 29.6 L283.5 31.2 L283.0 33.3 L282.5 36.0 L282.0 39.1 L281.5 37.7 L281.0 34.7 L280.5 32.3 L280.0 30.4 L279.5 29.1 L279.0 28.7 L278.5 28.8 L278.0 29.6 L277.5 30.8 L277.0 32.4 L276.5 32.1 L276.0 30.5 L275.5 29.4 L275.0 29.3 L274.5 30.5 L274.0 32.0 L273.5 33.8 L273.0 36.0 L272.5 34.7 L272.0 32.7 L271.5 31.0 L271.0 29.7 L270.5 29.0 L270.0 29.0 L269.5 29.9 L269.0 31.3 L268.5 33.2 L268.0 31.8 L267.5 30.3 L267.0 29.2 L266.5 28.8 L266.0 29.9 L265.5 31.7 L265.0 34.2 L264.5 37.1 L264.0 40.6 L263.5 37.9 L263.0 34.8 L262.5 32.3 L262.0 30.3 L261.5 29.0 L261.0 29.0 L260.5 29.9 L260.0 31.5 L259.5 33.6 L259.0 32.9 L258.5 31.0 L258.0 29.5 L257.5 28.8 L257.0 29.5 L256.5 30.7 L256.0 32.3 L255.5 34.2 L255.0 36.4 L254.5 34.4 L254.0 32.4 L253.5 30.8 L253.0 29.6 L252.5 28.8 L252.0 29.7 L251.5 31.3 L251.0 33.4 L250.5 33.3 L250.0 31.3 L249.5 29.7 L249.0 28.8 L248.5 28.8 L248.0 29.7 L247.5 31.2 L247.0 33.0 L246.5 35.3 L246.0 37.7 L245.5 35.1 L245.0 32.9 L244.5 31.0 L244.0 29.6 L243.5 28.8 L243.0 28.8 L242.5 29.1 L242.0 30.1 L241.5 31.5 L241.0 33.1 L240.5 31.4 L240.0 30.0 L239.5 29.0 L239.0 29.9 L238.5 31.4 L238.0 33.4 L237.5 35.8 L237.0 37.8 L236.5 35.2 L236.0 32.9 L235.5 31.0 L235.0 29.6 L234.5 28.9 L234.0 29.9 L233.5 31.3 L233.0 33.2 L232.5 32.1 L232.0 30.5 L231.5 29.3 L231.0 28.6 L230.5 28.9 L230.0 29.7 L229.5 31.0 L229.0 32.7 L228.5 34.7 L228.0 36.0 L227.5 33.8 L227.0 32.0 L226.5 30.5 L226.0 29.3 L225.5 29.3 L225.0 30.9 L224.5 33.0 L224.0 35.4 L223.5 32.7 L223.0 30.6 L222.5 29.2 L222.0 29.0 L221.5 29.0 L221.0 30.0 L220.5 31.5 L220.0 33.5 L219.5 35.8 L219.0 37.0 L218.5 34.5 L218.0 32.4 L217.5 30.6 L217.0 29.4 L216.5 29.6 L216.0 31.3 L215.5 33.7 L215.0 35.5 L214.5 32.7 L214.0 30.6 L213.5 29.1 L213.0 28.8 L212.5 29.1 L212.0 30.4 L211.5 32.3 L211.0 34.6 L210.5 37.4 L210.0 38.3 L209.5 35.4 L209.0 32.9 L208.5 30.9 L208.0 29.4 L207.5 28.7 L207.0 29.2 L206.5 30.2 L206.0 31.5 L205.5 32.1 L205.0 30.7 L204.5 29.5 L204.0 28.8 L203.5 29.2 L203.0 30.6 L202.5 32.5 L202.0 34.9 L201.5 37.8 L201.0 38.2 L200.5 35.2 L200.0 32.8 L199.5 30.8 L199.0 29.4 L198.5 29.0 L198.0 29.2 L197.5 30.5 L197.0 32.2 L196.5 33.8 L196.0 31.7 L195.5 30.1 L195.0 29.0 L194.5 29.3 L194.0 30.6 L193.5 32.4 L193.0 34.7 L192.5 37.5 L192.0 37.3 L191.5 34.6 L191.0 32.3 L190.5 30.5 L190.0 29.2 L189.5 29.8 L189.0 31.4 L188.5 33.6 L188.0 33.9 L187.5 31.6 L187.0 29.9 L186.5 28.9 L186.0 28.6 L185.5 29.2 L185.0 30.3 L184.5 31.7 L184.0 33.6 L183.5 35.7 L183.0 35.3 L182.5 33.2 L182.0 31.4 L181.5 30.0 L181.0 29.0 L180.5 29.6 L180.0 31.2 L179.5 33.3 L179.0 33.9 L178.5 31.6 L178.0 29.9 L177.5 28.9 L177.0 28.8 L176.5 29.5 L176.0 31.1 L175.5 33.3 L175.0 36.0 L174.5 39.1 L174.0 37.9 L173.5 35.0 L173.0 32.5 L172.5 30.5 L172.0 29.1 L171.5 29.1 L171.0 28.8 L170.5 30.1 L170.0 32.0 L169.5 34.6 L169.0 34.5 L168.5 31.9 L168.0 30.0 L167.5 29.8 L167.0 31.5 L166.5 34.0 L166.0 36.9 L165.5 40.5 L165.0 38.6 L164.5 35.3 L164.0 32.6 L163.5 30.5 L163.0 29.1 L162.5 29.2 L162.0 30.4 L161.5 32.2 L161.0 34.6 L160.5 32.3 L160.0 30.5 L159.5 29.2 L159.0 28.8 L158.5 29.9 L158.0 31.7 L157.5 34.2 L157.0 37.2 L156.5 40.7 L156.0 38.3 L155.5 35.1 L155.0 32.4 L154.5 30.4 L154.0 29.0 L153.5 29.3 L153.0 31.0 L152.5 33.3 L152.0 36.3 L151.5 33.5 L151.0 31.1 L150.5 29.4 L150.0 28.8 L149.5 29.9 L149.0 31.6 L148.5 34.0 L148.0 36.8 L147.5 40.1 L147.0 37.3 L146.5 34.4 L146.0 32.0 L145.5 30.1 L145.0 28.9 L144.5 28.8 L144.0 29.7 L143.5 31.0 L143.0 32.7 L142.5 32.0 L142.0 30.4 L141.5 29.3 L141.0 28.9 L140.5 29.9 L140.0 31.6 L139.5 33.7 L139.0 36.4 L138.5 39.5 L138.0 36.4 L137.5 33.7 L137.0 31.6 L136.5 29.9 L136.0 29.1 L135.5 28.8 L135.0 28.9 L134.5 29.8 L134.0 31.0 L133.5 32.5 L133.0 31.2 L132.5 30.0 L132.0 29.0 L131.5 29.9 L131.0 31.6 L130.5 33.7 L130.0 36.2 L129.5 38.7 L129.0 35.8 L128.5 33.3 L128.0 31.3 L127.5 29.7 L127.0 28.8 L126.5 29.5 L126.0 31.2 L125.5 33.5 L125.0 35.6 L124.5 32.8 L124.0 30.6 L123.5 29.1 L123.0 28.9 L122.5 30.0 L122.0 31.6 L121.5 33.7 L121.0 36.2 L120.5 38.2 L120.0 35.4 L119.5 33.0 L119.0 31.1 L118.5 29.6 L118.0 28.7 L117.5 29.7 L117.0 31.4 L116.5 33.8 L116.0 34.8 L115.5 32.2 L115.0 30.2 L114.5 29.0 L114.0 29.0 L113.5 29.9 L113.0 31.3 L112.5 33.2 L112.0 35.4 L111.5 36.7 L111.0 34.3 L110.5 32.3 L110.0 30.6 L109.5 29.4 L109.0 29.1 L108.5 28.7 L108.0 29.2 L107.5 30.4 L107.0 32.0 L106.5 33.3 L106.0 31.4 L105.5 29.9 L105.0 29.1 L104.5 30.4 L104.0 32.2 L103.5 34.5 L103.0 37.3 L102.5 38.4 L102.0 35.5 L101.5 33.0 L101.0 31.0 L100.5 29.5 L100.0 29.0 L99.5 30.2 L99.0 32.3 L98.5 35.1 L98.0 34.7 L97.5 32.0 L97.0 30.0 L96.5 28.8 L96.0 29.1 L95.5 30.2 L95.0 31.8 L94.5 33.9 L94.0 36.3 L93.5 36.9 L93.0 34.4 L92.5 32.2 L92.0 30.5 L91.5 29.3 L91.0 29.7 L90.5 31.2 L90.0 33.2 L89.5 33.3 L89.0 31.2 L88.5 29.7 L88.0 28.8 L87.5 28.7 L87.0 29.3 L86.5 30.7 L86.0 32.8 L85.5 35.3 L85.0 38.3 L84.5 38.5 L84.0 35.4 L83.5 32.9 L83.0 30.8 L82.5 29.3 L82.0 29.3 L81.5 30.4 L81.0 31.9 L80.5 32.3 L80.0 30.8 L79.5 29.6 L79.0 29.0 L78.5 28.8 L78.0 29.5 L77.5 31.2 L77.0 33.5 L76.5 36.4 L76.0 39.9 L75.5 39.4 L75.0 36.0 L74.5 33.2 L74.0 30.9 L73.5 29.3 L73.0 29.7 L72.5 31.3 L72.0 33.5 L71.5 34.0 L71.0 31.7 L70.5 29.9 L70.0 28.8 L69.5 28.6 L69.0 29.2 L68.5 30.3 L68.0 31.7 L67.5 33.5 L67.0 35.7 L66.5 35.0 L66.0 33.0 L65.5 31.3 L65.0 29.9 L64.5 29.1 L64.0 28.9 L63.5 29.1 L63.0 30.2 L62.5 31.7 L62.0 33.4 L61.5 31.5 L61.0 30.1 L60.5 29.0 L60.0 29.4 L59.5 30.6 L59.0 32.3 L58.5 34.4 L58.0 36.9 L57.5 35.7 L57.0 33.4 L56.5 31.5 L56.0 30.0 L55.5 29.0 L55.0 29.0 L54.5 28.8 L54.0 29.7 L53.5 31.0 L53.0 32.8 L52.5 32.3 L52.0 30.6 L51.5 29.4 L51.0 29.5 L50.5 31.0 L50.0 32.9 L49.5 35.2 L49.0 38.0 L48.5 36.3 L48.0 33.8 L47.5 31.7 L47.0 30.1 L46.5 29.0 L46.0 29.3 L45.5 31.0 L45.0 33.4 L44.5 36.6 L44.0 33.8 L43.5 31.2 L43.0 29.5 L42.5 28.7 L42.0 29.4 L41.5 30.6 L41.0 32.1 L40.5 34.0 L40.0 36.2 L39.5 34.5 L39.0 32.6 L38.5 30.9 L38.0 29.7 L37.5 28.8 L37.0 28.7 L36.5 29.8 L36.0 31.7 L35.5 34.4 L35.0 35.9 L34.5 32.9 L34.0 30.6 L33.5 29.1 L33.0 29.9 L32.5 31.7 L32.0 33.9 L31.5 36.7 L31.0 40.0 L30.5 37.0 L30.0 34.2 L29.5 31.8 L29.0 30.0 L28.5 28.9 L28.0 29.1 L27.5 30.6 L27.0 32.7 L26.5 35.5 L26.0 33.5 L25.5 31.2 L25.0 29.5 L24.5 28.9 L24.0 30.1 L23.5 32.0 L23.0 34.4 L22.5 37.4 L22.0 40.6 L21.5 37.2 L21.0 34.2 L20.5 31.8 L20.0 30.0 L19.5 28.9 L19.0 29.9 L18.5 31.8 L18.0 34.4 L17.5 34.7 L17.0 32.1 L16.5 30.1 L16.0 29.1 L15.5 28.9 L15.0 30.0 L14.5 31.6 L14.0 33.7 L13.5 36.2 L13.0 38.4 L12.5 35.5 L12.0 33.1 L11.5 31.1 L11.0 29.7 L10.5 29.3 L10.0 30.9 L9.5 33.1 L9.0 36.0 L8.5 33.1 L8.0 30.9 L7.5 29.3 L7.0 29.0 L6.5 28.9 L6.0 29.8 L5.5 31.2 L5.0 33.0 L4.5 35.1 L4.0 36.6 L3.5 34.2 L3.0 32.2 L2.5 30.6 L2.0 29.4 L1.5 28.7 L1.0 28.5 L0.5 28.9 L0.0 28.6Z" fill="#1f0d25"/><path d="M0.0 52.6 L0.5 52.7 L1.0 52.8 L1.5 52.6 L2.0 51.8 L2.5 50.1 L3.0 47.7 L3.5 44.9 L4.0 41.5 L4.5 43.6 L5.0 46.6 L5.5 49.2 L6.0 51.2 L6.5 52.6 L7.0 52.6 L7.5 52.7 L8.0 52.0 L8.5 50.9 L9.0 49.4 L9.5 50.2 L10.0 51.5 L10.5 52.5 L11.0 51.8 L11.5 50.2 L12.0 48.0 L12.5 45.3 L13.0 42.2 L13.5 44.6 L14.0 47.4 L14.5 49.7 L15.0 51.5 L15.5 52.6 L16.0 52.8 L16.5 52.0 L17.0 50.7 L17.5 48.9 L18.0 49.0 L18.5 50.7 L19.0 52.1 L19.5 52.8 L20.0 51.8 L20.5 50.2 L21.0 48.2 L21.5 45.7 L22.0 42.7 L22.5 45.4 L23.0 48.0 L23.5 50.1 L24.0 51.7 L24.5 52.6 L25.0 51.5 L25.5 49.9 L26.0 47.8 L26.5 49.2 L27.0 51.0 L27.5 52.3 L28.0 52.6 L28.5 52.7 L29.0 51.5 L29.5 49.5 L30.0 47.0 L30.5 43.9 L31.0 40.7 L31.5 44.2 L32.0 47.2 L32.5 49.7 L33.0 51.6 L33.5 52.6 L34.0 52.8 L34.5 52.4 L35.0 51.1 L35.5 49.2 L36.0 46.9 L36.5 49.2 L37.0 51.1 L37.5 52.4 L38.0 52.0 L38.5 50.7 L39.0 49.2 L39.5 47.3 L40.0 45.6 L40.5 47.7 L41.0 49.6 L41.5 51.1 L42.0 52.2 L42.5 52.2 L43.0 50.8 L43.5 48.8 L44.0 47.9 L44.5 50.0 L45.0 51.6 L45.5 52.7 L46.0 53.1 L46.5 52.6 L47.0 51.3 L47.5 49.3 L48.0 46.8 L48.5 43.8 L49.0 41.8 L49.5 45.1 L50.0 47.9 L50.5 50.2 L51.0 51.9 L51.5 52.6 L52.0 52.2 L52.5 50.8 L53.0 48.8 L53.5 47.3 L54.0 49.6 L54.5 51.4 L55.0 52.6 L55.5 52.5 L56.0 51.6 L56.5 50.1 L57.0 48.1 L57.5 45.8 L58.0 44.6 L58.5 47.1 L59.0 49.2 L59.5 51.0 L60.0 52.2 L60.5 52.2 L61.0 50.8 L61.5 48.9 L62.0 47.5 L62.5 49.7 L63.0 51.4 L63.5 52.6 L64.0 52.7 L64.5 52.6 L65.0 51.6 L65.5 50.2 L66.0 48.3 L66.5 46.2 L67.0 45.5 L67.5 47.8 L68.0 49.7 L68.5 51.2 L69.0 52.4 L69.5 52.9 L70.0 52.8 L70.5 51.7 L71.0 49.8 L71.5 47.4 L72.0 47.1 L72.5 49.6 L73.0 51.6 L73.5 52.4 L74.0 51.0 L74.5 49.0 L75.0 46.5 L75.5 43.5 L76.0 43.2 L76.5 46.2 L77.0 48.7 L77.5 50.8 L78.0 52.2 L78.5 52.6 L79.0 52.7 L79.5 51.7 L80.0 50.1 L80.5 48.2 L81.0 49.3 L81.5 51.1 L82.0 52.3 L82.5 52.5 L83.0 51.4 L83.5 49.9 L84.0 48.1 L84.5 45.9 L85.0 46.0 L85.5 48.2 L86.0 50.0 L86.5 51.5 L87.0 52.5 L87.5 53.0 L88.0 52.4 L88.5 51.0 L89.0 48.9 L89.5 46.3 L90.0 48.7 L90.5 50.8 L91.0 52.3 L91.5 52.3 L92.0 51.0 L92.5 49.2 L93.0 46.9 L93.5 44.2 L94.0 44.8 L94.5 47.4 L95.0 49.6 L95.5 51.3 L96.0 52.5 L96.5 52.8 L97.0 52.7 L97.5 51.7 L98.0 50.1 L98.5 48.0 L99.0 48.5 L99.5 50.5 L100.0 52.0 L100.5 52.0 L101.0 50.4 L101.5 48.2 L102.0 45.5 L102.5 42.2 L103.0 43.4 L103.5 46.5 L104.0 49.1 L104.5 51.1 L105.0 52.4 L105.5 52.9 L106.0 52.5 L106.5 51.6 L107.0 49.9 L107.5 47.8 L108.0 49.0 L108.5 50.8 L109.0 52.2 L109.5 52.0 L110.0 50.4 L110.5 48.3 L111.0 45.7 L111.5 42.7 L112.0 44.3 L112.5 47.1 L113.0 49.5 L113.5 51.3 L114.0 52.6 L114.5 52.7 L115.0 51.7 L115.5 50.4 L116.0 48.6 L116.5 49.8 L117.0 51.3 L117.5 52.4 L118.0 52.8 L118.5 52.2 L119.0 51.0 L119.5 49.4 L120.0 47.4 L120.5 45.1 L121.0 46.7 L121.5 48.8 L122.0 50.5 L122.5 51.8 L123.0 52.7 L123.5 53.2 L124.0 52.6 L124.5 51.6 L125.0 50.1 L125.5 48.3 L126.0 49.8 L126.5 51.4 L127.0 52.5 L127.5 51.7 L128.0 49.8 L128.5 47.4 L129.0 44.5 L129.5 41.0 L130.0 43.9 L130.5 47.0 L131.0 49.5 L131.5 51.4 L132.0 52.7 L132.5 52.7 L133.0 51.9 L133.5 50.4 L134.0 48.3 L134.5 48.2 L135.0 50.3 L135.5 51.8 L136.0 52.5 L136.5 51.8 L137.0 50.2 L137.5 48.1 L138.0 45.5 L138.5 42.6 L139.0 45.5 L139.5 48.1 L140.0 50.2 L140.5 51.8 L141.0 52.6 L141.5 52.1 L142.0 50.9 L142.5 49.3 L143.0 49.3 L143.5 50.9 L144.0 52.1 L144.5 52.9 L145.0 52.7 L145.5 51.6 L146.0 50.0 L146.5 47.8 L147.0 45.2 L147.5 42.6 L148.0 45.6 L148.5 48.2 L149.0 50.3 L149.5 51.8 L150.0 52.1 L150.5 50.5 L151.0 48.1 L151.5 46.1 L152.0 48.8 L152.5 51.0 L153.0 52.5 L153.5 53.1 L154.0 52.7 L154.5 51.8 L155.0 50.5 L155.5 48.7 L156.0 46.6 L156.5 44.9 L157.0 47.3 L157.5 49.3 L158.0 50.9 L158.5 52.2 L159.0 52.6 L159.5 52.8 L160.0 52.1 L160.5 51.1 L161.0 49.6 L161.5 50.0 L162.0 51.3 L162.5 52.3 L163.0 52.6 L163.5 51.7 L164.0 50.3 L164.5 48.5 L165.0 46.3 L165.5 45.0 L166.0 47.4 L166.5 49.4 L167.0 51.0 L167.5 52.2 L168.0 52.9 L168.5 52.6 L169.0 52.3 L169.5 51.3 L170.0 49.8 L170.5 49.4 L171.0 50.9 L171.5 52.1 L172.0 52.6 L172.5 51.6 L173.0 50.1 L173.5 48.2 L174.0 46.0 L174.5 45.1 L175.0 47.5 L175.5 49.5 L176.0 51.1 L176.5 52.3 L177.0 52.2 L177.5 50.5 L178.0 48.2 L178.5 45.6 L179.0 48.5 L179.5 50.8 L180.0 52.3 L180.5 52.5 L181.0 52.6 L181.5 51.7 L182.0 50.3 L182.5 48.7 L183.0 46.7 L183.5 46.2 L184.0 48.3 L184.5 50.0 L185.0 51.4 L185.5 52.4 L186.0 52.5 L186.5 51.9 L187.0 50.6 L187.5 48.9 L188.0 49.9 L188.5 51.3 L189.0 52.4 L189.5 52.6 L190.0 52.3 L190.5 50.7 L191.0 48.6 L191.5 45.8 L192.0 42.6 L192.5 42.5 L193.0 45.7 L193.5 48.5 L194.0 50.6 L194.5 52.2 L195.0 51.4 L195.5 49.5 L196.0 47.0 L196.5 47.9 L197.0 50.2 L197.5 51.9 L198.0 52.9 L198.5 52.6 L199.0 52.2 L199.5 50.7 L200.0 48.6 L200.5 46.0 L201.0 42.9 L201.5 43.3 L202.0 46.4 L202.5 48.9 L203.0 50.9 L203.5 52.3 L204.0 52.2 L204.5 51.1 L205.0 49.5 L205.5 49.2 L206.0 50.8 L206.5 52.1 L207.0 52.8 L207.5 53.0 L208.0 52.4 L208.5 51.4 L209.0 50.0 L209.5 48.2 L210.0 46.1 L210.5 46.7 L211.0 48.7 L211.5 50.4 L212.0 51.7 L212.5 52.6 L213.0 53.2 L213.5 52.9 L214.0 52.2 L214.5 51.0 L215.0 49.5 L215.5 49.5 L216.0 51.0 L216.5 52.2 L217.0 52.1 L217.5 50.6 L218.0 48.7 L218.5 46.2 L219.0 43.3 L219.5 44.6 L220.0 47.3 L220.5 49.6 L221.0 51.3 L221.5 52.5 L222.0 53.0 L222.5 52.5 L223.0 51.5 L223.5 50.1 L224.0 49.1 L224.5 50.7 L225.0 51.9 L225.5 52.6 L226.0 52.1 L226.5 50.7 L227.0 48.8 L227.5 46.5 L228.0 43.8 L228.5 45.5 L229.0 48.0 L229.5 50.0 L230.0 51.6 L230.5 52.6 L231.0 52.8 L231.5 52.1 L232.0 50.5 L232.5 48.2 L233.0 46.6 L233.5 49.2 L234.0 51.2 L234.5 52.5 L235.0 51.8 L235.5 50.0 L236.0 47.7 L236.5 44.9 L237.0 41.6 L237.5 44.2 L238.0 47.1 L238.5 49.5 L239.0 51.4 L239.5 52.6 L240.0 52.9 L240.5 52.0 L241.0 50.5 L241.5 48.5 L242.0 48.2 L242.5 50.3 L243.0 51.8 L243.5 52.8 L244.0 52.0 L244.5 50.6 L245.0 48.8 L245.5 46.6 L246.0 44.0 L246.5 46.4 L247.0 48.6 L247.5 50.5 L248.0 51.9 L248.5 52.5 L249.0 51.3 L249.5 49.6 L250.0 47.4 L250.5 49.4 L251.0 51.2 L251.5 52.4 L252.0 52.7 L252.5 52.7 L253.0 51.7 L253.5 50.1 L254.0 48.0 L254.5 45.4 L255.0 42.7 L255.5 45.6 L256.0 48.2 L256.5 50.2 L257.0 51.8 L257.5 52.8 L258.0 52.1 L258.5 50.6 L259.0 48.6 L259.5 47.8 L260.0 50.0 L260.5 51.6 L261.0 52.6 L261.5 52.6 L262.0 51.8 L262.5 50.4 L263.0 48.6 L263.5 46.4 L264.0 44.5 L264.5 47.0 L265.0 49.1 L265.5 50.8 L266.0 52.1 L266.5 52.8 L267.0 52.6 L267.5 51.4 L268.0 49.8 L268.5 47.6 L269.0 49.4 L269.5 51.1 L270.0 52.4 L270.5 52.6 L271.0 51.8 L271.5 50.5 L272.0 48.8 L272.5 46.7 L273.0 45.3 L273.5 47.6 L274.0 49.5 L274.5 51.1 L275.0 52.2 L275.5 52.4 L276.0 51.5 L276.5 50.2 L277.0 49.6 L277.5 51.0 L278.0 52.1 L278.5 52.8 L279.0 53.0 L279.5 52.5 L280.0 51.3 L280.5 49.6 L281.0 47.3 L281.5 44.6 L282.0 43.2 L282.5 46.1 L283.0 48.6 L283.5 50.6 L284.0 52.1 L284.5 52.5 L285.0 51.8 L285.5 49.9 L286.0 47.2 L286.5 45.9 L287.0 48.9 L287.5 51.1 L288.0 52.6 L288.5 52.5 L289.0 51.5 L289.5 50.1 L290.0 48.2 L290.5 46.0 L291.0 45.3 L291.5 47.6 L292.0 49.6 L292.5 51.2 L293.0 52.3 L293.5 52.6 L294.0 52.1 L294.5 50.8 L295.0 49.1 L295.5 49.2 L296.0 50.9 L296.5 52.1 L297.0 52.6 L297.5 52.3 L298.0 50.9 L298.5 48.9 L299.0 46.4 L299.5 43.4 L300.0 43.0 L300.5 46.1 L301.0 48.7 L301.5 50.7 L302.0 52.2 L302.5 52.9 L303.0 52.6 L303.5 51.5 L304.0 50.1 L304.5 48.2 L305.0 50.0 L305.5 51.5 L306.0 52.5 L306.5 52.5 L307.0 51.6 L307.5 50.2 L308.0 48.5 L308.5 46.5 L309.0 46.6 L309.5 48.6 L310.0 50.3 L310.5 51.6 L311.0 52.5 L311.5 51.7 L312.0 50.2 L312.5 48.2 L313.0 49.0 L313.5 50.8 L314.0 52.2 L314.5 52.9 L315.0 52.9 L315.5 52.4 L316.0 51.2 L316.5 49.6 L317.0 47.7 L317.5 45.3 L318.0 45.8 L318.5 48.1 L319.0 50.0 L319.5 51.5 L320.0 52.5 L320.5 52.0 L321.0 50.8 L321.5 49.2 L322.0 49.6 L322.5 51.1 L323.0 52.2 L323.5 52.7 L324.0 52.6 L324.5 52.2 L325.0 50.8 L325.5 48.9 L326.0 46.6 L326.5 43.9 L327.0 44.9 L327.5 47.5 L328.0 49.7 L328.5 51.4 L329.0 52.5 L329.5 52.7 L330.0 51.7 L330.5 50.2 L331.0 48.3 L331.5 49.5 L332.0 51.2 L332.5 52.3 L333.0 52.8 L333.5 51.9 L334.0 50.2 L334.5 48.0 L335.0 45.1 L335.5 41.8 L336.0 43.6 L336.5 46.7 L337.0 49.2 L337.5 51.2 L338.0 52.5 L338.5 52.5 L339.0 52.7 L339.5 51.4 L340.0 49.5 L340.5 47.0 L341.0 48.0 L341.5 50.3 L342.0 52.0 L342.5 52.0 L343.0 50.5 L343.5 48.5 L344.0 46.0 L344.5 43.1 L345.0 45.1 L345.5 47.7 L346.0 49.9 L346.5 51.5 L347.0 52.5 L347.5 51.3 L348.0 49.7 L348.5 47.5 L349.0 49.5 L349.5 51.2 L350.0 52.4 L350.5 52.7 L351.0 52.7 L351.5 52.1 L352.0 50.9 L352.5 49.4 L353.0 47.5 L353.5 45.2 L354.0 47.1 L354.5 49.1 L355.0 50.7 L355.5 52.0 L356.0 52.8 L356.5 53.0 L357.0 52.3 L357.5 51.0 L358.0 49.3 L358.5 48.2 L359.0 50.1 L359.5 51.7 L360.0 52.7 L360.5 51.7 L361.0 50.1 L361.5 48.0 L362.0 45.4 L362.5 42.4 L363.0 45.4 L363.5 48.0 L364.0 50.1 L364.5 51.7 L365.0 52.7 L365.5 51.4 L366.0 49.3 L366.5 46.4 L367.0 46.7 L367.5 49.5 L368.0 51.6 L368.5 52.6 L369.0 52.7 L369.5 51.6 L370.0 49.9 L370.5 47.6 L371.0 44.9 L371.5 42.3 L372.0 45.4 L372.5 48.0 L373.0 50.2 L373.5 51.8 L374.0 52.5 L374.5 51.3 L375.0 49.7 L375.5 48.1 L376.0 50.0 L376.5 51.5 L377.0 52.6 L377.5 53.0 L378.0 52.7 L378.5 51.9 L379.0 50.7 L379.5 49.1 L380.0 47.3 L380.5 45.8 L381.0 47.9 L381.5 49.7 L382.0 51.2 L382.5 52.2 L383.0 52.5 L383.5 52.2 L384.0 50.8 L384.5 49.0 L385.0 48.2 L385.5 50.2 L386.0 51.7 L386.5 52.6 L387.0 52.6 L387.5 51.4 L388.0 49.7 L388.5 47.5 L389.0 44.8 L389.5 43.3 L390.0 46.2 L390.5 48.6 L391.0 50.6 L391.5 52.1 L392.0 52.3 L392.5 51.0 L393.0 49.4 L393.5 48.6 L394.0 50.4 L394.5 51.8 L395.0 52.6 L395.5 52.7 L396.0 52.6 L396.5 51.7 L397.0 50.4 L397.5 48.7 L398.0 46.7 L398.5 45.9 L399.0 48.0 L399.5 49.8 L400.0 51.3 L400.5 52.4 L401.0 52.9 L401.5 52.6 L402.0 51.9 L402.5 50.6 L403.0 48.9 L403.5 49.8 L404.0 51.3 L404.5 52.4 L405.0 52.5 L405.5 51.3 L406.0 49.6 L406.5 47.5 L407.0 44.9 L407.5 44.3 L408.0 47.0 L408.5 49.2 L409.0 51.0 L409.5 52.3 L410.0 53.0 L410.5 52.6 L411.0 51.5 L411.5 50.0 L412.0 47.9 L412.5 49.3 L413.0 51.1 L413.5 52.3 L414.0 52.5 L414.5 51.5 L415.0 50.1 L415.5 48.4 L416.0 46.3 L416.5 46.2 L417.0 48.3 L417.5 50.1 L418.0 51.5 L418.5 52.5 L419.0 52.5 L419.5 52.7 L420.0 51.5 L420.5 49.7 L421.0 47.3 L421.5 48.2 L422.0 50.4 L422.5 52.0 L423.0 52.5 L423.5 51.5 L424.0 50.1 L424.5 48.4 L425.0 46.4 L425.5 46.6 L426.0 48.6 L426.5 50.3 L427.0 51.6 L427.5 52.6 L428.0 52.9 L428.5 52.1 L429.0 50.4 L429.5 48.1 L430.0 46.5 L430.5 49.1 L431.0 51.2 L431.5 52.6 L432.0 52.3 L432.5 51.0 L433.0 49.3 L433.5 47.2 L434.0 44.7 L434.5 45.4 L435.0 47.8 L435.5 49.9 L436.0 51.4 L436.5 52.5 L437.0 52.5 L437.5 51.2 L438.0 49.1 L438.5 46.4 L439.0 48.0 L439.5 50.3 L440.0 52.0 L440.5 52.9 L441.0 52.2 L441.5 50.8 L442.0 48.9 L442.5 46.6 L443.0 43.9 L443.5 45.2 L444.0 47.7 L444.5 49.8 L445.0 51.5 L445.5 52.6 L446.0 52.8 L446.5 52.7 L447.0 51.4 L447.5 49.3 L448.0 46.7 L448.5 47.7 L449.0 50.1 L449.5 51.9 L450.0 52.1 L450.5 50.9 L451.0 49.2 L451.5 47.0 L452.0 44.6 L452.5 46.1 L453.0 48.4 L453.5 50.2 L454.0 51.7 L454.5 52.7 L455.0 51.9 L455.5 50.4 L456.0 48.3 L456.5 48.3 L457.0 50.3 L457.5 51.9 L458.0 52.7 L458.5 52.8 L459.0 51.9 L459.5 50.3 L460.0 48.1 L460.5 45.5 L461.0 42.5 L461.5 44.9 L462.0 47.6 L462.5 49.8 L463.0 51.5 L463.5 52.7 L464.0 52.7 L464.5 52.5 L465.0 51.2 L465.5 49.3 L466.0 46.9 L466.5 48.9 L467.0 50.9 L467.5 52.3 L468.0 51.9 L468.5 50.5 L469.0 48.7 L469.5 46.5 L470.0 43.8 L470.5 46.3 L471.0 48.5 L471.5 50.4 L472.0 51.8 L472.5 52.8 L473.0 52.8 L473.5 52.7 L474.0 51.9 L474.5 50.6 L475.0 49.0 L475.5 50.0 L476.0 51.4 L476.5 52.4 L477.0 52.0 L477.5 50.8 L478.0 49.2 L478.5 47.2 L479.0 45.2 L479.5 47.4 L480.0 49.3 L480.5 50.9 L481.0 52.1 L481.5 52.8 L482.0 53.0 L482.5 52.1 L483.0 50.2 L483.5 47.7 L484.0 45.4 L484.5 48.4 L485.0 50.8 L485.5 52.4 L486.0 51.8 L486.5 50.4 L487.0 48.5 L487.5 46.3 L488.0 44.3 L488.5 46.9 L489.0 49.0 L489.5 50.8 L490.0 52.1 L490.5 52.6 L491.0 51.3 L491.5 49.3 L492.0 46.9 L492.5 48.4 L493.0 50.6 L493.5 52.1 L494.0 52.9 L494.5 52.6 L495.0 51.5 L495.5 49.9 L496.0 47.8 L496.5 45.2 L497.0 43.5 L497.5 46.3 L498.0 48.7 L498.5 50.6 L499.0 52.0 L499.5 52.2 L500.0 50.8 L500.5 48.9 L501.0 47.3 L501.5 49.6 L502.0 51.4 L502.5 52.6 L503.0 53.1 L503.5 52.7 L504.0 51.8 L504.5 50.4 L505.0 48.7 L505.5 46.7 L506.0 45.7 L506.5 47.9 L507.0 49.7 L507.5 51.2 L508.0 52.3 L508.5 52.9 L509.0 52.0 L509.5 50.4 L510.0 48.1 L510.5 46.9 L511.0 49.4 L511.5 51.4 L512.0 52.6 L512.5 52.5 L513.0 51.4 L513.5 49.7 L514.0 47.6 L514.5 45.0 L515.0 44.2 L515.5 46.9 L516.0 49.1 L516.5 50.9 L517.0 52.2 L517.5 53.0 L518.0 52.6 L518.5 51.4 L519.0 49.8 L519.5 47.7 L520.0 49.4 L520.5 51.2 L521.0 52.4 L521.5 52.4 L522.0 51.1 L522.5 49.3 L523.0 47.0 L523.5 44.3 L524.0 44.0 L524.5 46.7 L525.0 49.1 L525.5 50.9 L526.0 52.3 L526.5 52.1 L527.0 50.7 L527.5 48.8 L528.0 48.1 L528.5 50.1 L529.0 51.7 L529.5 52.7 L530.0 52.6 L530.5 52.2 L531.0 50.7 L531.5 48.6 L532.0 45.9 L532.5 42.8 L533.0 42.9 L533.5 46.0 L534.0 48.7 L534.5 50.8 L535.0 52.3 L535.5 52.1 L536.0 50.6 L536.5 48.6 L537.0 47.8 L537.5 50.0 L538.0 51.6 L538.5 52.7 L539.0 53.0 L539.5 52.2 L540.0 50.7 L540.5 48.7 L541.0 46.2 L541.5 43.3 L542.0 43.9 L542.5 46.8 L543.0 49.2 L543.5 51.1 L544.0 52.4 L544.5 53.0 L545.0 52.7 L545.5 51.6 L546.0 49.7 L546.5 47.3 L547.0 47.8 L547.5 50.1 L548.0 51.8 L548.5 52.3 L549.0 51.0 L549.5 49.3 L550.0 47.2 L550.5 44.7 L551.0 45.7 L551.5 48.0 L552.0 50.0 L552.5 51.5 L553.0 52.6 L553.5 52.6 L554.0 52.2 L554.5 50.7 L555.0 48.6 L555.5 46.7 L556.0 49.2 L556.5 51.2 L557.0 52.5 L557.5 52.2 L558.0 51.0 L558.5 49.4 L559.0 47.4 L559.5 45.0 L560.0 46.3 L560.5 48.5 L561.0 50.3 L561.5 51.7 L562.0 52.7 L562.5 52.6 L563.0 51.9 L563.5 50.5 L564.0 48.6 L564.5 48.6 L565.0 50.5 L565.5 52.0 L566.0 52.8 L566.5 51.9 L567.0 50.4 L567.5 48.3 L568.0 45.8 L568.5 42.8 L569.0 44.9 L569.5 47.6 L570.0 49.8 L570.5 51.5 L571.0 52.4 L571.5 51.1 L572.0 49.3 L572.5 47.3 L573.0 49.6 L573.5 51.3 L574.0 52.5 L574.5 52.8 L575.0 52.6 L575.5 51.8 L576.0 50.2 L576.5 48.1 L577.0 45.5 L577.5 42.5 L578.0 45.1 L578.5 47.7 L579.0 49.9 L579.5 51.6 L580.0 52.7 L580.5 53.0 L581.0 52.5 L581.5 51.6 L582.0 50.4 L582.5 49.5 L583.0 50.9 L583.5 52.0 L584.0 52.7 L584.5 51.7 L585.0 50.1 L585.5 48.0 L586.0 45.5 L586.5 42.5 L587.0 45.5 L587.5 48.0 L588.0 50.1 L588.5 51.7 L589.0 52.6 L589.5 52.7 L590.0 52.2 L590.5 50.5 L591.0 48.1 L591.5 45.6 L592.0 48.5 L592.5 50.8 L593.0 52.4 L593.5 51.5 L594.0 49.8 L594.5 47.4 L595.0 44.6 L595.5 41.9 L596.0 45.1 L596.5 47.9 L597.0 50.1 L597.5 51.8 L598.0 52.5 L598.5 51.1 L599.0 49.1 L599.5 46.5 L600.0 48.3 L600.5 50.5 L601.0 52.1 L601.5 52.9 L602.0 52.6 L602.5 51.4 L603.0 49.5 L603.5 47.1 L604.0 44.3 L604.5 42.0 L605.0 45.2 L605.5 48.0 L606.0 50.2 L606.5 51.9 L607.0 52.3 L607.5 50.9 L608.0 48.9 L608.5 46.8 L609.0 49.2 L609.5 51.1 L610.0 52.5 L610.5 52.8 L611.0 52.6 L611.5 51.4 L612.0 49.7 L612.5 47.6 L613.0 44.9 L613.5 43.4 L614.0 46.2 L614.5 48.7 L615.0 50.6 L615.5 52.1 L616.0 52.8 L616.5 52.3 L617.0 51.1 L617.5 49.5 L618.0 49.0 L618.5 50.7 L619.0 52.0 L619.5 52.8 L620.0 52.7 L620.5 51.8 L621.0 50.5 L621.5 48.9 L622.0 47.0 L622.5 46.2 L623.0 48.2 L623.5 50.0 L624.0 51.4 L624.5 52.4 L625.0 52.9 L625.5 51.8 L626.0 49.9 L626.5 47.4 L627.0 46.8 L627.5 49.4 L628.0 51.4 L628.5 52.7 L629.0 52.5 L629.5 51.3 L630.0 49.6 L630.5 47.4 L631.0 44.8 L631.5 44.2 L632.0 46.9 L632.5 49.2 L633.0 51.0 L633.5 52.3 L634.0 52.8 L634.5 52.5 L635.0 51.4 L635.5 49.8 L636.0 47.8 L636.5 49.8 L637.0 51.4 L637.5 52.5 L638.0 52.5 L638.5 51.6 L639.0 50.2 L639.5 48.5 L640.0 46.5 L640.5 46.4 L641.0 48.5 L641.5 50.2 L642.0 51.5 L642.5 52.5 L643.0 51.6 L643.5 49.8 L644.0 47.3 L644.5 47.5 L645.0 49.9 L645.5 51.7 L646.0 52.6 L646.5 52.9 L647.0 52.2 L647.5 50.7 L648.0 48.7 L648.5 46.1 L649.0 43.1 L649.5 43.5 L650.0 46.4 L650.5 49.0 L651.0 50.9 L651.5 52.3 L652.0 52.5 L652.5 51.2 L653.0 49.3 L653.5 46.8 L654.0 48.5 L654.5 50.6 L655.0 52.2 L655.5 52.7 L656.0 52.4 L656.5 51.3 L657.0 49.8 L657.5 47.9 L658.0 45.7 L658.5 46.3 L659.0 48.5 L659.5 50.2 L660.0 51.6 L660.5 52.6 L661.0 52.0 L661.5 50.6 L662.0 48.7 L662.5 48.7 L663.0 50.5 L663.5 52.0 L664.0 52.8 L664.5 52.8 L665.0 52.4 L665.5 51.3 L666.0 49.9 L666.5 48.1 L667.0 46.1 L667.5 47.0 L668.0 49.0 L668.5 50.6 L669.0 51.8 L669.5 52.5 L670.0 52.7 L670.5 51.3 L671.0 49.1 L671.5 46.3 L672.0 47.0 L672.5 49.7 L673.0 51.7 L673.5 52.7 L674.0 52.1 L674.5 50.8 L675.0 49.0 L675.5 46.8 L676.0 44.2 L676.5 45.8 L677.0 48.1 L677.5 50.1 L678.0 51.6 L678.5 52.7 L679.0 52.3 L679.5 50.7 L680.0 48.4 L680.5 45.5 L681.0 48.3 L681.5 50.6 L682.0 52.3 L682.5 52.6 L683.0 52.0 L683.5 50.5 L684.0 48.6 L684.5 46.2 L685.0 43.4 L685.5 45.6 L686.0 48.1 L686.5 50.1 L687.0 51.7 L687.5 52.7 L688.0 52.5 L688.5 51.0 L689.0 48.7 L689.5 45.8 L690.0 47.8 L690.5 50.3 L691.0 52.0 L691.5 52.8 L692.0 52.0 L692.5 50.6 L693.0 48.8 L693.5 46.6 L694.0 44.1 L694.5 46.4 L695.0 48.7 L695.5 50.5 L696.0 51.9 L696.5 52.6 L697.0 52.7 L697.5 51.4 L698.0 49.4 L698.5 46.8 L699.0 47.6 L699.5 50.1 L700.0 51.9 L700.5 52.7 L701.0 51.5 L701.5 49.7 L702.0 47.4 L702.5 44.5 L703.0 41.4 L703.5 44.7 L704.0 47.6 L704.5 49.9 L705.0 51.7 L705.5 52.3 L706.0 50.9 L706.5 48.9 L707.0 46.6 L707.5 49.1 L708.0 51.1 L708.5 52.4 L709.0 52.7 L709.5 52.6 L710.0 51.4 L710.5 49.6 L711.0 47.1 L711.5 44.2 L712.0 41.7 L712.5 45.0 L713.0 47.8 L713.5 50.1 L714.0 51.8 L714.5 52.7 L715.0 52.8 L715.5 51.8 L716.0 50.2 L716.5 48.0 L717.0 47.7 L717.5 50.0 L718.0 51.7 L718.5 52.6 L719.0 51.6 L719.5 50.0 L720.0 47.9 L720.5 45.5 L721.0 43.8 L721.5 46.5 L722.0 48.8 L722.5 50.7 L723.0 52.1 L723.5 52.6 L724.0 51.6 L724.5 50.2 L725.0 48.3 L725.5 49.8 L726.0 51.3 L726.5 52.4 L727.0 52.8 L727.5 52.5 L728.0 51.2 L728.5 49.3 L729.0 46.8 L729.5 43.8 L730.0 42.4 L730.5 45.5 L731.0 48.2 L731.5 50.4 L732.0 52.0 L732.5 52.7 L733.0 51.9 L733.5 50.4 L734.0 48.5 L734.5 49.0 L735.0 50.8 L735.5 52.1 L736.0 52.6 L736.5 52.5 L737.0 51.4 L737.5 49.7 L738.0 47.6 L738.5 45.0 L739.0 44.3 L739.5 46.9 L740.0 49.1 L740.5 50.9 L741.0 52.2 L741.5 52.3 L742.0 50.9 L742.5 49.1 L743.0 47.8 L743.5 49.9 L744.0 51.5 L744.5 52.6 L745.0 52.7 L745.5 52.3 L746.0 50.8 L746.5 48.7 L747.0 46.0 L747.5 42.9 L748.0 42.5 L748.5 45.7 L749.0 48.4 L749.5 50.6 L750.0 52.2 L750.5 52.7 L751.0 51.6 L751.5 49.8 L752.0 47.5 L752.5 48.1 L753.0 50.3 L753.5 51.9 L754.0 52.9 L754.5 52.5 L755.0 51.5 L755.5 50.0 L756.0 48.3 L756.5 46.1 L757.0 46.2 L757.5 48.3 L758.0 50.1 L758.5 51.5 L759.0 52.5 L759.5 52.4 L760.0 51.4 L760.5 49.9 L761.0 48.8 L761.5 50.5 L762.0 51.8 L762.5 52.7 L763.0 52.7 L763.5 52.3 L764.0 51.1 L764.5 49.4 L765.0 47.3 L765.5 44.8 L766.0 45.3 L766.5 47.8 L767.0 49.8 L767.5 51.4 L768.0 52.5 L768.5 52.6 L769.0 52.6 L769.5 51.6 L770.0 50.2 L770.5 48.4 L771.0 50.0 L771.5 51.4 L772.0 52.5 L772.5 52.2 L773.0 50.9 L773.5 49.2 L774.0 47.0 L774.5 44.4 L775.0 45.4 L775.5 47.8 L776.0 49.9 L776.5 51.5 L777.0 52.6 L777.5 53.1 L778.0 52.5 L778.5 51.5 L779.0 49.9 L779.5 47.9 L780.0 49.7 L780.5 51.3 L781.0 52.5 L781.5 52.1 L782.0 50.7 L782.5 48.8 L783.0 46.5 L783.5 43.7 L784.0 45.2 L784.5 47.7 L785.0 49.8 L785.5 51.5 L786.0 52.6 L786.5 52.7 L787.0 51.8 L787.5 49.8 L788.0 47.2 L788.5 46.2 L789.0 49.1 L789.5 51.2 L790.0 52.6 L790.5 51.8 L791.0 50.1 L791.5 47.8 L792.0 45.0 L792.5 41.7 L793.0 44.0 L793.5 47.0 L794.0 49.4 L794.5 51.3 L795.0 52.6 L795.5 52.7 L796.0 52.5 L796.5 51.1 L797.0 49.1 L797.5 46.4 L798.0 48.3 L798.5 50.5 L799.0 52.1 L799.5 51.8 L800.0 50.3 L800.5 48.2 L801.0 45.6 L801.5 42.6 L802.0 45.2 L802.5 47.8 L803.0 50.0 L803.5 51.6 L804.0 52.7 L804.5 52.6 L805.0 51.9 L805.5 50.5 L806.0 48.6 L806.5 48.8 L807.0 50.7 L807.5 52.0 L808.0 52.7 L808.5 51.5 L809.0 49.7 L809.5 47.2 L810.0 44.2 L810.5 40.7 L811.0 44.2 L811.5 47.2 L812.0 49.7 L812.5 51.5 L813.0 52.7 L813.5 52.0 L814.0 50.6 L814.5 48.6 L815.0 48.1 L815.5 50.2 L816.0 51.8 L816.5 52.8 L817.0 52.7 L817.5 51.4 L818.0 49.5 L818.5 47.0 L819.0 43.9 L819.0 64.9 L818.5 62.0 L818.0 59.6 L817.5 57.7 L817.0 56.5 L816.5 56.4 L816.0 57.4 L815.5 58.9 L815.0 60.9 L814.5 60.4 L814.0 58.5 L813.5 57.1 L813.0 56.6 L812.5 57.6 L812.0 59.4 L811.5 61.8 L811.0 64.6 L810.5 68.0 L810.0 64.6 L809.5 61.8 L809.0 59.4 L808.5 57.6 L808.0 56.5 L807.5 57.1 L807.0 58.4 L806.5 60.2 L806.0 60.4 L805.5 58.6 L805.0 57.2 L804.5 56.4 L804.0 56.5 L803.5 57.5 L803.0 59.1 L802.5 61.2 L802.0 63.7 L801.5 66.1 L801.0 63.3 L800.5 60.8 L800.0 58.8 L799.5 57.3 L799.0 57.0 L798.5 58.6 L798.0 60.7 L797.5 62.5 L797.0 60.0 L796.5 58.0 L796.0 56.7 L795.5 56.0 L795.0 56.6 L794.5 57.8 L794.0 59.6 L793.5 62.0 L793.0 64.8 L792.5 67.0 L792.0 63.9 L791.5 61.2 L791.0 59.0 L790.5 57.3 L790.0 56.6 L789.5 57.9 L789.0 60.0 L788.5 62.7 L788.0 61.8 L787.5 59.3 L787.0 57.4 L786.5 56.7 L786.0 56.6 L785.5 57.6 L785.0 59.2 L784.5 61.3 L784.0 63.7 L783.5 65.1 L783.0 62.5 L782.5 60.2 L782.0 58.4 L781.5 57.1 L781.0 56.7 L780.5 57.8 L780.0 59.4 L779.5 61.1 L779.0 59.2 L778.5 57.7 L778.0 56.6 L777.5 56.7 L777.0 56.6 L776.5 57.7 L776.0 59.2 L775.5 61.2 L775.0 63.5 L774.5 64.5 L774.0 62.0 L773.5 59.9 L773.0 58.2 L772.5 56.9 L772.0 56.7 L771.5 57.7 L771.0 59.1 L770.5 60.6 L770.0 58.9 L769.5 57.5 L769.0 56.6 L768.5 56.2 L768.0 56.7 L767.5 57.7 L767.0 59.3 L766.5 61.2 L766.0 63.5 L765.5 64.1 L765.0 61.7 L764.5 59.6 L764.0 58.0 L763.5 56.8 L763.0 56.4 L762.5 56.5 L762.0 57.3 L761.5 58.6 L761.0 60.2 L760.5 59.2 L760.0 57.8 L759.5 56.8 L759.0 56.7 L758.5 57.6 L758.0 59.0 L757.5 60.7 L757.0 62.7 L756.5 62.8 L756.0 60.8 L755.5 59.0 L755.0 57.7 L754.5 56.7 L754.0 56.3 L753.5 57.2 L753.0 58.8 L752.5 60.9 L752.0 61.5 L751.5 59.3 L751.0 57.6 L750.5 56.5 L750.0 57.0 L749.5 58.5 L749.0 60.6 L748.5 63.2 L748.0 66.3 L747.5 65.9 L747.0 62.9 L746.5 60.3 L746.0 58.3 L745.5 56.9 L745.0 56.4 L744.5 56.6 L744.0 57.6 L743.5 59.2 L743.0 61.2 L742.5 59.9 L742.0 58.2 L741.5 56.9 L741.0 56.9 L740.5 58.2 L740.0 59.9 L739.5 62.1 L739.0 64.6 L738.5 63.8 L738.0 61.4 L737.5 59.4 L737.0 57.8 L736.5 56.7 L736.0 56.3 L735.5 57.1 L735.0 58.3 L734.5 60.1 L734.0 60.5 L733.5 58.7 L733.0 57.3 L732.5 56.4 L732.0 57.2 L731.5 58.7 L731.0 60.8 L730.5 63.4 L730.0 66.4 L729.5 65.0 L729.0 62.2 L728.5 59.8 L728.0 57.9 L727.5 56.7 L727.0 56.5 L726.5 56.7 L726.0 57.8 L725.5 59.3 L725.0 60.7 L724.5 58.9 L724.0 57.5 L723.5 56.7 L723.0 57.1 L722.5 58.4 L722.0 60.2 L721.5 62.4 L721.0 65.0 L720.5 63.4 L720.0 61.1 L719.5 59.1 L719.0 57.6 L718.5 56.7 L718.0 57.5 L717.5 59.1 L717.0 61.3 L716.5 61.0 L716.0 58.9 L715.5 57.3 L715.0 56.3 L714.5 56.7 L714.0 57.4 L713.5 59.0 L713.0 61.2 L712.5 63.9 L712.0 67.1 L711.5 64.6 L711.0 61.8 L710.5 59.5 L710.0 57.7 L709.5 56.7 L709.0 56.1 L708.5 56.7 L708.0 58.0 L707.5 59.9 L707.0 62.3 L706.5 60.2 L706.0 58.2 L705.5 56.9 L705.0 57.5 L704.5 59.2 L704.0 61.4 L703.5 64.1 L703.0 67.3 L702.5 64.4 L702.0 61.6 L701.5 59.3 L701.0 57.6 L700.5 56.5 L700.0 57.3 L699.5 59.0 L699.0 61.3 L698.5 62.1 L698.0 59.6 L697.5 57.7 L697.0 56.5 L696.5 56.5 L696.0 57.3 L695.5 58.6 L695.0 60.4 L694.5 62.5 L694.0 64.8 L693.5 62.3 L693.0 60.2 L692.5 58.5 L692.0 57.2 L691.5 56.6 L691.0 57.1 L690.5 58.8 L690.0 61.2 L689.5 63.1 L689.0 60.3 L688.5 58.2 L688.0 56.7 L687.5 56.5 L687.0 57.5 L686.5 59.0 L686.0 61.0 L685.5 63.3 L685.0 65.4 L684.5 62.7 L684.0 60.4 L683.5 58.6 L683.0 57.2 L682.5 56.3 L682.0 56.9 L681.5 58.5 L681.0 60.7 L680.5 63.4 L680.0 60.6 L679.5 58.4 L679.0 56.9 L678.5 56.5 L678.0 57.5 L677.5 59.0 L677.0 60.9 L676.5 63.2 L676.0 64.7 L675.5 62.2 L675.0 60.1 L674.5 58.3 L674.0 57.1 L673.5 56.3 L673.0 57.5 L672.5 59.4 L672.0 61.9 L671.5 62.7 L671.0 59.9 L670.5 57.9 L670.0 56.5 L669.5 56.7 L669.0 57.3 L668.5 58.5 L668.0 60.1 L667.5 61.9 L667.0 62.8 L666.5 60.9 L666.0 59.2 L665.5 57.8 L665.0 56.8 L664.5 56.3 L664.0 56.4 L663.5 57.2 L663.0 58.6 L662.5 60.4 L662.0 60.3 L661.5 58.5 L661.0 57.2 L660.5 56.6 L660.0 57.5 L659.5 58.9 L659.0 60.6 L658.5 62.6 L658.0 63.2 L657.5 61.1 L657.0 59.3 L656.5 57.9 L656.0 56.8 L655.5 56.4 L655.0 57.0 L654.5 58.5 L654.0 60.5 L653.5 62.2 L653.0 59.8 L652.5 57.9 L652.0 56.6 L651.5 56.8 L651.0 58.2 L650.5 60.1 L650.0 62.5 L649.5 65.4 L649.0 65.7 L648.5 62.8 L648.0 60.3 L647.5 58.4 L647.0 57.0 L646.5 56.2 L646.0 56.6 L645.5 57.4 L645.0 59.2 L644.5 61.5 L644.0 61.7 L643.5 59.3 L643.0 57.5 L642.5 56.7 L642.0 57.6 L641.5 58.9 L641.0 60.6 L640.5 62.5 L640.0 62.4 L639.5 60.5 L639.0 58.9 L638.5 57.6 L638.0 56.6 L637.5 56.7 L637.0 57.7 L636.5 59.2 L636.0 61.2 L635.5 59.3 L635.0 57.8 L634.5 56.7 L634.0 56.2 L633.5 56.9 L633.0 58.1 L632.5 59.9 L632.0 62.0 L631.5 64.6 L631.0 64.1 L630.5 61.6 L630.0 59.5 L629.5 57.9 L629.0 56.7 L628.5 56.5 L628.0 57.7 L627.5 59.6 L627.0 62.2 L626.5 61.6 L626.0 59.2 L625.5 57.4 L625.0 56.5 L624.5 56.8 L624.0 57.8 L623.5 59.1 L623.0 60.8 L622.5 62.7 L622.0 62.0 L621.5 60.1 L621.0 58.6 L620.5 57.4 L620.0 56.5 L619.5 56.7 L619.0 57.2 L618.5 58.4 L618.0 60.0 L617.5 59.5 L617.0 58.0 L616.5 56.9 L616.0 56.4 L615.5 57.1 L615.0 58.5 L614.5 60.4 L614.0 62.7 L613.5 65.4 L613.0 63.9 L612.5 61.4 L612.0 59.3 L611.5 57.7 L611.0 56.6 L610.5 56.5 L610.0 56.7 L609.5 58.0 L609.0 59.8 L608.5 62.2 L608.0 60.1 L607.5 58.2 L607.0 56.9 L606.5 57.3 L606.0 58.9 L605.5 61.0 L605.0 63.7 L604.5 66.7 L604.0 64.6 L603.5 61.8 L603.0 59.5 L602.5 57.7 L602.0 56.6 L601.5 56.3 L601.0 57.0 L600.5 58.6 L600.0 60.7 L599.5 62.5 L599.0 60.0 L598.5 58.0 L598.0 56.7 L597.5 57.4 L597.0 59.0 L596.5 61.1 L596.0 63.8 L595.5 66.8 L595.0 64.2 L594.5 61.5 L594.0 59.3 L593.5 57.6 L593.0 56.8 L592.5 58.3 L592.0 60.5 L591.5 63.3 L591.0 60.9 L590.5 58.6 L590.0 57.0 L589.5 56.4 L589.0 56.4 L588.5 57.4 L588.0 58.9 L587.5 61.0 L587.0 63.4 L586.5 66.3 L586.0 63.4 L585.5 61.0 L585.0 58.9 L584.5 57.4 L584.0 56.4 L583.5 57.1 L583.0 58.2 L582.5 59.6 L582.0 58.7 L581.5 57.5 L581.0 56.7 L580.5 56.3 L580.0 56.5 L579.5 57.5 L579.0 59.1 L578.5 61.3 L578.0 63.8 L577.5 66.3 L577.0 63.4 L576.5 60.9 L576.0 58.9 L575.5 57.3 L575.0 56.4 L574.5 56.6 L574.0 56.7 L573.5 57.8 L573.0 59.5 L572.5 61.6 L572.0 59.7 L571.5 58.0 L571.0 56.8 L570.5 57.6 L570.0 59.3 L569.5 61.4 L569.0 64.0 L568.5 66.0 L568.0 63.1 L567.5 60.7 L567.0 58.7 L566.5 57.2 L566.0 56.3 L565.5 57.2 L565.0 58.6 L564.5 60.4 L564.0 60.4 L563.5 58.6 L563.0 57.2 L562.5 56.4 L562.0 56.5 L561.5 57.4 L561.0 58.8 L560.5 60.6 L560.0 62.7 L559.5 63.9 L559.0 61.6 L558.5 59.7 L558.0 58.1 L557.5 56.9 L557.0 56.7 L556.5 57.9 L556.0 59.8 L555.5 62.2 L555.0 60.4 L554.5 58.4 L554.0 56.9 L553.5 56.4 L553.0 56.6 L552.5 57.6 L552.0 59.1 L551.5 61.0 L551.0 63.3 L550.5 64.2 L550.0 61.8 L549.5 59.7 L549.0 58.1 L548.5 56.9 L548.0 57.3 L547.5 59.0 L547.0 61.2 L546.5 61.7 L546.0 59.3 L545.5 57.6 L545.0 56.5 L544.5 56.7 L544.0 56.8 L543.5 58.0 L543.0 59.9 L542.5 62.2 L542.0 65.0 L541.5 65.6 L541.0 62.7 L540.5 60.3 L540.0 58.4 L539.5 57.0 L539.0 56.2 L538.5 56.5 L538.0 57.5 L537.5 59.1 L537.0 61.2 L536.5 60.4 L536.0 58.5 L535.5 57.1 L535.0 56.9 L534.5 58.3 L534.0 60.3 L533.5 62.9 L533.0 65.9 L532.5 66.0 L532.0 63.0 L531.5 60.4 L531.0 58.4 L530.5 56.9 L530.0 56.4 L529.5 56.5 L529.0 57.4 L528.5 58.9 L528.0 60.9 L527.5 60.2 L527.0 58.4 L526.5 57.0 L526.0 56.9 L525.5 58.2 L525.0 60.0 L524.5 62.2 L524.0 64.9 L523.5 64.5 L523.0 61.9 L522.5 59.7 L522.0 58.0 L521.5 56.8 L521.0 56.8 L520.5 58.0 L520.0 59.6 L519.5 61.3 L519.0 59.3 L518.5 57.7 L518.0 56.6 L517.5 56.4 L517.0 56.9 L516.5 58.2 L516.0 59.9 L515.5 62.1 L515.0 64.6 L514.5 63.9 L514.0 61.4 L513.5 59.4 L513.0 57.8 L512.5 56.7 L512.0 56.6 L511.5 57.8 L511.0 59.6 L510.5 62.0 L510.0 60.9 L509.5 58.7 L509.0 57.2 L508.5 56.3 L508.0 56.9 L507.5 57.9 L507.0 59.4 L506.5 61.1 L506.0 63.2 L505.5 62.3 L505.0 60.3 L504.5 58.7 L504.0 57.4 L503.5 56.5 L503.0 56.6 L502.5 56.6 L502.0 57.8 L501.5 59.5 L501.0 61.7 L500.5 60.2 L500.0 58.3 L499.5 56.9 L499.0 57.1 L498.5 58.5 L498.0 60.4 L497.5 62.6 L497.0 65.3 L496.5 63.7 L496.0 61.2 L495.5 59.2 L495.0 57.6 L494.5 56.6 L494.0 56.5 L493.5 57.0 L493.0 58.5 L492.5 60.6 L492.0 62.1 L491.5 59.7 L491.0 57.9 L490.5 56.6 L490.0 57.1 L489.5 58.4 L489.0 60.0 L488.5 62.1 L488.0 64.5 L487.5 62.6 L487.0 60.5 L486.5 58.7 L486.0 57.4 L485.5 56.8 L485.0 58.3 L484.5 60.6 L484.0 63.5 L483.5 61.3 L483.0 58.9 L482.5 57.1 L482.0 56.3 L481.5 56.6 L481.0 57.1 L480.5 58.2 L480.0 59.7 L479.5 61.6 L479.0 63.7 L478.5 61.7 L478.0 59.9 L477.5 58.3 L477.0 57.1 L476.5 56.7 L476.0 57.7 L475.5 59.1 L475.0 60.1 L474.5 58.5 L474.0 57.3 L473.5 56.5 L473.0 56.2 L472.5 56.4 L472.0 57.3 L471.5 58.7 L471.0 60.5 L470.5 62.7 L470.0 65.0 L469.5 62.5 L469.0 60.3 L468.5 58.6 L468.0 57.2 L467.5 56.9 L467.0 58.2 L466.5 60.1 L466.0 62.0 L465.5 59.7 L465.0 57.9 L464.5 56.7 L464.0 56.2 L463.5 56.5 L463.0 57.6 L462.5 59.3 L462.0 61.4 L461.5 64.0 L461.0 66.3 L460.5 63.4 L460.0 60.9 L459.5 58.8 L459.0 57.3 L458.5 56.4 L458.0 56.7 L457.5 57.3 L457.0 58.8 L456.5 60.7 L456.0 60.7 L455.5 58.7 L455.0 57.2 L454.5 56.5 L454.0 57.5 L453.5 58.9 L453.0 60.7 L452.5 62.8 L452.0 64.3 L451.5 61.9 L451.0 59.9 L450.5 58.2 L450.0 57.0 L449.5 57.3 L449.0 59.0 L448.5 61.3 L448.0 62.2 L447.5 59.7 L447.0 57.8 L446.5 56.6 L446.0 56.5 L445.5 56.6 L445.0 57.7 L444.5 59.3 L444.0 61.3 L443.5 63.7 L443.0 64.9 L442.5 62.3 L442.0 60.1 L441.5 58.3 L441.0 57.0 L440.5 56.3 L440.0 57.1 L439.5 58.7 L439.0 61.0 L438.5 62.5 L438.0 60.0 L437.5 58.0 L437.0 56.6 L436.5 56.6 L436.0 57.7 L435.5 59.2 L435.0 61.1 L434.5 63.5 L434.0 64.2 L433.5 61.8 L433.0 59.7 L432.5 58.1 L432.0 56.9 L431.5 56.6 L431.0 57.9 L430.5 59.9 L430.0 62.4 L429.5 60.9 L429.0 58.7 L428.5 57.1 L428.0 56.4 L427.5 56.6 L427.0 57.5 L426.5 58.8 L426.0 60.4 L425.5 62.3 L425.0 62.6 L424.5 60.6 L424.0 59.0 L423.5 57.6 L423.0 56.7 L422.5 57.2 L422.0 58.7 L421.5 60.8 L421.0 61.7 L420.5 59.4 L420.0 57.6 L419.5 56.6 L419.0 56.7 L418.5 56.7 L418.0 57.7 L417.5 59.0 L417.0 60.7 L416.5 62.7 L416.0 62.6 L415.5 60.6 L415.0 58.9 L414.5 57.6 L414.0 56.7 L413.5 56.8 L413.0 58.1 L412.5 59.7 L412.0 61.1 L411.5 59.1 L411.0 57.6 L410.5 56.6 L410.0 56.4 L409.5 56.9 L409.0 58.1 L408.5 59.8 L408.0 62.0 L407.5 64.5 L407.0 64.0 L406.5 61.5 L406.0 59.5 L405.5 57.8 L405.0 56.7 L404.5 56.8 L404.0 57.9 L403.5 59.3 L403.0 60.1 L402.5 58.5 L402.0 57.3 L401.5 56.6 L401.0 56.3 L400.5 56.8 L400.0 57.8 L399.5 59.2 L399.0 61.0 L398.5 63.0 L398.0 62.3 L397.5 60.3 L397.0 58.7 L396.5 57.4 L396.0 56.6 L395.5 56.3 L395.0 56.6 L394.5 57.3 L394.0 58.7 L393.5 60.4 L393.0 59.7 L392.5 58.1 L392.0 56.9 L391.5 57.1 L391.0 58.5 L390.5 60.4 L390.0 62.8 L389.5 65.5 L389.0 64.0 L388.5 61.5 L388.0 59.4 L387.5 57.7 L387.0 56.6 L386.5 56.5 L386.0 57.4 L385.5 58.9 L385.0 60.8 L384.5 60.1 L384.0 58.3 L383.5 57.0 L383.0 56.5 L382.5 56.9 L382.0 58.0 L381.5 59.4 L381.0 61.1 L380.5 63.1 L380.0 61.7 L379.5 59.9 L379.0 58.4 L378.5 57.2 L378.0 56.4 L377.5 56.6 L377.0 56.6 L376.5 57.6 L376.0 59.1 L375.5 60.9 L375.0 59.3 L374.5 57.8 L374.0 56.7 L373.5 57.3 L373.0 58.9 L372.5 61.0 L372.0 63.5 L371.5 66.4 L371.0 63.9 L370.5 61.3 L370.0 59.2 L369.5 57.6 L369.0 56.6 L368.5 56.4 L368.0 57.6 L367.5 59.6 L367.0 62.2 L366.5 62.5 L366.0 59.8 L365.5 57.7 L365.0 56.5 L364.5 57.4 L364.0 58.9 L363.5 61.0 L363.0 63.5 L362.5 66.3 L362.0 63.5 L361.5 61.0 L361.0 58.9 L360.5 57.4 L360.0 56.5 L359.5 57.5 L359.0 58.9 L358.5 60.8 L358.0 59.8 L357.5 58.1 L357.0 56.9 L356.5 56.2 L356.0 56.4 L355.5 57.2 L355.0 58.4 L354.5 59.9 L354.0 61.8 L353.5 63.7 L353.0 61.5 L352.5 59.7 L352.0 58.2 L351.5 57.0 L351.0 56.3 L350.5 56.5 L350.0 56.7 L349.5 57.9 L349.0 59.6 L348.5 61.5 L348.0 59.4 L347.5 57.8 L347.0 56.7 L346.5 57.6 L346.0 59.2 L345.5 61.3 L345.0 63.8 L344.5 65.7 L344.0 62.9 L343.5 60.6 L343.0 58.6 L342.5 57.2 L342.0 57.2 L341.5 58.8 L341.0 61.0 L340.5 62.0 L340.0 59.6 L339.5 57.7 L339.0 56.5 L338.5 56.5 L338.0 56.7 L337.5 57.9 L337.0 59.8 L336.5 62.3 L336.0 65.2 L335.5 66.9 L335.0 63.7 L334.5 61.0 L334.0 58.9 L333.5 57.2 L333.0 56.7 L332.5 56.8 L332.0 58.0 L331.5 59.5 L331.0 60.7 L330.5 58.9 L330.0 57.5 L329.5 56.5 L329.0 56.7 L328.5 57.8 L328.0 59.4 L327.5 61.5 L327.0 64.0 L326.5 65.0 L326.0 62.3 L325.5 60.1 L325.0 58.3 L324.5 57.0 L324.0 56.3 L323.5 56.3 L323.0 56.9 L322.5 58.0 L322.0 59.5 L321.5 59.8 L321.0 58.3 L320.5 57.1 L320.0 56.6 L319.5 57.7 L319.0 59.1 L318.5 60.9 L318.0 63.1 L317.5 63.6 L317.0 61.3 L316.5 59.4 L316.0 57.9 L315.5 56.8 L315.0 56.2 L314.5 56.3 L314.0 57.0 L313.5 58.3 L313.0 60.1 L312.5 60.8 L312.0 58.9 L311.5 57.4 L311.0 56.6 L310.5 57.5 L310.0 58.8 L309.5 60.4 L309.0 62.3 L308.5 62.4 L308.0 60.5 L307.5 58.9 L307.0 57.6 L306.5 56.7 L306.0 56.7 L305.5 57.7 L305.0 59.1 L304.5 60.8 L304.0 59.0 L303.5 57.6 L303.0 56.6 L302.5 56.4 L302.0 57.0 L301.5 58.4 L301.0 60.4 L300.5 62.9 L300.0 65.8 L299.5 65.4 L299.0 62.5 L298.5 60.1 L298.0 58.2 L297.5 56.8 L297.0 56.7 L296.5 57.0 L296.0 58.2 L295.5 59.8 L295.0 60.0 L294.5 58.3 L294.0 57.1 L293.5 56.4 L293.0 56.8 L292.5 58.0 L292.0 59.5 L291.5 61.4 L291.0 63.6 L290.5 63.0 L290.0 60.8 L289.5 59.0 L289.0 57.6 L288.5 56.6 L288.0 56.6 L287.5 58.0 L287.0 60.2 L286.5 63.0 L286.0 61.8 L285.5 59.2 L285.0 57.3 L284.5 56.3 L284.0 57.1 L283.5 58.5 L283.0 60.4 L282.5 62.8 L282.0 65.6 L281.5 64.3 L281.0 61.7 L280.5 59.5 L280.0 57.8 L279.5 56.6 L279.0 56.7 L278.5 56.4 L278.0 57.1 L277.5 58.1 L277.0 59.5 L276.5 58.9 L276.0 57.7 L275.5 56.8 L275.0 56.9 L274.5 58.1 L274.0 59.6 L273.5 61.4 L273.0 63.6 L272.5 62.3 L272.0 60.3 L271.5 58.6 L271.0 57.3 L270.5 56.5 L270.0 56.8 L269.5 58.0 L269.0 59.7 L268.5 61.3 L268.0 59.3 L267.5 57.7 L267.0 56.6 L266.5 56.3 L266.0 57.1 L265.5 58.3 L265.0 60.0 L264.5 62.0 L264.0 64.3 L263.5 62.5 L263.0 60.4 L262.5 58.7 L262.0 57.3 L261.5 56.5 L261.0 56.5 L260.5 57.5 L260.0 59.1 L259.5 61.2 L259.0 60.4 L258.5 58.5 L258.0 57.1 L257.5 56.4 L257.0 57.3 L256.5 58.8 L256.0 60.8 L255.5 63.3 L255.0 66.1 L254.5 63.5 L254.0 61.0 L253.5 59.0 L253.0 57.4 L252.5 56.5 L252.0 56.3 L251.5 56.8 L251.0 58.0 L250.5 59.6 L250.0 61.6 L249.5 59.5 L249.0 57.8 L248.5 56.7 L248.0 57.3 L247.5 58.6 L247.0 60.4 L246.5 62.5 L246.0 64.8 L245.5 62.3 L245.0 60.2 L244.5 58.5 L244.0 57.2 L243.5 56.5 L243.0 57.3 L242.5 58.8 L242.0 60.8 L241.5 60.5 L241.0 58.6 L240.5 57.2 L240.0 56.3 L239.5 56.5 L239.0 57.7 L238.5 59.5 L238.0 61.9 L237.5 64.7 L237.0 67.1 L236.5 64.0 L236.0 61.3 L235.5 59.0 L235.0 57.4 L234.5 56.6 L234.0 57.9 L233.5 59.9 L233.0 62.3 L232.5 60.8 L232.0 58.6 L231.5 57.1 L231.0 56.3 L230.5 56.5 L230.0 57.6 L229.5 59.1 L229.0 61.0 L228.5 63.4 L228.0 65.0 L227.5 62.4 L227.0 60.2 L226.5 58.4 L226.0 57.1 L225.5 56.5 L225.0 57.3 L224.5 58.5 L224.0 60.0 L223.5 59.0 L223.0 57.6 L222.5 56.7 L222.0 56.2 L221.5 56.6 L221.0 57.8 L220.5 59.5 L220.0 61.6 L219.5 64.2 L219.0 65.5 L218.5 62.7 L218.0 60.4 L217.5 58.5 L217.0 57.1 L216.5 57.0 L216.0 58.1 L215.5 59.6 L215.0 59.6 L214.5 58.1 L214.0 57.0 L213.5 56.4 L213.0 56.1 L212.5 56.6 L212.0 57.4 L211.5 58.7 L211.0 60.3 L210.5 62.2 L210.0 62.8 L209.5 60.8 L209.0 59.1 L208.5 57.8 L208.0 56.8 L207.5 56.2 L207.0 56.4 L206.5 57.1 L206.0 58.3 L205.5 59.8 L205.0 59.6 L204.5 58.1 L204.0 57.0 L203.5 56.8 L203.0 58.2 L202.5 60.1 L202.0 62.6 L201.5 65.5 L201.0 65.9 L200.5 62.9 L200.0 60.4 L199.5 58.4 L199.0 57.0 L198.5 56.2 L198.0 56.3 L197.5 57.2 L197.0 58.9 L196.5 61.1 L196.0 61.9 L195.5 59.5 L195.0 57.7 L194.5 57.0 L194.0 58.5 L193.5 60.6 L193.0 63.2 L192.5 66.3 L192.0 66.2 L191.5 63.1 L191.0 60.5 L190.5 58.4 L190.0 56.9 L189.5 56.2 L189.0 56.8 L188.5 57.8 L188.0 59.2 L187.5 60.1 L187.0 58.5 L186.5 57.3 L186.0 56.5 L185.5 56.7 L185.0 57.7 L184.5 59.0 L184.0 60.7 L183.5 62.7 L183.0 62.3 L182.5 60.3 L182.0 58.7 L181.5 57.5 L181.0 56.6 L180.5 56.3 L180.0 56.8 L179.5 58.3 L179.0 60.5 L178.5 63.3 L178.0 60.8 L177.5 58.6 L177.0 57.0 L176.5 56.9 L176.0 58.0 L175.5 59.6 L175.0 61.5 L174.5 63.8 L174.0 62.9 L173.5 60.8 L173.0 59.0 L172.5 57.6 L172.0 56.6 L171.5 57.1 L171.0 58.2 L170.5 59.6 L170.0 59.2 L169.5 57.9 L169.0 56.9 L168.5 56.5 L168.0 56.3 L167.5 56.9 L167.0 58.1 L166.5 59.7 L166.0 61.6 L165.5 63.9 L165.0 62.7 L164.5 60.6 L164.0 58.8 L163.5 57.4 L163.0 56.5 L162.5 56.8 L162.0 57.8 L161.5 59.1 L161.0 59.4 L160.5 58.1 L160.0 57.0 L159.5 56.6 L159.0 56.3 L158.5 57.0 L158.0 58.2 L157.5 59.7 L157.0 61.7 L156.5 63.9 L156.0 62.4 L155.5 60.3 L155.0 58.6 L154.5 57.3 L154.0 56.5 L153.5 56.2 L153.0 56.7 L152.5 58.1 L152.0 60.2 L151.5 62.8 L151.0 60.9 L150.5 58.6 L150.0 57.0 L149.5 57.3 L149.0 58.8 L148.5 60.8 L148.0 63.3 L147.5 66.1 L147.0 63.7 L146.5 61.2 L146.0 59.1 L145.5 57.5 L145.0 56.5 L144.5 56.3 L144.0 57.1 L143.5 58.2 L143.0 59.8 L142.5 59.7 L142.0 58.2 L141.5 57.0 L141.0 56.6 L140.5 57.4 L140.0 58.9 L139.5 60.9 L139.0 63.4 L138.5 66.2 L138.0 63.4 L137.5 60.9 L137.0 58.9 L136.5 57.4 L136.0 56.5 L135.5 57.3 L135.0 58.8 L134.5 60.8 L134.0 60.7 L133.5 58.7 L133.0 57.2 L132.5 56.6 L132.0 56.6 L131.5 57.7 L131.0 59.6 L130.5 62.0 L130.0 64.9 L129.5 67.7 L129.0 64.4 L128.5 61.6 L128.0 59.2 L127.5 57.5 L127.0 56.7 L126.5 57.8 L126.0 59.3 L125.5 60.7 L125.0 58.9 L124.5 57.5 L124.0 56.6 L123.5 56.6 L123.0 56.6 L122.5 57.3 L122.0 58.6 L121.5 60.3 L121.0 62.3 L120.5 63.8 L120.0 61.6 L119.5 59.7 L119.0 58.1 L118.5 57.0 L118.0 56.3 L117.5 56.8 L117.0 57.8 L116.5 59.2 L116.0 60.4 L115.5 58.7 L115.0 57.4 L114.5 56.5 L114.0 56.6 L113.5 57.8 L113.0 59.6 L112.5 61.8 L112.0 64.5 L111.5 66.1 L111.0 63.2 L110.5 60.7 L110.0 58.7 L109.5 57.2 L109.0 57.0 L108.5 58.3 L108.0 60.1 L107.5 61.2 L107.0 59.1 L106.5 57.6 L106.0 56.5 L105.5 56.1 L105.0 56.7 L104.5 58.1 L104.0 60.0 L103.5 62.4 L103.0 65.4 L102.5 66.5 L102.0 63.4 L101.5 60.8 L101.0 58.7 L100.5 57.1 L100.0 57.1 L99.5 58.6 L99.0 60.5 L98.5 61.0 L98.0 59.0 L97.5 57.4 L97.0 56.5 L96.5 56.6 L96.0 56.7 L95.5 57.9 L95.0 59.5 L94.5 61.6 L94.0 64.1 L93.5 64.6 L93.0 62.1 L92.5 59.9 L92.0 58.2 L91.5 56.9 L91.0 56.9 L90.5 58.3 L90.0 60.4 L89.5 62.7 L89.0 60.1 L88.5 58.1 L88.0 56.8 L87.5 56.2 L87.0 56.7 L86.5 57.7 L86.0 59.1 L85.5 60.9 L85.0 63.0 L84.5 63.0 L84.0 60.9 L83.5 59.1 L83.0 57.7 L82.5 56.7 L82.0 56.9 L81.5 58.1 L81.0 59.7 L80.5 60.8 L80.0 58.9 L79.5 57.5 L79.0 56.6 L78.5 56.2 L78.0 56.9 L77.5 58.4 L77.0 60.3 L76.5 62.8 L76.0 65.7 L75.5 65.3 L75.0 62.4 L74.5 60.0 L74.0 58.2 L73.5 56.8 L73.0 57.6 L72.5 59.4 L72.0 61.9 L71.5 61.6 L71.0 59.2 L70.5 57.4 L70.0 56.4 L69.5 56.7 L69.0 56.8 L68.5 57.9 L68.0 59.4 L67.5 61.2 L67.0 63.4 L66.5 62.8 L66.0 60.7 L65.5 58.9 L65.0 57.6 L64.5 56.6 L64.0 56.4 L63.5 56.6 L63.0 57.7 L62.5 59.3 L62.0 61.5 L61.5 60.1 L61.0 58.3 L60.5 56.9 L60.0 57.0 L59.5 58.2 L59.0 59.8 L58.5 61.8 L58.0 64.2 L57.5 63.1 L57.0 60.9 L56.5 59.0 L56.0 57.6 L55.5 56.6 L55.0 56.6 L54.5 57.8 L54.0 59.5 L53.5 61.7 L53.0 60.2 L52.5 58.3 L52.0 56.9 L51.5 56.3 L51.0 57.3 L50.5 58.9 L50.0 61.1 L49.5 63.8 L49.0 67.0 L48.5 65.0 L48.0 62.1 L47.5 59.7 L47.0 57.9 L46.5 56.6 L46.0 56.4 L45.5 56.5 L45.0 57.5 L44.5 59.1 L44.0 61.1 L43.5 60.2 L43.0 58.4 L42.5 57.0 L42.0 57.0 L41.5 58.0 L41.0 59.5 L40.5 61.2 L40.0 63.3 L39.5 61.7 L39.0 59.9 L38.5 58.4 L38.0 57.2 L37.5 56.8 L37.0 58.0 L36.5 59.8 L36.0 62.1 L35.5 59.8 L35.0 58.0 L34.5 56.8 L34.0 56.2 L33.5 56.6 L33.0 57.6 L32.5 59.4 L32.0 61.7 L31.5 64.6 L31.0 68.0 L30.5 64.9 L30.0 62.0 L29.5 59.5 L29.0 57.7 L28.5 56.5 L28.0 56.4 L27.5 56.9 L27.0 58.1 L26.5 59.9 L26.0 61.2 L25.5 59.2 L25.0 57.6 L24.5 56.6 L24.0 57.4 L23.5 59.0 L23.0 61.0 L22.5 63.5 L22.0 66.1 L21.5 63.2 L21.0 60.8 L20.5 58.8 L20.0 57.3 L19.5 56.4 L19.0 57.1 L18.5 58.4 L18.0 60.1 L17.5 60.1 L17.0 58.4 L16.5 57.1 L16.0 56.3 L15.5 56.5 L15.0 57.6 L14.5 59.3 L14.0 61.6 L13.5 64.2 L13.0 66.5 L12.5 63.5 L12.0 61.0 L11.5 58.9 L11.0 57.3 L10.5 56.7 L10.0 57.6 L9.5 58.9 L9.0 59.7 L8.5 58.2 L8.0 57.2 L7.5 56.4 L7.0 56.3 L6.5 56.6 L6.0 57.9 L5.5 59.8 L5.0 62.3 L4.5 65.3 L4.0 67.3 L3.5 64.0 L3.0 61.2 L2.5 59.0 L2.0 57.3 L1.5 56.3 L1.0 56.2 L0.5 56.3 L0.0 56.6Z" fill="#1f0d25"/></svg>
<div style="left:1155.70px;top:115.00px;width:1.90px;height:364.00px;background:#1d1e22;"></div>
<div style="left:1392.00px;top:66.00px;width:8.00px;height:413.00px;background:#1e1f24;"></div>
<div style="left:1160.30px;top:86.40px;width:23.70px;height:9.80px;background:#141417;border-radius:5px"></div>
<span style="left:1160.30px;width:23.70px;top:86.60px;font-size:9px;color:#e6e6e8;text-align:center;font-weight:bold">Set</span>
<div style="left:1192.50px;top:86.40px;width:18.50px;height:9.80px;background:#141417;"></div>
<svg style="left:1192.50px;top:86.40px;" width="19" height="10" viewBox="0 0 19 10"><path d="M6.5 7.5L11.5 2.5" stroke="#e6e6e8" stroke-width="1.3"/><circle cx="6.3" cy="7.6" r="1.2" fill="#e6e6e8"/></svg>
<div style="left:1214.40px;top:86.40px;width:18.40px;height:9.80px;background:#141417;"></div>
<svg style="left:1214.40px;top:86.40px;" width="19" height="10" viewBox="0 0 19 10"><path d="M7 4.5V3.5a2.2 2.2 0 0 1 4.4 0v1" stroke="#e6e6e8" stroke-width="1.1" fill="none"/><rect x="6" y="4.5" width="6.5" height="4" fill="#e6e6e8"/></svg>
<div style="left:1160.40px;top:100.70px;width:10.00px;height:10.00px;background:#141417;border-radius:50%"></div>
<div style="left:1173.30px;top:100.70px;width:10.00px;height:10.00px;background:#141417;border-radius:50%"></div>
<svg style="left:1160.40px;top:100.70px;" width="10" height="10" viewBox="0 0 10 10"><path d="M2.2 5h5.8M2.2 5l2.3-2.3M2.2 5l2.3 2.3" stroke="#e6e6e8" stroke-width="1.2" fill="none"/></svg>
<svg style="left:1173.30px;top:100.70px;" width="10" height="10" viewBox="0 0 10 10"><path d="M7.8 5H2M7.8 5L5.5 2.7M7.8 5L5.5 7.3" stroke="#e6e6e8" stroke-width="1.2" fill="none"/></svg>
<div style="left:1157.60px;top:328.00px;width:234.40px;height:151.00px;background:#2d3036;"></div>
<div style="left:1157.60px;top:115.80px;width:75.60px;height:69.80px;background:#27fea6;"></div>
<div style="left:1233.20px;top:115.80px;width:1.80px;height:69.80px;background:#1f2024;"></div>
<svg style="left:1159.00px;top:116.80px;" width="12" height="12" viewBox="0 0 12 12"><circle cx="5.4" cy="5.6" r="4.5" fill="none" stroke="#0b3d28" stroke-width="1.2"/><path d="M2.9 4.1h5L5.4 7.8z" fill="#0b3d28"/></svg>
<span style="left:1173.60px;top:118.40px;font-size:8.8px;color:#0b3d28;font-weight:bold">MIDI</span>
<div style="left:1235.00px;top:115.80px;width:58.40px;height:69.80px;background:#2d2f35;"></div>
<div style="left:1293.40px;top:115.80px;width:2.60px;height:69.80px;background:#1e1f23;"></div>
<div style="left:1236.40px;top:117.50px;width:56.00px;height:10.00px;background:#1a1b1e;"></div>
<span style="left:1238.50px;top:118.70px;font-size:9px;color:#e0e0e2;-webkit-text-stroke:0.2px #e0e0e2">All Ins</span>
<svg style="left:1284.00px;top:117.50px;" width="9" height="11" viewBox="0 0 9 11"><path d="M0.8 3.0h6.6l-3.3 3.8z" fill="#e6e6e8"/></svg>
<div style="left:1236.40px;top:131.70px;width:56.00px;height:9.60px;background:#1a1b1e;"></div>
<span style="left:1245px;top:132.70px;font-size:9px;color:#e0e0e2;width:39px;overflow:hidden;-webkit-text-stroke:0.2px #e0e0e2">All Channels</span>
<svg style="left:1284.00px;top:131.70px;" width="9" height="10" viewBox="0 0 9 10"><path d="M1 2.6h6.5l-3.25 4z" fill="#e6e6e8"/></svg>
<div style="left:1236.40px;top:145.80px;width:13.00px;height:9.20px;background:#1a1b1e;"></div>
<span style="left:1236.40px;width:13.00px;top:146.10px;font-size:9px;color:#e0e0e2;text-align:center;-webkit-text-stroke:0.2px #e0e0e2">In</span>
<div style="left:1251.40px;top:145.80px;width:24.50px;height:9.20px;background:#1a1b1e;"></div>
<div style="left:1253.00px;top:146.60px;width:21.00px;height:7.80px;background:#f49ac8;"></div>
<span style="left:1253.00px;width:21.00px;top:146.10px;font-size:9px;color:#3a1a2a;text-align:center;-webkit-text-stroke:0.1px #3a1a2a">Auto</span>
<div style="left:1277.40px;top:145.80px;width:15.00px;height:9.20px;background:#1a1b1e;"></div>
<span style="left:1277.40px;width:15.00px;top:146.10px;font-size:9px;color:#e0e0e2;text-align:center;-webkit-text-stroke:0.2px #e0e0e2">Off</span>
<div style="left:1236.40px;top:159.00px;width:56.00px;height:9.10px;background:#1a1b1e;"></div>
<span style="left:1238.50px;top:159.75px;font-size:9px;color:#e0e0e2;-webkit-text-stroke:0.2px #e0e0e2">Main</span>
<svg style="left:1284.00px;top:159.00px;" width="9" height="10" viewBox="0 0 9 10"><path d="M0.8 2.5h6.6l-3.3 3.8z" fill="#e6e6e8"/></svg>
<div style="left:1236.40px;top:169.20px;width:56.00px;height:13.10px;background:#2b2c31;border:1px solid #1d1e22"></div>
<div style="left:1296.00px;top:115.80px;width:96.00px;height:69.80px;background:#2d2f35;"></div>
<div style="left:1298.70px;top:117.50px;width:35.30px;height:10.00px;background:#f49ac8;"></div>
<span style="left:1298.70px;width:35.30px;top:118.10px;font-size:9px;color:#3a1a2a;text-align:center;-webkit-text-stroke:0.2px #3a1a2a">1</span>
<div style="left:1338.30px;top:117.50px;width:16.70px;height:10.00px;background:#1a1b1e;"></div>
<span style="left:1338.30px;width:16.70px;top:118.50px;font-size:9px;color:#e0e0e2;text-align:center;-webkit-text-stroke:0.25px #e0e0e2">S</span>
<div style="left:1358.70px;top:117.50px;width:17.10px;height:10.00px;background:#1a1b1e;"></div>
<svg style="left:1358.70px;top:117.50px;" width="18" height="10" viewBox="0 0 18 10"><circle cx="8.6" cy="5" r="3.2" fill="#e6e6e8"/><path d="M7.2 6.5l2.8-3" stroke="#1a1b1e" stroke-width="1"/></svg>
<div style="left:1298.70px;top:131.70px;width:35.30px;height:9.60px;background:#1a1b1e;"></div>
<div style="left:1298.70px;top:131.70px;width:29.60px;height:9.60px;background:#16899c;"></div>
<span style="left:1298.70px;width:29.60px;top:132.10px;font-size:9px;color:#cfe6ea;text-align:center;-webkit-text-stroke:0.2px #cfe6ea">0</span>
<div style="left:1338.30px;top:131.70px;width:37.50px;height:9.60px;background:#1a1b1e;"></div>
<span style="left:1338.30px;width:37.50px;top:132.30px;font-size:9px;color:#e0e0e2;text-align:center;-webkit-text-stroke:0.25px #e0e0e2">C</span>
<div style="left:1298.70px;top:145.80px;width:22.60px;height:9.20px;background:#1a1b1e;"></div>
<span style="left:1298.70px;width:22.60px;top:145.15px;font-size:11.5px;color:#e0e0e2;text-align:center;-webkit-text-stroke:0.2px #e0e0e2">&minus;&infin;</span>
<div style="left:1324.70px;top:145.80px;width:24.00px;height:9.20px;background:#1a1b1e;"></div>
<span style="left:1324.70px;width:24.00px;top:145.15px;font-size:11.5px;color:#e0e0e2;text-align:center;-webkit-text-stroke:0.2px #e0e0e2">&minus;&infin;</span>
<div style="left:1378.60px;top:117.30px;width:2.00px;height:65.80px;background:#17181b;"></div>
<div style="left:1382.20px;top:117.30px;width:2.00px;height:65.80px;background:#17181b;"></div>
<div style="left:1386.00px;top:115.80px;width:6.00px;height:69.80px;background:#2f3036;"></div>
<div style="left:1157.60px;top:185.60px;width:234.40px;height:1.60px;background:#1e1f23;"></div>
<div style="left:1157.60px;top:187.30px;width:75.60px;height:69.80px;background:#b9dae0;"></div>
<div style="left:1233.20px;top:187.30px;width:1.80px;height:69.80px;background:#1f2024;"></div>
<svg style="left:1159.00px;top:188.30px;" width="12" height="12" viewBox="0 0 12 12"><circle cx="5.4" cy="5.6" r="4.5" fill="none" stroke="#15181a" stroke-width="1.2"/><path d="M2.9 4.1h5L5.4 7.8z" fill="#15181a"/></svg>
<span style="left:1173.60px;top:189.90px;font-size:8.8px;color:#15181a;font-weight:bold">MIDI</span>
<div style="left:1235.00px;top:187.30px;width:58.40px;height:69.80px;background:#2d2f35;"></div>
<div style="left:1293.40px;top:187.30px;width:2.60px;height:69.80px;background:#1e1f23;"></div>
<div style="left:1236.40px;top:189.00px;width:56.00px;height:10.00px;background:#1a1b1e;"></div>
<span style="left:1238.50px;top:190.20px;font-size:9px;color:#e0e0e2;-webkit-text-stroke:0.2px #e0e0e2">All Ins</span>
<svg style="left:1284.00px;top:189.00px;" width="9" height="11" viewBox="0 0 9 11"><path d="M0.8 3.0h6.6l-3.3 3.8z" fill="#e6e6e8"/></svg>
<div style="left:1236.40px;top:203.20px;width:56.00px;height:9.60px;background:#1a1b1e;"></div>
<span style="left:1245px;top:204.20px;font-size:9px;color:#e0e0e2;width:39px;overflow:hidden;-webkit-text-stroke:0.2px #e0e0e2">All Channels</span>
<svg style="left:1284.00px;top:203.20px;" width="9" height="10" viewBox="0 0 9 10"><path d="M1 2.6h6.5l-3.25 4z" fill="#e6e6e8"/></svg>
<div style="left:1236.40px;top:217.30px;width:13.00px;height:9.20px;background:#1a1b1e;"></div>
<span style="left:1236.40px;width:13.00px;top:217.60px;font-size:9px;color:#e0e0e2;text-align:center;-webkit-text-stroke:0.2px #e0e0e2">In</span>
<div style="left:1251.40px;top:217.30px;width:24.50px;height:9.20px;background:#1a1b1e;"></div>
<div style="left:1253.00px;top:218.10px;width:21.00px;height:7.80px;background:#f49ac8;"></div>
<span style="left:1253.00px;width:21.00px;top:217.60px;font-size:9px;color:#3a1a2a;text-align:center;-webkit-text-stroke:0.1px #3a1a2a">Auto</span>
<div style="left:1277.40px;top:217.30px;width:15.00px;height:9.20px;background:#1a1b1e;"></div>
<span style="left:1277.40px;width:15.00px;top:217.60px;font-size:9px;color:#e0e0e2;text-align:center;-webkit-text-stroke:0.2px #e0e0e2">Off</span>
<div style="left:1236.40px;top:230.50px;width:56.00px;height:9.10px;background:#1a1b1e;"></div>
<span style="left:1238.50px;top:231.25px;font-size:9px;color:#e0e0e2;-webkit-text-stroke:0.2px #e0e0e2">Main</span>
<svg style="left:1284.00px;top:230.50px;" width="9" height="10" viewBox="0 0 9 10"><path d="M0.8 2.5h6.6l-3.3 3.8z" fill="#e6e6e8"/></svg>
<div style="left:1236.40px;top:240.70px;width:56.00px;height:13.10px;background:#2b2c31;border:1px solid #1d1e22"></div>
<div style="left:1296.00px;top:187.30px;width:96.00px;height:69.80px;background:#2d2f35;"></div>
<div style="left:1298.70px;top:189.00px;width:35.30px;height:10.00px;background:#f49ac8;"></div>
<span style="left:1298.70px;width:35.30px;top:189.60px;font-size:9px;color:#3a1a2a;text-align:center;-webkit-text-stroke:0.2px #3a1a2a">2</span>
<div style="left:1338.30px;top:189.00px;width:16.70px;height:10.00px;background:#1a1b1e;"></div>
<span style="left:1338.30px;width:16.70px;top:190.00px;font-size:9px;color:#e0e0e2;text-align:center;-webkit-text-stroke:0.25px #e0e0e2">S</span>
<div style="left:1358.70px;top:189.00px;width:17.10px;height:10.00px;background:#1a1b1e;"></div>
<svg style="left:1358.70px;top:189.00px;" width="18" height="10" viewBox="0 0 18 10"><circle cx="8.6" cy="5" r="3.2" fill="#e6e6e8"/><path d="M7.2 6.5l2.8-3" stroke="#1a1b1e" stroke-width="1"/></svg>
<div style="left:1298.70px;top:203.20px;width:35.30px;height:9.60px;background:#1a1b1e;"></div>
<div style="left:1298.70px;top:203.20px;width:29.60px;height:9.60px;background:#16899c;"></div>
<span style="left:1298.70px;width:29.60px;top:203.60px;font-size:9px;color:#cfe6ea;text-align:center;-webkit-text-stroke:0.2px #cfe6ea">0</span>
<div style="left:1338.30px;top:203.20px;width:37.50px;height:9.60px;background:#1a1b1e;"></div>
<span style="left:1338.30px;width:37.50px;top:203.80px;font-size:9px;color:#e0e0e2;text-align:center;-webkit-text-stroke:0.25px #e0e0e2">C</span>
<div style="left:1298.70px;top:217.30px;width:22.60px;height:9.20px;background:#1a1b1e;"></div>
<span style="left:1298.70px;width:22.60px;top:216.65px;font-size:11.5px;color:#e0e0e2;text-align:center;-webkit-text-stroke:0.2px #e0e0e2">&minus;&infin;</span>
<div style="left:1324.70px;top:217.30px;width:24.00px;height:9.20px;background:#1a1b1e;"></div>
<span style="left:1324.70px;width:24.00px;top:216.65px;font-size:11.5px;color:#e0e0e2;text-align:center;-webkit-text-stroke:0.2px #e0e0e2">&minus;&infin;</span>
<div style="left:1378.60px;top:188.80px;width:2.00px;height:65.80px;background:#17181b;"></div>
<div style="left:1382.20px;top:188.80px;width:2.00px;height:65.80px;background:#17181b;"></div>
<div style="left:1386.00px;top:187.30px;width:6.00px;height:69.80px;background:#2f3036;"></div>
<div style="left:1157.60px;top:257.10px;width:234.40px;height:1.60px;background:#1e1f23;"></div>
<div style="left:1157.60px;top:258.60px;width:75.60px;height:69.40px;background:#d96ee4;"></div>
<div style="left:1233.20px;top:258.60px;width:1.80px;height:69.40px;background:#1f2024;"></div>
<svg style="left:1159.00px;top:259.60px;" width="12" height="12" viewBox="0 0 12 12"><circle cx="5.4" cy="5.6" r="4.5" fill="none" stroke="#3e0e4c" stroke-width="1.2"/><path d="M2.9 4.1h5L5.4 7.8z" fill="#3e0e4c"/></svg>
<span style="left:1173.60px;top:261.20px;font-size:8.8px;color:#3e0e4c;-webkit-text-stroke:0.35px #3e0e4c">Audio</span>
<div style="left:1235.00px;top:258.60px;width:58.40px;height:69.40px;background:#2d2f35;"></div>
<div style="left:1293.40px;top:258.60px;width:2.60px;height:69.40px;background:#1e1f23;"></div>
<div style="left:1236.40px;top:260.30px;width:56.00px;height:10.00px;background:#1a1b1e;"></div>
<span style="left:1238.50px;top:261.50px;font-size:9px;color:#e0e0e2;-webkit-text-stroke:0.2px #e0e0e2">Ext. In</span>
<svg style="left:1284.00px;top:260.30px;" width="9" height="11" viewBox="0 0 9 11"><path d="M0.8 3.0h6.6l-3.3 3.8z" fill="#e6e6e8"/></svg>
<div style="left:1236.40px;top:274.50px;width:56.00px;height:9.60px;background:#1a1b1e;"></div>
<span style="left:1246.00px;top:275.50px;font-size:9px;color:#e0e0e2;-webkit-text-stroke:0.2px #e0e0e2">1/2</span>
<svg style="left:1284.00px;top:274.50px;" width="9" height="10" viewBox="0 0 9 10"><path d="M0.8 2.8h6.6l-3.3 3.8z" fill="#e6e6e8"/></svg>
<div style="left:1238.60px;top:280.30px;width:1.30px;height:2.20px;background:#2ee8a0;"></div>
<div style="left:1236.40px;top:288.60px;width:13.00px;height:9.20px;background:#1a1b1e;"></div>
<span style="left:1236.40px;width:13.00px;top:288.90px;font-size:9px;color:#e0e0e2;text-align:center;-webkit-text-stroke:0.2px #e0e0e2">In</span>
<div style="left:1251.40px;top:288.60px;width:24.50px;height:9.20px;background:#1a1b1e;"></div>
<span style="left:1251.40px;width:24.50px;top:288.90px;font-size:9px;color:#e0e0e2;text-align:center;-webkit-text-stroke:0.2px #e0e0e2">Auto</span>
<div style="left:1277.40px;top:288.60px;width:15.00px;height:9.20px;background:#1a1b1e;"></div>
<div style="left:1277.80px;top:289.40px;width:14.50px;height:7.80px;background:#f49ac8;"></div>
<span style="left:1277.40px;width:15.00px;top:288.90px;font-size:9px;color:#3a1a2a;text-align:center;-webkit-text-stroke:0.1px #3a1a2a">Off</span>
<div style="left:1236.40px;top:301.80px;width:56.00px;height:9.10px;background:#1a1b1e;"></div>
<span style="left:1238.50px;top:302.55px;font-size:9px;color:#e0e0e2;-webkit-text-stroke:0.2px #e0e0e2">Main</span>
<svg style="left:1284.00px;top:301.80px;" width="9" height="10" viewBox="0 0 9 10"><path d="M0.8 2.5h6.6l-3.3 3.8z" fill="#e6e6e8"/></svg>
<div style="left:1236.40px;top:312.00px;width:56.00px;height:13.10px;background:#2b2c31;border:1px solid #1d1e22"></div>
<div style="left:1296.00px;top:258.60px;width:96.00px;height:69.40px;background:#2d2f35;"></div>
<div style="left:1298.70px;top:260.30px;width:35.30px;height:10.00px;background:#f49ac8;"></div>
<span style="left:1298.70px;width:35.30px;top:260.90px;font-size:9px;color:#3a1a2a;text-align:center;-webkit-text-stroke:0.2px #3a1a2a">3</span>
<div style="left:1338.30px;top:260.30px;width:16.70px;height:10.00px;background:#1a1b1e;"></div>
<span style="left:1338.30px;width:16.70px;top:261.30px;font-size:9px;color:#e0e0e2;text-align:center;-webkit-text-stroke:0.25px #e0e0e2">S</span>
<div style="left:1358.70px;top:260.30px;width:17.10px;height:10.00px;background:#1a1b1e;"></div>
<svg style="left:1358.70px;top:260.30px;" width="18" height="10" viewBox="0 0 18 10"><circle cx="8.6" cy="5" r="3" fill="#e6e6e8"/></svg>
<div style="left:1298.70px;top:274.50px;width:35.30px;height:9.60px;background:#1a1b1e;"></div>
<div style="left:1298.70px;top:274.50px;width:29.60px;height:9.60px;background:#16899c;"></div>
<span style="left:1298.70px;width:29.60px;top:274.90px;font-size:9px;color:#cfe6ea;text-align:center;-webkit-text-stroke:0.2px #cfe6ea">0</span>
<div style="left:1338.30px;top:274.50px;width:37.50px;height:9.60px;background:#1a1b1e;"></div>
<span style="left:1338.30px;width:37.50px;top:275.10px;font-size:9px;color:#e0e0e2;text-align:center;-webkit-text-stroke:0.25px #e0e0e2">C</span>
<div style="left:1298.70px;top:288.60px;width:22.60px;height:9.20px;background:#1a1b1e;"></div>
<span style="left:1298.70px;width:22.60px;top:287.95px;font-size:11.5px;color:#e0e0e2;text-align:center;-webkit-text-stroke:0.2px #e0e0e2">&minus;&infin;</span>
<div style="left:1324.70px;top:288.60px;width:24.00px;height:9.20px;background:#1a1b1e;"></div>
<span style="left:1324.70px;width:24.00px;top:287.95px;font-size:11.5px;color:#e0e0e2;text-align:center;-webkit-text-stroke:0.2px #e0e0e2">&minus;&infin;</span>
<div style="left:1378.60px;top:260.10px;width:2.00px;height:65.40px;background:#17181b;"></div>
<div style="left:1382.20px;top:260.10px;width:2.00px;height:65.40px;background:#17181b;"></div>
<div style="left:1386.00px;top:258.60px;width:6.00px;height:69.40px;background:#2f3036;"></div>
<div style="left:1157.60px;top:328.00px;width:234.40px;height:0.00px;background:#1e1f23;"></div>
<div style="left:1157.60px;top:256.40px;width:234.40px;height:2.20px;background:#1e1f23;"></div>
<div style="left:1157.60px;top:328.00px;width:234.40px;height:1.20px;background:#1e1f23;"></div>
<div style="left:1392.00px;top:66.00px;width:1.20px;height:413.00px;background:#18191c;"></div>
</body></html>
